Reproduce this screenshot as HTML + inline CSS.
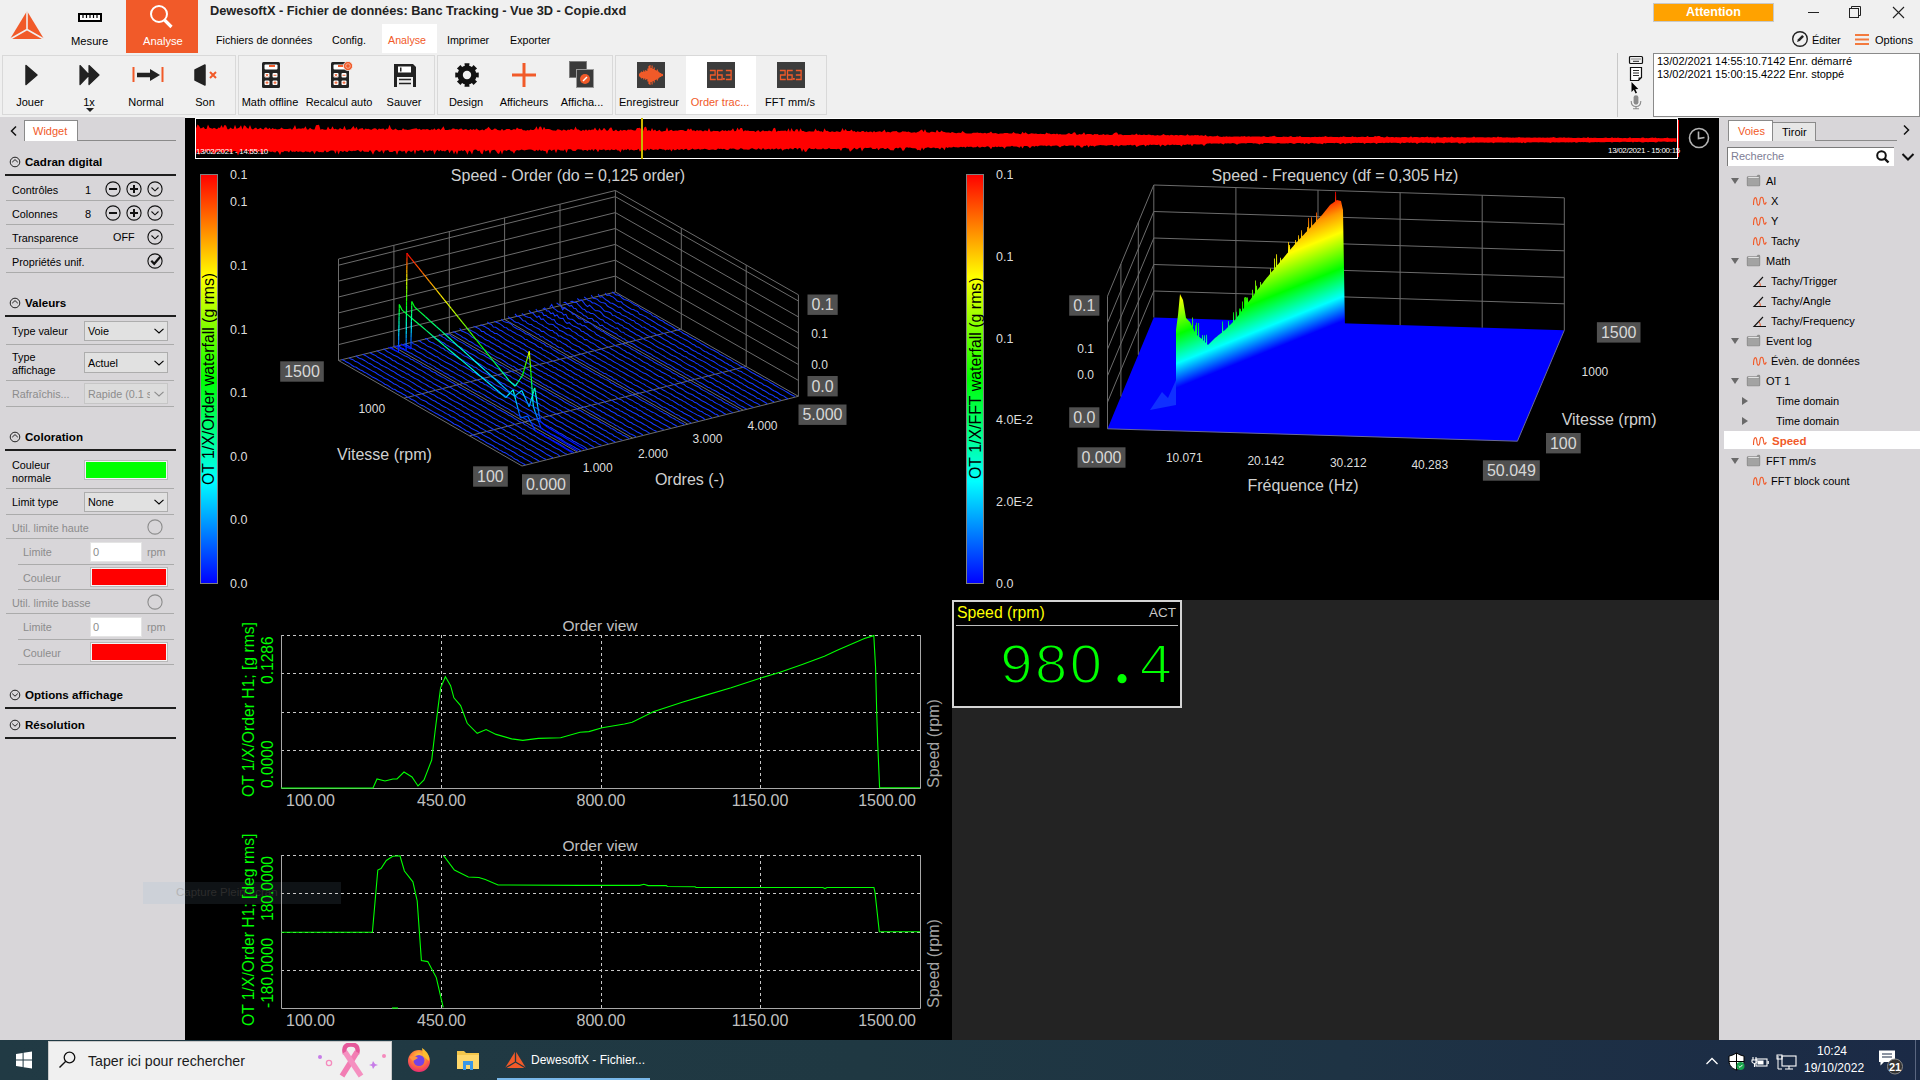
<!DOCTYPE html><html><head><meta charset='utf-8'><style>
*{margin:0;padding:0;box-sizing:border-box}
html,body{width:1920px;height:1080px;overflow:hidden;background:#f0f0f0;font-family:"Liberation Sans",sans-serif;color:#000}
.a{position:absolute}
.t{position:absolute;white-space:pre;line-height:1}
</style></head><body><div class="a" style="left:0px;top:117px;width:185px;height:923px;background:#d8d6d9"></div>
<div class="a" style="left:185px;top:118px;width:1534px;height:922px;background:#000"></div>
<div class="a" style="left:952px;top:600px;width:767px;height:440px;background:#232323"></div>
<div class="a" style="left:1719px;top:117px;width:201px;height:923px;background:#d8d6d9"></div>
<div class="a" style="left:0px;top:1040px;width:1920px;height:40px;background:linear-gradient(90deg,#1f3a42,#1c2b45)"></div>
<svg class="a" style="left:8px;top:9px" width="40" height="34" viewBox="0 0 40 34"><polygon points="19,2 36,30 2,30" fill="#f15a29"/><path d="M19,1 L19,20.5 M19,20.5 L1.5,30.5 M19,20.5 L36.5,30.5" stroke="#f0f0f0" stroke-width="1.6" fill="none"/></svg>
<svg class="a" style="left:78px;top:13px" width="24" height="9" viewBox="0 0 24 9"><rect x="1" y="1" width="22" height="7" fill="#fff" stroke="#000" stroke-width="2"/><path d="M5,2 V5 M8.5,2 V5 M12,2 V5 M15.5,2 V5 M19,2 V5" stroke="#000" stroke-width="1.2"/></svg>
<div class="t" style="left:71px;top:36px;font-size:11.2px;color:#000;">Mesure</div>
<div class="a" style="left:126px;top:0px;width:72px;height:53px;background:#f15a29"></div>
<svg class="a" style="left:146px;top:3px" width="30" height="28" viewBox="0 0 30 28"><circle cx="13" cy="11" r="8" fill="none" stroke="#fff" stroke-width="2"/><path d="M18.5,17 L25.5,24" stroke="#fff" stroke-width="3.2"/></svg>
<div class="t" style="left:143px;top:36px;font-size:11.2px;color:#fff;">Analyse</div>
<div class="t" style="left:210px;top:5px;font-size:12.8px;color:#222;font-weight:bold">DewesoftX - Fichier de données: Banc Tracking - Vue 3D - Copie.dxd</div>
<div class="a" style="left:382px;top:24px;width:55px;height:29px;background:#fff"></div>
<div class="t" style="left:216px;top:35px;font-size:10.7px;color:#000;">Fichiers de données</div>
<div class="t" style="left:332px;top:35px;font-size:10.7px;color:#000;">Config.</div>
<div class="t" style="left:388px;top:35px;font-size:10.7px;color:#f15a29;">Analyse</div>
<div class="t" style="left:447px;top:35px;font-size:10.7px;color:#000;">Imprimer</div>
<div class="t" style="left:510px;top:35px;font-size:10.7px;color:#000;">Exporter</div>
<div class="a" style="left:1653px;top:3px;width:121px;height:19px;background:#ffa200;border:1px solid #c8c8c8"></div>
<div class="t" style="left:1686px;top:6px;font-size:12.5px;color:#fff;font-weight:bold">Attention</div>
<svg class="a" style="left:1800px;top:0px" width="120" height="26" viewBox="0 0 120 26"><path d="M8,12.5 H19" stroke="#222" stroke-width="1"/><rect x="49.5" y="8.5" width="9" height="9" fill="none" stroke="#222" stroke-width="1"/><path d="M51.5,8.5 V6.5 H60.5 V15.5 H58.5" fill="none" stroke="#222" stroke-width="1"/><path d="M93,7 L104,18 M104,7 L93,18" stroke="#222" stroke-width="1.1"/></svg>
<svg class="a" style="left:1791px;top:30px" width="18" height="18" viewBox="0 0 18 18"><circle cx="9" cy="9" r="7.3" fill="none" stroke="#222" stroke-width="1.4"/><path d="M6,12 L7,9.2 L11.2,5 L13,6.8 L8.8,11 Z" fill="#222"/></svg>
<div class="t" style="left:1812px;top:35px;font-size:11px;color:#000;">Éditer</div>
<svg class="a" style="left:1854px;top:33px" width="16" height="14" viewBox="0 0 16 14"><path d="M1,2 H15 M1,6.5 H15 M1,11 H15" stroke="#f37a3e" stroke-width="2"/></svg>
<div class="t" style="left:1875px;top:35px;font-size:11px;color:#000;">Options</div>
<div class="a" style="left:2px;top:55px;width:234px;height:60px;border:1px solid #d9d9d9"></div>
<div class="a" style="left:238px;top:55px;width:197px;height:60px;border:1px solid #d9d9d9"></div>
<div class="a" style="left:437px;top:55px;width:176px;height:60px;border:1px solid #d9d9d9"></div>
<div class="a" style="left:615px;top:55px;width:212px;height:60px;border:1px solid #d9d9d9"></div>
<div class="a" style="left:686px;top:56px;width:70px;height:58px;background:#fff"></div>
<svg class="a" style="left:22px;top:62px" width="20" height="26" viewBox="0 0 20 26"><path d="M4,3.5 L15,13 L4,22.5 Z" fill="#222" stroke="#222" stroke-width="1.5" stroke-linejoin="round"/></svg>
<svg class="a" style="left:77px;top:62px" width="26" height="26" viewBox="0 0 26 26"><path d="M3,3.5 L12,13 L3,22.5 Z M12,3.5 L22,13 L12,22.5 Z" fill="#222" stroke="#222" stroke-width="1.2" stroke-linejoin="round"/></svg>
<svg class="a" style="left:130px;top:62px" width="36" height="26" viewBox="0 0 36 26"><path d="M3.5,5 V20 M32.5,5 V20" stroke="#f15a29" stroke-width="2"/><path d="M7,13 H22" stroke="#222" stroke-width="4.5"/><path d="M20,7 L30,13 L20,19 Z" fill="#222"/></svg>
<svg class="a" style="left:192px;top:62px" width="30" height="26" viewBox="0 0 30 26"><path d="M3,8 L13,3 L13,23 L3,18 Z" fill="#222" stroke="#222" stroke-width="1.5" stroke-linejoin="round"/><path d="M18,10 L24,16 M24,10 L18,16" stroke="#f15a29" stroke-width="2"/></svg>
<svg class="a" style="left:86px;top:108px" width="8" height="5" viewBox="0 0 8 5"><path d="M0,0 H8 L4,4 Z" fill="#222"/></svg>
<svg class="a" style="left:260px;top:61px" width="24" height="30" viewBox="0 0 24 30"><rect x="2" y="1" width="18" height="26" rx="1.5" fill="#222"/><rect x="4.5" y="3.5" width="13" height="5" rx="1" fill="#fff"/><path d="M9,5 H15" stroke="#f15a29" stroke-width="2"/><rect x="4.5" y="12" width="5" height="4.5" rx="1" fill="#fff"/><rect x="12.5" y="12" width="5" height="4.5" rx="1" fill="#fff"/><rect x="4.5" y="19.5" width="5" height="4.5" rx="1" fill="#fff"/><rect x="12.5" y="19.5" width="5" height="4.5" rx="1" fill="#fff"/><path d="M5.8,13 L8.2,15.5 M8.2,13 L5.8,15.5 M13.5,14.25 H16.5 M5.5,21.75 H8.5 M7,20.3 V23.2 M13.5,21.75 H16.5 M15,20.3 V23.2" stroke="#f15a29" stroke-width="1"/></svg>
<svg class="a" style="left:329px;top:61px" width="24" height="30" viewBox="0 0 24 30"><rect x="2" y="1" width="18" height="26" rx="1.5" fill="#222"/><rect x="4.5" y="3.5" width="13" height="5" rx="1" fill="#fff"/><path d="M9,5 H15" stroke="#f15a29" stroke-width="2"/><rect x="4.5" y="12" width="5" height="4.5" rx="1" fill="#fff"/><rect x="12.5" y="12" width="5" height="4.5" rx="1" fill="#fff"/><rect x="4.5" y="19.5" width="5" height="4.5" rx="1" fill="#fff"/><rect x="12.5" y="19.5" width="5" height="4.5" rx="1" fill="#fff"/><path d="M5.8,13 L8.2,15.5 M8.2,13 L5.8,15.5 M13.5,14.25 H16.5 M5.5,21.75 H8.5 M7,20.3 V23.2 M13.5,21.75 H16.5 M15,20.3 V23.2" stroke="#f15a29" stroke-width="1"/><circle cx="19" cy="5" r="4.6" fill="#f15a29" stroke="#f0f0f0" stroke-width="0.8"/><circle cx="19" cy="5" r="2.3" fill="#f15a29" stroke="#fbd0c0" stroke-width="0.7"/></svg>
<svg class="a" style="left:392px;top:62px" width="26" height="28" viewBox="0 0 26 28"><path d="M2,2 H21 L24,5 V25 H2 Z" fill="#222"/><rect x="6" y="4.5" width="13" height="6" fill="#fff"/><rect x="8" y="5.5" width="1.5" height="4" fill="#222"/><rect x="5" y="15" width="16" height="10" fill="#f0f0f0"/><path d="M7,17.5 H19 M7,21.5 H19" stroke="#222" stroke-width="1.6"/></svg>
<svg class="a" style="left:453px;top:61px" width="28" height="28" viewBox="0 0 28 28"><polygon points="25.74,11.51 25.74,16.49 22.52,16.20 21.58,18.47 24.06,20.54 20.54,24.06 18.47,21.58 16.20,22.52 16.49,25.74 11.51,25.74 11.80,22.52 9.53,21.58 7.46,24.06 3.94,20.54 6.42,18.47 5.48,16.20 2.26,16.49 2.26,11.51 5.48,11.80 6.42,9.53 3.94,7.46 7.46,3.94 9.53,6.42 11.80,5.48 11.51,2.26 16.49,2.26 16.20,5.48 18.47,6.42 20.54,3.94 24.06,7.46 21.58,9.53 22.52,11.80" fill="#111"/><circle cx="14" cy="14" r="9.5" fill="#111"/><circle cx="14" cy="14" r="4.2" fill="#f0f0f0"/></svg>
<svg class="a" style="left:510px;top:61px" width="28" height="28" viewBox="0 0 28 28"><path d="M14,2 V26 M2,14 H26" stroke="#f15a29" stroke-width="3"/></svg>
<svg class="a" style="left:567px;top:60px" width="30" height="30" viewBox="0 0 30 30"><rect x="2.5" y="1.5" width="17" height="16" fill="#3a3a3a" stroke="#777" stroke-width="0.8"/><rect x="9.5" y="9.5" width="17" height="18" fill="#3a3a3a" stroke="#999" stroke-width="1"/><circle cx="18" cy="19" r="5" fill="#f15a29"/><path d="M16,21 L20,17" stroke="#fff" stroke-width="1.5"/></svg>
<svg class="a" style="left:637px;top:62px" width="28" height="26" viewBox="0 0 28 26"><rect x="0" y="0" width="28" height="26" fill="#3c3c3c"/><path d="M2.50,11.5 V14.5 M3.55,10.5 V15.5 M4.60,9.5 V16.5 M5.65,10.0 V16.0 M6.70,8.5 V17.5 M7.75,9.5 V16.5 M8.80,8.0 V18.0 M9.85,9.0 V17.0 M10.90,6.5 V19.5 M11.95,4.0 V22.0 M13.00,3.0 V23.0 M14.05,6.0 V20.0 M15.10,3.5 V22.5 M16.15,7.0 V19.0 M17.20,5.5 V20.5 M18.25,8.0 V18.0 M19.30,8.5 V17.5 M20.35,7.5 V18.5 M21.40,9.5 V16.5 M22.45,10.5 V15.5 M23.50,11.0 V15.0 M24.55,11.8 V14.2" stroke="#f15a29" stroke-width="1.1"/><path d="M2,13 H26" stroke="#f15a29" stroke-width="2.2"/></svg>
<svg class="a" style="left:707px;top:62px" width="28" height="26" viewBox="0 0 28 26"><rect width="28" height="26" fill="#3c3c3c"/><path d="M3.5,8.5 L8.1,8.5 M8.1,8.5 L8.1,13.0 M3.5,13.0 L8.1,13.0 M3.5,13.0 L3.5,17.5 M3.5,17.5 L8.1,17.5 M10.5,8.5 L15.1,8.5 M10.5,8.5 L10.5,13.0 M10.5,13.0 L15.1,13.0 M10.5,13.0 L10.5,17.5 M10.5,17.5 L15.1,17.5 M15.1,13.0 L15.1,17.5 M19.5,8.5 L24.1,8.5 M24.1,8.5 L24.1,13.0 M19.5,13.0 L24.1,13.0 M24.1,13.0 L24.1,17.5 M19.5,17.5 L24.1,17.5 " fill="none" stroke="#f15a29" stroke-width="1.3" stroke-linecap="square"/><rect x="16" y="16" width="1.8" height="1.8" fill="#f15a29"/></svg>
<svg class="a" style="left:777px;top:62px" width="28" height="26" viewBox="0 0 28 26"><rect width="28" height="26" fill="#3c3c3c"/><path d="M3.5,8.5 L8.1,8.5 M8.1,8.5 L8.1,13.0 M3.5,13.0 L8.1,13.0 M3.5,13.0 L3.5,17.5 M3.5,17.5 L8.1,17.5 M10.5,8.5 L15.1,8.5 M10.5,8.5 L10.5,13.0 M10.5,13.0 L15.1,13.0 M10.5,13.0 L10.5,17.5 M10.5,17.5 L15.1,17.5 M15.1,13.0 L15.1,17.5 M19.5,8.5 L24.1,8.5 M24.1,8.5 L24.1,13.0 M19.5,13.0 L24.1,13.0 M24.1,13.0 L24.1,17.5 M19.5,17.5 L24.1,17.5 " fill="none" stroke="#f15a29" stroke-width="1.3" stroke-linecap="square"/><rect x="16" y="16" width="1.8" height="1.8" fill="#f15a29"/></svg>
<div class="t" style="left:-30px;top:97px;width:120px;text-align:center;font-size:11px;color:#000">Jouer</div>
<div class="t" style="left:29px;top:97px;width:120px;text-align:center;font-size:11px;color:#000">1x</div>
<div class="t" style="left:86px;top:97px;width:120px;text-align:center;font-size:11px;color:#000">Normal</div>
<div class="t" style="left:145px;top:97px;width:120px;text-align:center;font-size:11px;color:#000">Son</div>
<div class="t" style="left:210px;top:97px;width:120px;text-align:center;font-size:11px;color:#000">Math offline</div>
<div class="t" style="left:279px;top:97px;width:120px;text-align:center;font-size:11px;color:#000">Recalcul auto</div>
<div class="t" style="left:344px;top:97px;width:120px;text-align:center;font-size:11px;color:#000">Sauver</div>
<div class="t" style="left:406px;top:97px;width:120px;text-align:center;font-size:11px;color:#000">Design</div>
<div class="t" style="left:464px;top:97px;width:120px;text-align:center;font-size:11px;color:#000">Afficheurs</div>
<div class="t" style="left:522px;top:97px;width:120px;text-align:center;font-size:11px;color:#000">Afficha...</div>
<div class="t" style="left:589px;top:97px;width:120px;text-align:center;font-size:11px;color:#000">Enregistreur</div>
<div class="t" style="left:660px;top:97px;width:120px;text-align:center;font-size:11px;color:#f15a29">Order trac...</div>
<div class="t" style="left:730px;top:97px;width:120px;text-align:center;font-size:11px;color:#000">FFT mm/s</div>
<div class="a" style="left:1617px;top:53px;width:1px;height:64px;background:#c8c8c8"></div>
<svg class="a" style="left:1626px;top:54px" width="20" height="58" viewBox="0 0 20 58"><rect x="3.5" y="2.5" width="13" height="7" rx="1" fill="none" stroke="#111" stroke-width="1.2"/><path d="M5.5,5 H14.5" stroke="#111" stroke-width="0.9" stroke-dasharray="1,1"/><path d="M7,7.3 H13" stroke="#111" stroke-width="0.9"/><path d="M4.5,13.5 H15.5 V23.5 L12.5,26.5 H4.5 Z" fill="#fff" stroke="#111" stroke-width="1.2"/><path d="M15.5,23.5 L12.5,26.5 V23.5 Z" fill="#111"/><path d="M7,16.5 H13 M7,19 H13 M7,21.5 H13" stroke="#111" stroke-width="0.9"/><path d="M5.5,28 V38 L7.8,35.8 L9.6,39.5 L11,38.8 L9.3,35.2 L12.3,35 Z" fill="#000"/><rect x="7.6" y="41.2" width="4.8" height="9.5" rx="2.4" fill="#8a8a8a"/><path d="M5.2,47 Q5.2,52.5 10,52.5 Q14.8,52.5 14.8,47 M10,52.5 V54.5 M7,54.8 H13" fill="none" stroke="#8a8a8a" stroke-width="1.1"/></svg>
<div class="a" style="left:1653px;top:53px;width:267px;height:64px;background:#fff;border:1px solid #8a8a8a"></div>
<div class="t" style="left:1657px;top:56px;font-size:11px;color:#000;">13/02/2021 14:55:10.7142 Enr. démarré</div>
<div class="t" style="left:1657px;top:69px;font-size:11px;color:#000;">13/02/2021 15:00:15.4222 Enr. stoppé</div>
<div class="a" style="left:0px;top:115px;width:185px;height:2px;background:#f0f0f0"></div>
<svg class="a" style="left:9px;top:125px" width="10" height="12" viewBox="0 0 10 12"><path d="M7,1.5 L2.5,6 L7,10.5" fill="none" stroke="#111" stroke-width="1.5"/></svg>
<div class="a" style="left:24px;top:120px;width:54px;height:21px;background:#fff;border:1px solid #8a8a8a;border-bottom:none"></div>
<div class="t" style="left:33px;top:126px;font-size:11px;color:#f15a29;">Widget</div>
<div class="a" style="left:77px;top:140px;width:99px;height:1px;background:#8a8a8a"></div>
<svg class="a" style="left:9px;top:156px" width="12" height="12" viewBox="0 0 12 12"><circle cx="6" cy="6" r="4.8" fill="none" stroke="#222" stroke-width="1"/><path d="M3.2,6.2 L6,3.6 L8.8,6.2" fill="none" stroke="#222" stroke-width="1"/></svg>
<div class="t" style="left:25px;top:156px;font-size:11.6px;color:#000;font-weight:bold">Cadran digital</div>
<div class="a" style="left:5px;top:174px;width:171px;height:2.4px;background:#1e1e1e"></div>
<div class="t" style="left:12px;top:185px;font-size:10.8px;color:#000;">Contrôles</div>
<div class="t" style="left:85px;top:185px;font-size:11px;color:#000;">1</div>
<svg class="a" style="left:105px;top:181px" width="16" height="16" viewBox="0 0 16 16"><circle cx="8" cy="8" r="7.1" fill="none" stroke="#111" stroke-width="1.1"/><path d="M4,8 H12" stroke="#111" stroke-width="2"/></svg>
<svg class="a" style="left:126px;top:181px" width="16" height="16" viewBox="0 0 16 16"><circle cx="8" cy="8" r="7.1" fill="none" stroke="#111" stroke-width="1.1"/><path d="M4,8 H12 M8,4 V12" stroke="#111" stroke-width="2"/></svg>
<svg class="a" style="left:147px;top:181px" width="16" height="16" viewBox="0 0 16 16"><circle cx="8" cy="8" r="7.1" fill="none" stroke="#111" stroke-width="1.1"/><path d="M4.5,6.5 L8,9.8 L11.5,6.5" fill="none" stroke="#111" stroke-width="1.1"/></svg>
<div class="a" style="left:6px;top:200px;width:168px;height:1px;background:#ababab"></div>
<div class="t" style="left:12px;top:209px;font-size:10.8px;color:#000;">Colonnes</div>
<div class="t" style="left:85px;top:209px;font-size:11px;color:#000;">8</div>
<svg class="a" style="left:105px;top:205px" width="16" height="16" viewBox="0 0 16 16"><circle cx="8" cy="8" r="7.1" fill="none" stroke="#111" stroke-width="1.1"/><path d="M4,8 H12" stroke="#111" stroke-width="2"/></svg>
<svg class="a" style="left:126px;top:205px" width="16" height="16" viewBox="0 0 16 16"><circle cx="8" cy="8" r="7.1" fill="none" stroke="#111" stroke-width="1.1"/><path d="M4,8 H12 M8,4 V12" stroke="#111" stroke-width="2"/></svg>
<svg class="a" style="left:147px;top:205px" width="16" height="16" viewBox="0 0 16 16"><circle cx="8" cy="8" r="7.1" fill="none" stroke="#111" stroke-width="1.1"/><path d="M4.5,6.5 L8,9.8 L11.5,6.5" fill="none" stroke="#111" stroke-width="1.1"/></svg>
<div class="a" style="left:6px;top:224px;width:168px;height:1px;background:#ababab"></div>
<div class="t" style="left:12px;top:233px;font-size:10.8px;color:#000;">Transparence</div>
<div class="t" style="left:113px;top:232px;font-size:10.8px;color:#000;">OFF</div>
<svg class="a" style="left:147px;top:229px" width="16" height="16" viewBox="0 0 16 16"><circle cx="8" cy="8" r="7.1" fill="none" stroke="#111" stroke-width="1.1"/><path d="M4.5,6.5 L8,9.8 L11.5,6.5" fill="none" stroke="#111" stroke-width="1.1"/></svg>
<div class="a" style="left:6px;top:248px;width:168px;height:1px;background:#ababab"></div>
<div class="t" style="left:12px;top:257px;font-size:10.8px;color:#000;">Propriétés unif.</div>
<svg class="a" style="left:147px;top:253px" width="16" height="16" viewBox="0 0 16 16"><circle cx="8" cy="8" r="7.1" fill="none" stroke="#111" stroke-width="1.1"/><path d="M4.3,7.8 L7.2,10.8 L13.5,3.5" fill="none" stroke="#111" stroke-width="2.2"/></svg>
<div class="a" style="left:6px;top:272px;width:168px;height:1px;background:#ababab"></div>
<svg class="a" style="left:9px;top:297px" width="12" height="12" viewBox="0 0 12 12"><circle cx="6" cy="6" r="4.8" fill="none" stroke="#222" stroke-width="1"/><path d="M3.2,6.2 L6,3.6 L8.8,6.2" fill="none" stroke="#222" stroke-width="1"/></svg>
<div class="t" style="left:25px;top:297px;font-size:11.6px;color:#000;font-weight:bold">Valeurs</div>
<div class="a" style="left:5px;top:315px;width:171px;height:2.4px;background:#1e1e1e"></div>
<div class="t" style="left:12px;top:326px;font-size:10.8px;color:#000;">Type valeur</div>
<div class="a" style="left:84px;top:321px;width:84px;height:20px;background:#e1e1e1;border:1px solid #adadad"></div>
<div class="t" style="left:88px;top:326.0px;font-size:10.8px;color:#000;">Voie</div>
<svg class="a" style="left:153px;top:327.0px" width="12" height="8" viewBox="0 0 12 8"><path d="M1.5,1.8 L6,6 L10.5,1.8" fill="none" stroke="#000" stroke-width="1.1"/></svg>
<div class="a" style="left:6px;top:344px;width:168px;height:1px;background:#ababab"></div>
<div class="t" style="left:12px;top:352px;font-size:10.8px;color:#000;">Type</div>
<div class="t" style="left:12px;top:365px;font-size:10.8px;color:#000;">affichage</div>
<div class="a" style="left:84px;top:352px;width:84px;height:21px;background:#e1e1e1;border:1px solid #adadad"></div>
<div class="t" style="left:88px;top:357.5px;font-size:10.8px;color:#000;">Actuel</div>
<svg class="a" style="left:153px;top:358.5px" width="12" height="8" viewBox="0 0 12 8"><path d="M1.5,1.8 L6,6 L10.5,1.8" fill="none" stroke="#000" stroke-width="1.1"/></svg>
<div class="a" style="left:6px;top:380px;width:168px;height:1px;background:#ababab"></div>
<div class="t" style="left:12px;top:389px;font-size:10.8px;color:#8c8c8c;">Rafraîchis...</div>
<div class="a" style="left:84px;top:383px;width:84px;height:21px;background:#dcdcdc;border:1px solid #c6c6c6"></div>
<div class="t" style="left:88px;top:388.5px;font-size:10.8px;color:#8c8c8c;">Rapide (0.1 s</div>
<div class="a" style="left:150px;top:384px;width:17px;height:19px;background:#dcdcdc"></div>
<svg class="a" style="left:153px;top:389.5px" width="12" height="8" viewBox="0 0 12 8"><path d="M1.5,1.8 L6,6 L10.5,1.8" fill="none" stroke="#8c8c8c" stroke-width="1.1"/></svg>
<div class="a" style="left:6px;top:406px;width:168px;height:1px;background:#ababab"></div>
<svg class="a" style="left:9px;top:431px" width="12" height="12" viewBox="0 0 12 12"><circle cx="6" cy="6" r="4.8" fill="none" stroke="#222" stroke-width="1"/><path d="M3.2,6.2 L6,3.6 L8.8,6.2" fill="none" stroke="#222" stroke-width="1"/></svg>
<div class="t" style="left:25px;top:431px;font-size:11.6px;color:#000;font-weight:bold">Coloration</div>
<div class="a" style="left:5px;top:449px;width:171px;height:2.4px;background:#1e1e1e"></div>
<div class="t" style="left:12px;top:460px;font-size:10.8px;color:#000;">Couleur</div>
<div class="t" style="left:12px;top:473px;font-size:10.8px;color:#000;">normale</div>
<div class="a" style="left:85px;top:461px;width:82px;height:18px;background:#00ff00;border:1px solid #f4f4f4;outline:1px solid #b9b9b9"></div>
<div class="a" style="left:6px;top:488px;width:168px;height:1px;background:#ababab"></div>
<div class="t" style="left:12px;top:497px;font-size:10.8px;color:#000;">Limit type</div>
<div class="a" style="left:84px;top:492px;width:84px;height:20px;background:#e1e1e1;border:1px solid #adadad"></div>
<div class="t" style="left:88px;top:497.0px;font-size:10.8px;color:#000;">None</div>
<svg class="a" style="left:153px;top:498.0px" width="12" height="8" viewBox="0 0 12 8"><path d="M1.5,1.8 L6,6 L10.5,1.8" fill="none" stroke="#000" stroke-width="1.1"/></svg>
<div class="a" style="left:6px;top:514px;width:168px;height:1px;background:#ababab"></div>
<div class="t" style="left:12px;top:523px;font-size:10.8px;color:#8c8c8c;">Util. limite haute</div>
<svg class="a" style="left:147px;top:519px" width="16" height="16" viewBox="0 0 16 16"><circle cx="8" cy="8" r="7.1" fill="none" stroke="#8c8c8c" stroke-width="1.1"/></svg>
<div class="a" style="left:6px;top:538px;width:168px;height:1px;background:#ababab"></div>
<div class="t" style="left:23px;top:547px;font-size:10.8px;color:#8c8c8c;">Limite</div>
<div class="a" style="left:90px;top:542px;width:52px;height:20px;background:#fff;border:1px solid #e4e4e4"></div>
<div class="t" style="left:93px;top:547px;font-size:11px;color:#8c8c8c;">0</div>
<div class="t" style="left:147px;top:547px;font-size:10.8px;color:#8c8c8c;">rpm</div>
<div class="a" style="left:18px;top:564px;width:156px;height:1px;background:#ababab"></div>
<div class="t" style="left:23px;top:573px;font-size:10.8px;color:#8c8c8c;">Couleur</div>
<div class="a" style="left:91px;top:568px;width:76px;height:18px;background:#ff0000;border:1px solid #f4f4f4;outline:1px solid #b9b9b9"></div>
<div class="a" style="left:18px;top:589px;width:156px;height:1px;background:#ababab"></div>
<div class="t" style="left:12px;top:598px;font-size:10.8px;color:#8c8c8c;">Util. limite basse</div>
<svg class="a" style="left:147px;top:594px" width="16" height="16" viewBox="0 0 16 16"><circle cx="8" cy="8" r="7.1" fill="none" stroke="#8c8c8c" stroke-width="1.1"/></svg>
<div class="a" style="left:6px;top:613px;width:168px;height:1px;background:#ababab"></div>
<div class="t" style="left:23px;top:622px;font-size:10.8px;color:#8c8c8c;">Limite</div>
<div class="a" style="left:90px;top:617px;width:52px;height:20px;background:#fff;border:1px solid #e4e4e4"></div>
<div class="t" style="left:93px;top:622px;font-size:11px;color:#8c8c8c;">0</div>
<div class="t" style="left:147px;top:622px;font-size:10.8px;color:#8c8c8c;">rpm</div>
<div class="a" style="left:18px;top:639px;width:156px;height:1px;background:#ababab"></div>
<div class="t" style="left:23px;top:648px;font-size:10.8px;color:#8c8c8c;">Couleur</div>
<div class="a" style="left:91px;top:643px;width:76px;height:18px;background:#ff0000;border:1px solid #f4f4f4;outline:1px solid #b9b9b9"></div>
<div class="a" style="left:18px;top:664px;width:156px;height:1px;background:#ababab"></div>
<svg class="a" style="left:9px;top:689px" width="12" height="12" viewBox="0 0 12 12"><circle cx="6" cy="6" r="4.8" fill="none" stroke="#222" stroke-width="1"/><path d="M3.2,4.6 L6,7.2 L8.8,4.6" fill="none" stroke="#222" stroke-width="1"/></svg>
<div class="t" style="left:25px;top:689px;font-size:11.6px;color:#000;font-weight:bold">Options affichage</div>
<div class="a" style="left:5px;top:707px;width:171px;height:2.4px;background:#1e1e1e"></div>
<svg class="a" style="left:9px;top:719px" width="12" height="12" viewBox="0 0 12 12"><circle cx="6" cy="6" r="4.8" fill="none" stroke="#222" stroke-width="1"/><path d="M3.2,4.6 L6,7.2 L8.8,4.6" fill="none" stroke="#222" stroke-width="1"/></svg>
<div class="t" style="left:25px;top:719px;font-size:11.6px;color:#000;font-weight:bold">Résolution</div>
<div class="a" style="left:5px;top:737px;width:171px;height:2.4px;background:#1e1e1e"></div>
<div class="a" style="left:1728px;top:120px;width:45px;height:21px;background:#fff;border:1px solid #8a8a8a;border-bottom:none"></div>
<div class="t" style="left:1738px;top:126px;font-size:11px;color:#f15a29;">Voies</div>
<div class="a" style="left:1772px;top:122px;width:44px;height:19px;background:#e6e6e6;border:1px solid #8a8a8a;border-bottom:none"></div>
<div class="t" style="left:1782px;top:127px;font-size:11px;color:#000;">Tiroir</div>
<div class="a" style="left:1815px;top:140px;width:82px;height:1px;background:#8a8a8a"></div>
<svg class="a" style="left:1901px;top:124px" width="10" height="12" viewBox="0 0 10 12"><path d="M3,1.5 L7.5,6 L3,10.5" fill="none" stroke="#111" stroke-width="1.5"/></svg>
<div class="a" style="left:1727px;top:147px;width:167px;height:19px;background:#fff;border-top:1px solid #7a7a7a;border-left:1px solid #7a7a7a"></div>
<div class="t" style="left:1731px;top:151px;font-size:11px;color:#7d7d94;">Recherche</div>
<svg class="a" style="left:1875px;top:149px" width="16" height="16" viewBox="0 0 16 16"><circle cx="6.5" cy="6.5" r="4.3" fill="none" stroke="#111" stroke-width="2"/><path d="M9.6,9.6 L13.5,13.5" stroke="#111" stroke-width="2.4"/></svg>
<svg class="a" style="left:1901px;top:152px" width="14" height="10" viewBox="0 0 14 10"><path d="M1.5,2 L7,7.5 L12.5,2" fill="none" stroke="#111" stroke-width="2"/></svg>
<div class="a" style="left:1724px;top:431px;width:196px;height:18px;background:#fff"></div>
<svg class="a" style="left:1730px;top:177px" width="10" height="8" viewBox="0 0 10 8"><path d="M1,1 H9 L5,7 Z" fill="#6a6a6a"/></svg>
<svg class="a" style="left:1746px;top:174px" width="15" height="13" viewBox="0 0 15 13"><path d="M0.8,3.5 Q0.8,2.2 2.2,2.2 H10.5 L11.8,0.8 H13 Q14.2,0.8 14.2,2.2 V11 Q14.2,12.3 13,12.3 H2 Q0.8,12.3 0.8,11 Z" fill="#8f8f8f"/><path d="M2.2,3.6 H12.8" stroke="#e2e2e2" stroke-width="1.2"/><rect x="1.8" y="5" width="11.4" height="6.5" fill="#a3a3a3"/></svg>
<div class="t" style="left:1766px;top:176px;font-size:11px;color:#000;">AI</div>
<svg class="a" style="left:1752px;top:194px" width="16" height="14" viewBox="0 0 16 14"><path d="M1.5,11 C1.5,2 4.5,2 4.8,7 C5.1,12.5 7.6,12.5 7.9,7 C8.2,2 11.2,2 11.5,7 C11.8,11 13.5,11 14.2,8" fill="none" stroke="#f15a29" stroke-width="1.15"/></svg>
<div class="t" style="left:1771px;top:196px;font-size:11px;color:#000;">X</div>
<svg class="a" style="left:1752px;top:214px" width="16" height="14" viewBox="0 0 16 14"><path d="M1.5,11 C1.5,2 4.5,2 4.8,7 C5.1,12.5 7.6,12.5 7.9,7 C8.2,2 11.2,2 11.5,7 C11.8,11 13.5,11 14.2,8" fill="none" stroke="#f15a29" stroke-width="1.15"/></svg>
<div class="t" style="left:1771px;top:216px;font-size:11px;color:#000;">Y</div>
<svg class="a" style="left:1752px;top:234px" width="16" height="14" viewBox="0 0 16 14"><path d="M1.5,11 C1.5,2 4.5,2 4.8,7 C5.1,12.5 7.6,12.5 7.9,7 C8.2,2 11.2,2 11.5,7 C11.8,11 13.5,11 14.2,8" fill="none" stroke="#f15a29" stroke-width="1.15"/></svg>
<div class="t" style="left:1771px;top:236px;font-size:11px;color:#000;">Tachy</div>
<svg class="a" style="left:1730px;top:257px" width="10" height="8" viewBox="0 0 10 8"><path d="M1,1 H9 L5,7 Z" fill="#6a6a6a"/></svg>
<svg class="a" style="left:1746px;top:254px" width="15" height="13" viewBox="0 0 15 13"><path d="M0.8,3.5 Q0.8,2.2 2.2,2.2 H10.5 L11.8,0.8 H13 Q14.2,0.8 14.2,2.2 V11 Q14.2,12.3 13,12.3 H2 Q0.8,12.3 0.8,11 Z" fill="#8f8f8f"/><path d="M2.2,3.6 H12.8" stroke="#e2e2e2" stroke-width="1.2"/><rect x="1.8" y="5" width="11.4" height="6.5" fill="#a3a3a3"/></svg>
<div class="t" style="left:1766px;top:256px;font-size:11px;color:#000;">Math</div>
<svg class="a" style="left:1752px;top:274px" width="15" height="14" viewBox="0 0 15 14"><path d="M11,3 L2,12.5 H14" fill="none" stroke="#111" stroke-width="1.1"/><path d="M7,7.8 Q8.6,9.6 8.3,12" fill="none" stroke="#f15a29" stroke-width="1"/></svg>
<div class="t" style="left:1771px;top:276px;font-size:11px;color:#000;">Tachy/Trigger</div>
<svg class="a" style="left:1752px;top:294px" width="15" height="14" viewBox="0 0 15 14"><path d="M11,3 L2,12.5 H14" fill="none" stroke="#111" stroke-width="1.1"/><path d="M7,7.8 Q8.6,9.6 8.3,12" fill="none" stroke="#f15a29" stroke-width="1"/></svg>
<div class="t" style="left:1771px;top:296px;font-size:11px;color:#000;">Tachy/Angle</div>
<svg class="a" style="left:1752px;top:314px" width="15" height="14" viewBox="0 0 15 14"><path d="M11,3 L2,12.5 H14" fill="none" stroke="#111" stroke-width="1.1"/><path d="M7,7.8 Q8.6,9.6 8.3,12" fill="none" stroke="#f15a29" stroke-width="1"/></svg>
<div class="t" style="left:1771px;top:316px;font-size:11px;color:#000;">Tachy/Frequency</div>
<svg class="a" style="left:1730px;top:337px" width="10" height="8" viewBox="0 0 10 8"><path d="M1,1 H9 L5,7 Z" fill="#6a6a6a"/></svg>
<svg class="a" style="left:1746px;top:334px" width="15" height="13" viewBox="0 0 15 13"><path d="M0.8,3.5 Q0.8,2.2 2.2,2.2 H10.5 L11.8,0.8 H13 Q14.2,0.8 14.2,2.2 V11 Q14.2,12.3 13,12.3 H2 Q0.8,12.3 0.8,11 Z" fill="#8f8f8f"/><path d="M2.2,3.6 H12.8" stroke="#e2e2e2" stroke-width="1.2"/><rect x="1.8" y="5" width="11.4" height="6.5" fill="#a3a3a3"/></svg>
<div class="t" style="left:1766px;top:336px;font-size:11px;color:#000;">Event log</div>
<svg class="a" style="left:1752px;top:354px" width="16" height="14" viewBox="0 0 16 14"><path d="M1.5,11 C1.5,2 4.5,2 4.8,7 C5.1,12.5 7.6,12.5 7.9,7 C8.2,2 11.2,2 11.5,7 C11.8,11 13.5,11 14.2,8" fill="none" stroke="#f15a29" stroke-width="1.15"/></svg>
<div class="t" style="left:1771px;top:356px;font-size:11px;color:#000;">Évèn. de données</div>
<svg class="a" style="left:1730px;top:377px" width="10" height="8" viewBox="0 0 10 8"><path d="M1,1 H9 L5,7 Z" fill="#6a6a6a"/></svg>
<svg class="a" style="left:1746px;top:374px" width="15" height="13" viewBox="0 0 15 13"><path d="M0.8,3.5 Q0.8,2.2 2.2,2.2 H10.5 L11.8,0.8 H13 Q14.2,0.8 14.2,2.2 V11 Q14.2,12.3 13,12.3 H2 Q0.8,12.3 0.8,11 Z" fill="#8f8f8f"/><path d="M2.2,3.6 H12.8" stroke="#e2e2e2" stroke-width="1.2"/><rect x="1.8" y="5" width="11.4" height="6.5" fill="#a3a3a3"/></svg>
<div class="t" style="left:1766px;top:376px;font-size:11px;color:#000;">OT 1</div>
<svg class="a" style="left:1741px;top:396px" width="8" height="10" viewBox="0 0 8 10"><path d="M1,1 V9 L7,5 Z" fill="#6a6a6a"/></svg>
<div class="t" style="left:1776px;top:396px;font-size:11px;color:#000;">Time domain</div>
<svg class="a" style="left:1741px;top:416px" width="8" height="10" viewBox="0 0 8 10"><path d="M1,1 V9 L7,5 Z" fill="#6a6a6a"/></svg>
<div class="t" style="left:1776px;top:416px;font-size:11px;color:#000;">Time domain</div>
<svg class="a" style="left:1752px;top:434px" width="16" height="14" viewBox="0 0 16 14"><path d="M1.5,11 C1.5,2 4.5,2 4.8,7 C5.1,12.5 7.6,12.5 7.9,7 C8.2,2 11.2,2 11.5,7 C11.8,11 13.5,11 14.2,8" fill="none" stroke="#f15a29" stroke-width="1.15"/></svg>
<div class="t" style="left:1772px;top:436px;font-size:11.5px;color:#f15a29;font-weight:bold">Speed</div>
<svg class="a" style="left:1730px;top:457px" width="10" height="8" viewBox="0 0 10 8"><path d="M1,1 H9 L5,7 Z" fill="#6a6a6a"/></svg>
<svg class="a" style="left:1746px;top:454px" width="15" height="13" viewBox="0 0 15 13"><path d="M0.8,3.5 Q0.8,2.2 2.2,2.2 H10.5 L11.8,0.8 H13 Q14.2,0.8 14.2,2.2 V11 Q14.2,12.3 13,12.3 H2 Q0.8,12.3 0.8,11 Z" fill="#8f8f8f"/><path d="M2.2,3.6 H12.8" stroke="#e2e2e2" stroke-width="1.2"/><rect x="1.8" y="5" width="11.4" height="6.5" fill="#a3a3a3"/></svg>
<div class="t" style="left:1766px;top:456px;font-size:11px;color:#000;">FFT mm/s</div>
<svg class="a" style="left:1752px;top:474px" width="16" height="14" viewBox="0 0 16 14"><path d="M1.5,11 C1.5,2 4.5,2 4.8,7 C5.1,12.5 7.6,12.5 7.9,7 C8.2,2 11.2,2 11.5,7 C11.8,11 13.5,11 14.2,8" fill="none" stroke="#f15a29" stroke-width="1.15"/></svg>
<div class="t" style="left:1771px;top:476px;font-size:11px;color:#000;">FFT block count</div>
<svg class="a" style="left:0;top:0" width="1920" height="1080" viewBox="0 0 1920 1080"><polygon points="196.0,128.6 197.5,124.6 199.0,125.8 200.5,128.4 202.0,127.9 203.5,127.1 205.0,129.0 206.5,129.0 208.0,124.6 209.5,127.8 211.0,128.3 212.5,128.8 214.0,127.7 215.5,128.4 217.0,129.3 218.5,127.4 220.0,128.1 221.5,124.9 223.0,128.0 224.5,125.1 226.0,125.6 227.5,129.2 229.0,129.3 230.5,127.6 232.0,128.7 233.5,129.1 235.0,124.7 236.5,128.7 238.0,128.3 239.5,127.4 241.0,125.2 242.5,129.4 244.0,125.3 245.5,125.9 247.0,128.1 248.5,128.7 250.0,125.1 251.5,128.8 253.0,129.5 254.5,128.3 256.0,127.6 257.5,129.2 259.0,128.8 260.5,127.7 262.0,129.1 263.5,129.5 265.0,127.4 266.5,127.5 268.0,129.2 269.5,127.7 271.0,129.5 272.5,127.9 274.0,128.9 275.5,128.8 277.0,129.4 278.5,129.3 280.0,128.9 281.5,127.5 283.0,128.7 284.5,129.1 286.0,129.1 287.5,128.9 289.0,128.8 290.5,128.5 292.0,129.7 293.5,128.1 295.0,125.1 296.5,129.2 298.0,128.5 299.5,128.4 301.0,128.7 302.5,128.2 304.0,128.5 305.5,126.2 307.0,129.6 308.5,129.4 310.0,127.8 311.5,128.9 313.0,129.5 314.5,129.4 316.0,125.2 317.5,125.1 319.0,124.7 320.5,129.8 322.0,128.9 323.5,129.5 325.0,129.7 326.5,129.7 328.0,126.4 329.5,128.9 331.0,129.3 332.5,126.3 334.0,129.2 335.5,128.8 337.0,129.4 338.5,129.5 340.0,128.1 341.5,129.1 343.0,129.2 344.5,125.7 346.0,129.8 347.5,129.8 349.0,129.3 350.5,129.6 352.0,127.8 353.5,126.0 355.0,128.9 356.5,126.7 358.0,129.9 359.5,128.7 361.0,128.4 362.5,127.9 364.0,129.9 365.5,128.4 367.0,128.9 368.5,128.8 370.0,129.5 371.5,129.8 373.0,128.7 374.5,128.3 376.0,128.6 377.5,129.9 379.0,128.5 380.5,129.0 382.0,128.7 383.5,128.5 385.0,130.0 386.5,128.6 388.0,129.1 389.5,124.8 391.0,128.4 392.5,129.7 394.0,129.8 395.5,128.4 397.0,129.7 398.5,130.2 400.0,129.9 401.5,130.2 403.0,128.2 404.5,129.4 406.0,129.4 407.5,130.0 409.0,129.7 410.5,129.4 412.0,128.9 413.5,128.7 415.0,128.6 416.5,128.2 418.0,129.6 419.5,128.8 421.0,129.9 422.5,129.2 424.0,129.3 425.5,129.5 427.0,129.1 428.5,129.4 430.0,130.2 431.5,129.2 433.0,129.7 434.5,128.3 436.0,130.2 437.5,129.1 439.0,128.6 440.5,130.1 442.0,128.3 443.5,126.2 445.0,129.9 446.5,130.1 448.0,130.1 449.5,129.5 451.0,129.7 452.5,128.5 454.0,128.4 455.5,129.3 457.0,129.0 458.5,129.7 460.0,128.7 461.5,128.4 463.0,130.0 464.5,129.4 466.0,129.0 467.5,130.0 469.0,130.3 470.5,128.9 472.0,130.1 473.5,129.1 475.0,130.1 476.5,128.5 478.0,129.7 479.5,130.4 481.0,130.1 482.5,129.6 484.0,130.4 485.5,129.0 487.0,128.5 488.5,126.8 490.0,128.6 491.5,130.0 493.0,129.7 494.5,128.6 496.0,128.8 497.5,129.9 499.0,130.2 500.5,130.5 502.0,128.8 503.5,130.4 505.0,130.1 506.5,129.1 508.0,128.9 509.5,129.1 511.0,130.3 512.5,129.8 514.0,129.0 515.5,129.7 517.0,127.5 518.5,128.7 520.0,128.9 521.5,128.7 523.0,130.2 524.5,130.2 526.0,130.7 527.5,130.1 529.0,130.6 530.5,129.4 532.0,129.9 533.5,130.1 535.0,129.0 536.5,126.2 538.0,129.9 539.5,126.8 541.0,126.5 542.5,130.0 544.0,126.7 545.5,129.2 547.0,128.9 548.5,129.0 550.0,129.2 551.5,130.0 553.0,130.4 554.5,130.6 556.0,130.8 557.5,129.2 559.0,129.6 560.5,130.0 562.0,130.8 563.5,129.4 565.0,130.0 566.5,130.7 568.0,129.6 569.5,129.9 571.0,129.0 572.5,129.5 574.0,130.0 575.5,126.4 577.0,129.5 578.5,129.4 580.0,130.6 581.5,130.9 583.0,129.7 584.5,130.8 586.0,129.3 587.5,130.8 589.0,129.5 590.5,130.3 592.0,129.6 593.5,129.8 595.0,127.5 596.5,129.9 598.0,130.8 599.5,128.1 601.0,130.6 602.5,129.9 604.0,127.7 605.5,129.4 607.0,131.1 608.5,129.9 610.0,127.7 611.5,127.4 613.0,131.1 614.5,130.8 616.0,129.6 617.5,131.1 619.0,131.2 620.5,129.8 622.0,130.7 623.5,129.9 625.0,130.1 626.5,130.7 628.0,129.5 629.5,129.8 631.0,129.5 632.5,130.0 634.0,130.4 635.5,130.4 637.0,128.0 638.5,128.1 640.0,127.8 641.5,130.0 643.0,131.2 644.5,126.9 646.0,126.7 647.5,131.1 649.0,130.1 650.5,131.2 652.0,127.9 653.5,130.8 655.0,129.5 656.5,131.3 658.0,130.7 659.5,129.8 661.0,131.4 662.5,131.4 664.0,131.1 665.5,130.9 667.0,127.3 668.5,131.3 670.0,130.3 671.5,129.8 673.0,131.1 674.5,130.8 676.0,130.5 677.5,130.8 679.0,130.3 680.5,130.1 682.0,129.9 683.5,130.2 685.0,131.1 686.5,130.9 688.0,128.6 689.5,129.7 691.0,128.4 692.5,130.8 694.0,130.3 695.5,131.3 697.0,129.9 698.5,130.8 700.0,130.2 701.5,130.4 703.0,131.4 704.5,130.5 706.0,130.5 707.5,131.3 709.0,128.0 710.5,131.4 712.0,131.5 713.5,130.7 715.0,130.9 716.5,131.0 718.0,131.0 719.5,131.7 721.0,131.1 722.5,130.0 724.0,131.0 725.5,130.3 727.0,131.3 728.5,130.3 730.0,130.8 731.5,130.2 733.0,128.3 734.5,131.3 736.0,131.0 737.5,127.4 739.0,130.2 740.5,128.0 742.0,127.9 743.5,131.4 745.0,130.2 746.5,130.7 748.0,130.4 749.5,130.9 751.0,130.9 752.5,131.0 754.0,131.0 755.5,131.9 757.0,130.7 758.5,130.2 760.0,131.9 761.5,131.3 763.0,130.3 764.5,131.3 766.0,131.0 767.5,131.2 769.0,130.5 770.5,131.1 772.0,131.4 773.5,128.2 775.0,127.8 776.5,132.0 778.0,130.8 779.5,130.9 781.0,130.8 782.5,130.7 784.0,130.7 785.5,130.6 787.0,131.5 788.5,128.3 790.0,132.0 791.5,127.9 793.0,131.0 794.5,131.4 796.0,129.2 797.5,129.3 799.0,131.9 800.5,128.2 802.0,130.9 803.5,131.0 805.0,131.7 806.5,132.1 808.0,131.6 809.5,131.3 811.0,131.4 812.5,131.5 814.0,131.5 815.5,128.6 817.0,131.0 818.5,130.5 820.0,131.5 821.5,131.2 823.0,132.2 824.5,128.3 826.0,130.9 827.5,130.8 829.0,131.7 830.5,131.9 832.0,131.2 833.5,131.8 835.0,132.1 836.5,131.3 838.0,131.5 839.5,132.0 841.0,131.6 842.5,128.1 844.0,131.0 845.5,129.0 847.0,130.9 848.5,131.0 850.0,131.0 851.5,129.5 853.0,131.4 854.5,130.9 856.0,132.2 857.5,131.3 859.0,131.7 860.5,132.0 862.0,130.9 863.5,131.1 865.0,132.3 866.5,131.3 868.0,132.3 869.5,131.7 871.0,131.4 872.5,132.4 874.0,131.1 875.5,132.3 877.0,131.8 878.5,131.5 880.0,131.3 881.5,132.1 883.0,131.2 884.5,129.6 886.0,132.5 887.5,131.8 889.0,132.0 890.5,132.4 892.0,131.4 893.5,131.3 895.0,131.2 896.5,131.1 898.0,132.3 899.5,132.5 901.0,132.2 902.5,131.3 904.0,131.5 905.5,131.4 907.0,131.9 908.5,131.4 910.0,132.2 911.5,132.8 913.0,132.6 914.5,132.3 916.0,132.8 917.5,132.1 919.0,131.4 920.5,130.2 922.0,129.5 923.5,132.1 925.0,129.3 926.5,132.3 928.0,132.4 929.5,132.8 931.0,131.8 932.5,131.8 934.0,131.9 935.5,132.5 937.0,129.7 938.5,131.8 940.0,132.3 941.5,130.4 943.0,131.8 944.5,132.1 946.0,132.4 947.5,132.5 949.0,132.6 950.5,132.9 952.0,132.0 953.5,132.6 955.0,133.0 956.5,133.3 958.0,132.7 959.5,132.8 961.0,133.1 962.5,130.9 964.0,132.3 965.5,133.2 967.0,133.4 968.5,133.5 970.0,133.5 971.5,133.5 973.0,132.8 974.5,132.7 976.0,132.7 977.5,132.6 979.0,133.1 980.5,132.7 982.0,133.2 983.5,133.3 985.0,132.8 986.5,133.6 988.0,133.1 989.5,132.8 991.0,131.4 992.5,133.2 994.0,133.3 995.5,133.1 997.0,133.6 998.5,133.9 1000.0,133.4 1001.5,133.5 1003.0,133.4 1004.5,132.9 1006.0,133.0 1007.5,133.0 1009.0,133.5 1010.5,133.4 1012.0,133.4 1013.5,131.9 1015.0,133.2 1016.5,133.6 1018.0,133.6 1019.5,134.1 1021.0,134.2 1022.5,131.7 1024.0,133.4 1025.5,132.3 1027.0,133.6 1028.5,134.3 1030.0,133.8 1031.5,133.3 1033.0,133.4 1034.5,133.8 1036.0,133.6 1037.5,133.9 1039.0,134.0 1040.5,133.8 1042.0,134.0 1043.5,134.1 1045.0,134.3 1046.5,132.6 1048.0,133.6 1049.5,133.6 1051.0,134.2 1052.5,134.0 1054.0,133.8 1055.5,134.2 1057.0,133.6 1058.5,134.4 1060.0,134.0 1061.5,134.5 1063.0,134.6 1064.5,134.4 1066.0,134.6 1067.5,133.7 1069.0,132.9 1070.5,134.0 1072.0,134.0 1073.5,132.4 1075.0,132.3 1076.5,134.7 1078.0,134.8 1079.5,133.9 1081.0,134.4 1082.5,134.0 1084.0,132.3 1085.5,134.8 1087.0,134.1 1088.5,134.1 1090.0,133.9 1091.5,134.2 1093.0,135.0 1094.5,134.0 1096.0,134.3 1097.5,134.0 1099.0,135.0 1100.5,134.7 1102.0,134.8 1103.5,134.1 1105.0,135.0 1106.5,134.5 1108.0,134.5 1109.5,135.0 1111.0,135.1 1112.5,134.7 1114.0,133.2 1115.5,132.6 1117.0,132.6 1118.5,134.8 1120.0,134.3 1121.5,134.6 1123.0,135.2 1124.5,135.1 1126.0,135.1 1127.5,135.0 1129.0,134.9 1130.5,135.1 1132.0,134.5 1133.5,134.8 1135.0,134.8 1136.5,133.4 1138.0,134.9 1139.5,134.5 1141.0,135.1 1142.5,135.1 1144.0,134.5 1145.5,134.9 1147.0,135.1 1148.5,134.6 1150.0,134.7 1151.5,135.2 1153.0,134.9 1154.5,135.5 1156.0,135.4 1157.5,135.1 1159.0,135.4 1160.5,135.4 1162.0,135.0 1163.5,133.9 1165.0,135.0 1166.5,135.2 1168.0,134.9 1169.5,135.5 1171.0,134.7 1172.5,134.9 1174.0,135.6 1175.5,135.0 1177.0,134.9 1178.5,135.5 1180.0,135.1 1181.5,135.0 1183.0,135.2 1184.5,135.6 1186.0,135.6 1187.5,134.3 1189.0,135.6 1190.5,135.4 1192.0,135.2 1193.5,135.5 1195.0,135.1 1196.5,135.2 1198.0,135.1 1199.5,135.8 1201.0,135.3 1202.5,135.5 1204.0,135.9 1205.5,134.8 1207.0,136.3 1208.5,136.6 1210.0,136.1 1211.5,136.2 1213.0,136.6 1214.5,136.2 1216.0,136.3 1217.5,135.4 1219.0,136.6 1220.5,136.7 1222.0,136.9 1223.5,136.5 1225.0,136.7 1226.5,136.2 1228.0,136.8 1229.5,136.6 1231.0,136.8 1232.5,136.7 1234.0,136.4 1235.5,136.5 1237.0,136.4 1238.5,136.4 1240.0,136.8 1241.5,136.3 1243.0,136.5 1244.5,135.9 1246.0,136.7 1247.5,136.6 1249.0,136.3 1250.5,136.7 1252.0,136.5 1253.5,136.6 1255.0,136.6 1256.5,136.5 1258.0,136.5 1259.5,136.6 1261.0,136.7 1262.5,136.4 1264.0,136.0 1265.5,136.7 1267.0,136.9 1268.5,136.9 1270.0,136.4 1271.5,136.5 1273.0,136.0 1274.5,135.8 1276.0,136.8 1277.5,136.9 1279.0,136.9 1280.5,136.9 1282.0,137.0 1283.5,136.6 1285.0,136.8 1286.5,136.7 1288.0,137.0 1289.5,136.6 1291.0,136.0 1292.5,137.1 1294.0,137.1 1295.5,136.9 1297.0,136.5 1298.5,136.7 1300.0,135.9 1301.5,136.9 1303.0,137.1 1304.5,137.1 1306.0,136.9 1307.5,137.0 1309.0,137.0 1310.5,137.2 1312.0,137.0 1313.5,136.9 1315.0,136.7 1316.5,136.9 1318.0,137.0 1319.5,136.8 1321.0,137.0 1322.5,136.7 1324.0,136.8 1325.5,136.1 1327.0,136.7 1328.5,137.1 1330.0,136.8 1331.5,136.8 1333.0,137.1 1334.5,137.0 1336.0,137.1 1337.5,136.9 1339.0,137.2 1340.5,136.8 1342.0,137.0 1343.5,136.3 1345.0,136.8 1346.5,137.0 1348.0,137.0 1349.5,136.9 1351.0,137.1 1352.5,136.3 1354.0,136.9 1355.5,136.8 1357.0,137.2 1358.5,137.1 1360.0,136.9 1361.5,136.8 1363.0,136.8 1364.5,137.1 1366.0,136.9 1367.5,135.9 1369.0,137.1 1370.5,137.1 1372.0,137.1 1373.5,137.1 1375.0,136.1 1376.5,136.5 1378.0,136.1 1379.5,136.1 1381.0,137.1 1382.5,136.9 1384.0,137.4 1385.5,137.2 1387.0,136.2 1388.5,136.9 1390.0,137.3 1391.5,137.1 1393.0,137.0 1394.5,137.4 1396.0,137.1 1397.5,137.3 1399.0,137.2 1400.5,137.4 1402.0,137.0 1403.5,136.9 1405.0,137.1 1406.5,137.0 1408.0,137.4 1409.5,137.2 1411.0,136.2 1412.5,137.4 1414.0,137.1 1415.5,137.0 1417.0,137.0 1418.5,137.3 1420.0,137.4 1421.5,137.1 1423.0,137.0 1424.5,137.3 1426.0,137.0 1427.5,136.4 1429.0,137.4 1430.5,137.0 1432.0,137.3 1433.5,137.3 1435.0,137.4 1436.5,137.2 1438.0,136.4 1439.5,137.5 1441.0,137.4 1442.5,137.5 1444.0,137.1 1445.5,137.1 1447.0,137.5 1448.5,137.3 1450.0,137.5 1451.5,136.5 1453.0,137.3 1454.5,137.5 1456.0,137.6 1457.5,137.1 1459.0,137.3 1460.5,137.5 1462.0,137.3 1463.5,137.2 1465.0,137.1 1466.5,137.5 1468.0,137.4 1469.5,137.4 1471.0,137.4 1472.5,137.2 1474.0,136.4 1475.5,137.5 1477.0,137.3 1478.5,137.2 1480.0,137.3 1481.5,137.2 1483.0,137.2 1484.5,137.5 1486.0,137.4 1487.5,137.3 1489.0,137.3 1490.5,137.5 1492.0,137.5 1493.5,136.9 1495.0,137.3 1496.5,137.5 1498.0,136.6 1499.5,137.3 1501.0,136.9 1502.5,137.6 1504.0,137.6 1505.5,137.5 1507.0,137.2 1508.5,137.5 1510.0,137.5 1511.5,137.7 1513.0,137.6 1514.5,137.7 1516.0,137.6 1517.5,137.5 1519.0,136.9 1520.5,137.5 1522.0,137.4 1523.5,137.6 1525.0,137.7 1526.5,137.6 1528.0,137.5 1529.5,137.4 1531.0,137.7 1532.5,137.7 1534.0,137.5 1535.5,137.4 1537.0,137.7 1538.5,137.4 1540.0,137.4 1541.5,137.8 1543.0,137.4 1544.5,137.7 1546.0,137.8 1547.5,137.6 1549.0,137.7 1550.5,137.6 1552.0,137.5 1553.5,137.1 1555.0,137.6 1556.5,137.9 1558.0,137.7 1559.5,137.5 1561.0,137.6 1562.5,137.7 1564.0,137.2 1565.5,137.8 1567.0,137.8 1568.5,137.6 1570.0,137.7 1571.5,137.7 1573.0,138.0 1574.5,137.9 1576.0,137.9 1577.5,137.7 1579.0,137.7 1580.5,138.0 1582.0,138.0 1583.5,137.4 1585.0,137.8 1586.5,138.0 1588.0,137.1 1589.5,138.1 1591.0,137.8 1592.5,137.9 1594.0,137.7 1595.5,137.7 1597.0,137.9 1598.5,138.0 1600.0,138.0 1601.5,138.0 1603.0,137.9 1604.5,137.8 1606.0,137.5 1607.5,137.9 1609.0,138.1 1610.5,138.1 1612.0,137.2 1613.5,138.1 1615.0,137.8 1616.5,138.1 1618.0,137.5 1619.5,137.9 1621.0,137.9 1622.5,138.2 1624.0,138.1 1625.5,138.0 1627.0,138.2 1628.5,138.1 1630.0,137.3 1631.5,138.2 1633.0,138.0 1634.5,138.0 1636.0,138.0 1637.5,138.0 1639.0,138.1 1640.5,138.2 1642.0,137.5 1643.5,137.4 1645.0,138.2 1646.5,138.0 1648.0,138.3 1649.5,138.0 1651.0,137.7 1652.5,137.5 1654.0,138.1 1655.5,137.6 1657.0,138.2 1658.5,138.1 1660.0,138.2 1661.5,138.2 1663.0,138.3 1664.5,138.1 1666.0,138.1 1667.5,137.6 1669.0,138.2 1670.5,138.3 1672.0,138.2 1673.5,138.2 1675.0,138.3 1676.5,138.3 1676.5,141.8 1675.0,141.9 1673.5,141.6 1672.0,141.9 1670.5,141.8 1669.0,141.8 1667.5,142.1 1666.0,141.7 1664.5,141.6 1663.0,141.6 1661.5,141.7 1660.0,141.7 1658.5,141.6 1657.0,142.3 1655.5,142.5 1654.0,142.0 1652.5,142.0 1651.0,141.9 1649.5,141.9 1648.0,142.2 1646.5,141.9 1645.0,142.0 1643.5,142.6 1642.0,142.5 1640.5,141.9 1639.0,141.7 1637.5,141.9 1636.0,142.0 1634.5,141.8 1633.0,142.6 1631.5,141.8 1630.0,141.9 1628.5,142.0 1627.0,141.9 1625.5,141.8 1624.0,141.8 1622.5,141.8 1621.0,141.9 1619.5,142.2 1618.0,141.9 1616.5,141.9 1615.0,142.1 1613.5,142.1 1612.0,142.6 1610.5,141.9 1609.0,142.1 1607.5,142.1 1606.0,141.9 1604.5,142.2 1603.0,142.2 1601.5,142.2 1600.0,142.2 1598.5,142.0 1597.0,142.2 1595.5,141.9 1594.0,142.2 1592.5,142.2 1591.0,142.2 1589.5,142.8 1588.0,142.2 1586.5,142.3 1585.0,142.1 1583.5,142.3 1582.0,142.1 1580.5,142.2 1579.0,142.0 1577.5,142.4 1576.0,142.7 1574.5,142.0 1573.0,142.3 1571.5,142.4 1570.0,142.2 1568.5,142.4 1567.0,142.3 1565.5,142.4 1564.0,142.2 1562.5,142.3 1561.0,142.2 1559.5,142.4 1558.0,142.4 1556.5,142.2 1555.0,142.4 1553.5,142.2 1552.0,142.3 1550.5,142.9 1549.0,142.5 1547.5,142.4 1546.0,142.2 1544.5,142.5 1543.0,142.2 1541.5,142.2 1540.0,142.2 1538.5,142.6 1537.0,142.2 1535.5,142.2 1534.0,142.3 1532.5,142.2 1531.0,142.6 1529.5,142.5 1528.0,142.3 1526.5,142.5 1525.0,143.2 1523.5,142.3 1522.0,143.3 1520.5,142.5 1519.0,142.7 1517.5,142.6 1516.0,142.6 1514.5,142.5 1513.0,142.7 1511.5,142.5 1510.0,142.7 1508.5,142.3 1507.0,142.4 1505.5,142.5 1504.0,142.7 1502.5,142.4 1501.0,142.6 1499.5,142.5 1498.0,142.4 1496.5,142.4 1495.0,142.5 1493.5,143.3 1492.0,142.6 1490.5,142.4 1489.0,142.7 1487.5,142.7 1486.0,142.5 1484.5,142.8 1483.0,142.4 1481.5,142.5 1480.0,142.6 1478.5,142.7 1477.0,142.4 1475.5,142.4 1474.0,142.8 1472.5,142.7 1471.0,142.6 1469.5,142.9 1468.0,142.5 1466.5,142.8 1465.0,143.4 1463.5,143.4 1462.0,142.8 1460.5,143.5 1459.0,143.6 1457.5,142.5 1456.0,142.6 1454.5,142.8 1453.0,142.8 1451.5,142.9 1450.0,142.5 1448.5,142.6 1447.0,142.7 1445.5,142.5 1444.0,143.5 1442.5,143.0 1441.0,142.7 1439.5,142.8 1438.0,142.7 1436.5,142.5 1435.0,143.7 1433.5,142.7 1432.0,143.8 1430.5,142.5 1429.0,143.0 1427.5,142.8 1426.0,142.5 1424.5,142.7 1423.0,143.1 1421.5,142.6 1420.0,142.8 1418.5,142.9 1417.0,143.9 1415.5,142.7 1414.0,142.7 1412.5,143.0 1411.0,142.6 1409.5,142.9 1408.0,142.6 1406.5,142.6 1405.0,142.9 1403.5,142.9 1402.0,142.6 1400.5,143.7 1399.0,143.1 1397.5,143.0 1396.0,142.8 1394.5,142.8 1393.0,142.7 1391.5,142.9 1390.0,142.6 1388.5,143.1 1387.0,142.8 1385.5,142.8 1384.0,143.2 1382.5,142.7 1381.0,143.0 1379.5,142.9 1378.0,143.0 1376.5,144.0 1375.0,143.1 1373.5,142.7 1372.0,143.1 1370.5,143.2 1369.0,142.9 1367.5,143.1 1366.0,142.9 1364.5,143.9 1363.0,142.8 1361.5,142.9 1360.0,142.9 1358.5,142.7 1357.0,142.9 1355.5,142.7 1354.0,142.9 1352.5,143.0 1351.0,143.8 1349.5,142.9 1348.0,143.2 1346.5,143.3 1345.0,143.9 1343.5,142.9 1342.0,143.2 1340.5,144.2 1339.0,143.2 1337.5,143.1 1336.0,142.8 1334.5,143.2 1333.0,143.1 1331.5,143.0 1330.0,143.0 1328.5,143.1 1327.0,143.1 1325.5,143.4 1324.0,143.0 1322.5,144.2 1321.0,143.8 1319.5,143.4 1318.0,143.8 1316.5,143.4 1315.0,143.2 1313.5,143.2 1312.0,142.8 1310.5,143.1 1309.0,143.9 1307.5,143.4 1306.0,143.1 1304.5,144.2 1303.0,143.1 1301.5,143.4 1300.0,142.9 1298.5,142.9 1297.0,142.9 1295.5,143.5 1294.0,143.9 1292.5,143.5 1291.0,142.9 1289.5,143.0 1288.0,143.5 1286.5,143.2 1285.0,143.5 1283.5,143.4 1282.0,143.5 1280.5,143.6 1279.0,143.1 1277.5,143.1 1276.0,143.5 1274.5,143.5 1273.0,143.4 1271.5,143.3 1270.0,143.3 1268.5,143.0 1267.0,143.1 1265.5,143.1 1264.0,143.1 1262.5,144.1 1261.0,143.4 1259.5,144.6 1258.0,143.7 1256.5,143.5 1255.0,143.2 1253.5,143.4 1252.0,143.1 1250.5,143.1 1249.0,143.1 1247.5,143.1 1246.0,143.4 1244.5,143.3 1243.0,143.3 1241.5,143.2 1240.0,143.4 1238.5,143.7 1237.0,144.8 1235.5,143.7 1234.0,143.2 1232.5,143.1 1231.0,143.4 1229.5,143.6 1228.0,143.2 1226.5,143.4 1225.0,143.3 1223.5,144.4 1222.0,143.7 1220.5,143.3 1219.0,143.8 1217.5,143.4 1216.0,143.5 1214.5,143.6 1213.0,143.4 1211.5,143.7 1210.0,143.2 1208.5,143.6 1207.0,143.4 1205.5,144.4 1204.0,146.0 1202.5,144.6 1201.0,144.2 1199.5,144.4 1198.0,144.5 1196.5,144.5 1195.0,144.2 1193.5,144.3 1192.0,146.3 1190.5,144.3 1189.0,144.7 1187.5,144.3 1186.0,144.7 1184.5,145.1 1183.0,144.4 1181.5,146.6 1180.0,145.1 1178.5,145.0 1177.0,144.9 1175.5,144.7 1174.0,144.9 1172.5,144.4 1171.0,144.9 1169.5,145.2 1168.0,144.5 1166.5,145.2 1165.0,145.9 1163.5,145.0 1162.0,144.7 1160.5,146.7 1159.0,144.6 1157.5,145.0 1156.0,145.1 1154.5,144.7 1153.0,144.8 1151.5,145.1 1150.0,144.6 1148.5,145.5 1147.0,145.0 1145.5,146.4 1144.0,144.7 1142.5,145.0 1141.0,145.3 1139.5,145.5 1138.0,146.3 1136.5,147.1 1135.0,144.7 1133.5,145.2 1132.0,145.4 1130.5,144.7 1129.0,145.3 1127.5,144.9 1126.0,145.5 1124.5,145.4 1123.0,145.5 1121.5,145.0 1120.0,145.4 1118.5,146.5 1117.0,145.4 1115.5,145.6 1114.0,146.6 1112.5,144.9 1111.0,145.1 1109.5,145.2 1108.0,145.3 1106.5,145.7 1105.0,145.5 1103.5,145.3 1102.0,145.2 1100.5,145.1 1099.0,145.3 1097.5,145.6 1096.0,145.8 1094.5,146.7 1093.0,145.8 1091.5,145.9 1090.0,145.5 1088.5,147.6 1087.0,145.1 1085.5,145.9 1084.0,145.8 1082.5,147.6 1081.0,147.6 1079.5,145.8 1078.0,145.5 1076.5,145.4 1075.0,147.7 1073.5,145.4 1072.0,145.5 1070.5,145.6 1069.0,145.5 1067.5,146.1 1066.0,146.1 1064.5,145.3 1063.0,145.9 1061.5,146.3 1060.0,147.4 1058.5,146.2 1057.0,145.5 1055.5,145.6 1054.0,145.7 1052.5,145.7 1051.0,146.5 1049.5,145.6 1048.0,145.6 1046.5,146.3 1045.0,145.5 1043.5,145.8 1042.0,145.6 1040.5,145.6 1039.0,145.7 1037.5,146.5 1036.0,145.8 1034.5,146.7 1033.0,146.0 1031.5,146.6 1030.0,148.2 1028.5,146.7 1027.0,146.1 1025.5,146.0 1024.0,146.1 1022.5,148.6 1021.0,145.9 1019.5,147.8 1018.0,147.0 1016.5,146.4 1015.0,146.5 1013.5,146.6 1012.0,145.8 1010.5,146.6 1009.0,146.5 1007.5,146.4 1006.0,146.7 1004.5,148.8 1003.0,146.9 1001.5,146.7 1000.0,147.0 998.5,146.4 997.0,147.2 995.5,146.5 994.0,147.3 992.5,146.7 991.0,149.2 989.5,147.2 988.0,146.2 986.5,146.5 985.0,147.3 983.5,146.9 982.0,146.8 980.5,147.4 979.0,147.5 977.5,146.2 976.0,147.2 974.5,147.3 973.0,147.5 971.5,146.8 970.0,146.7 968.5,146.9 967.0,146.5 965.5,147.8 964.0,146.8 962.5,147.3 961.0,146.8 959.5,147.3 958.0,147.5 956.5,147.3 955.0,147.2 953.5,146.8 952.0,147.4 950.5,147.6 949.0,147.3 947.5,148.0 946.0,147.1 944.5,150.2 943.0,147.9 941.5,147.5 940.0,149.6 938.5,148.2 937.0,148.1 935.5,148.3 934.0,147.4 932.5,147.7 931.0,148.3 929.5,147.8 928.0,147.2 926.5,147.8 925.0,148.1 923.5,150.1 922.0,147.4 920.5,150.7 919.0,149.8 917.5,150.3 916.0,148.5 914.5,148.3 913.0,148.3 911.5,148.0 910.0,147.5 908.5,147.7 907.0,147.3 905.5,147.8 904.0,150.4 902.5,150.7 901.0,147.7 899.5,147.5 898.0,148.6 896.5,147.8 895.0,148.3 893.5,150.4 892.0,150.3 890.5,150.3 889.0,149.1 887.5,147.9 886.0,148.9 884.5,148.9 883.0,148.0 881.5,148.2 880.0,148.4 878.5,150.2 877.0,148.1 875.5,149.0 874.0,149.0 872.5,149.1 871.0,147.5 869.5,147.8 868.0,148.1 866.5,148.0 865.0,147.8 863.5,148.7 862.0,151.6 860.5,147.6 859.0,147.9 857.5,149.2 856.0,149.2 854.5,147.7 853.0,149.1 851.5,150.4 850.0,151.8 848.5,148.4 847.0,148.5 845.5,147.7 844.0,147.9 842.5,148.3 841.0,151.1 839.5,148.9 838.0,148.7 836.5,149.2 835.0,149.1 833.5,149.0 832.0,148.9 830.5,149.0 829.0,147.9 827.5,149.1 826.0,149.2 824.5,149.3 823.0,148.2 821.5,149.3 820.0,149.3 818.5,149.2 817.0,149.2 815.5,148.3 814.0,149.2 812.5,148.9 811.0,149.0 809.5,147.9 808.0,149.1 806.5,151.6 805.0,152.1 803.5,149.1 802.0,152.0 800.5,148.2 799.0,147.9 797.5,149.6 796.0,147.9 794.5,148.1 793.0,149.6 791.5,148.7 790.0,148.2 788.5,149.6 787.0,148.7 785.5,149.3 784.0,149.6 782.5,150.8 781.0,148.4 779.5,149.1 778.0,149.4 776.5,148.3 775.0,149.0 773.5,149.4 772.0,148.6 770.5,149.8 769.0,148.8 767.5,149.0 766.0,149.4 764.5,149.6 763.0,148.1 761.5,149.8 760.0,149.2 758.5,148.2 757.0,149.6 755.5,149.6 754.0,149.0 752.5,148.2 751.0,148.6 749.5,149.5 748.0,149.7 746.5,149.6 745.0,149.6 743.5,149.6 742.0,148.6 740.5,148.2 739.0,149.6 737.5,149.8 736.0,149.4 734.5,148.7 733.0,148.6 731.5,148.7 730.0,148.5 728.5,149.7 727.0,150.0 725.5,149.4 724.0,148.7 722.5,149.2 721.0,148.8 719.5,149.1 718.0,148.4 716.5,149.7 715.0,150.1 713.5,149.5 712.0,149.4 710.5,149.8 709.0,150.1 707.5,149.6 706.0,149.1 704.5,148.8 703.0,149.2 701.5,149.2 700.0,149.7 698.5,148.8 697.0,149.2 695.5,149.5 694.0,149.4 692.5,148.5 691.0,149.6 689.5,149.9 688.0,150.3 686.5,148.8 685.0,149.1 683.5,150.1 682.0,148.9 680.5,149.6 679.0,149.9 677.5,149.1 676.0,149.9 674.5,150.2 673.0,149.0 671.5,151.5 670.0,149.2 668.5,150.0 667.0,149.5 665.5,150.4 664.0,149.5 662.5,149.5 661.0,149.0 659.5,148.8 658.0,150.0 656.5,149.4 655.0,149.6 653.5,150.0 652.0,149.5 650.5,148.8 649.0,150.2 647.5,148.7 646.0,150.5 644.5,150.4 643.0,149.8 641.5,149.9 640.0,151.8 638.5,148.8 637.0,149.9 635.5,150.1 634.0,150.4 632.5,150.1 631.0,149.4 629.5,150.6 628.0,148.8 626.5,150.0 625.0,149.6 623.5,150.4 622.0,148.9 620.5,152.6 619.0,150.5 617.5,150.6 616.0,149.2 614.5,150.0 613.0,149.9 611.5,149.3 610.0,150.6 608.5,149.7 607.0,150.1 605.5,150.4 604.0,149.2 602.5,149.8 601.0,150.1 599.5,149.6 598.0,152.3 596.5,149.8 595.0,148.9 593.5,150.9 592.0,149.1 590.5,150.5 589.0,149.5 587.5,150.9 586.0,150.1 584.5,150.0 583.0,150.8 581.5,149.4 580.0,149.5 578.5,149.3 577.0,149.4 575.5,150.9 574.0,151.0 572.5,150.7 571.0,149.3 569.5,149.2 568.0,149.2 566.5,153.0 565.0,149.3 563.5,150.7 562.0,150.4 560.5,150.4 559.0,149.7 557.5,149.4 556.0,153.3 554.5,149.6 553.0,150.0 551.5,150.9 550.0,149.5 548.5,150.0 547.0,154.2 545.5,151.1 544.0,151.1 542.5,150.2 541.0,151.1 539.5,149.6 538.0,150.9 536.5,149.7 535.0,151.3 533.5,150.4 532.0,149.8 530.5,149.5 529.0,149.5 527.5,149.7 526.0,150.0 524.5,150.5 523.0,150.1 521.5,149.5 520.0,150.2 518.5,150.5 517.0,149.9 515.5,151.0 514.0,153.8 512.5,151.4 511.0,151.2 509.5,149.8 508.0,150.0 506.5,151.1 505.0,150.3 503.5,150.4 502.0,154.6 500.5,150.6 499.0,154.1 497.5,153.3 496.0,151.0 494.5,149.8 493.0,150.0 491.5,150.5 490.0,153.9 488.5,150.0 487.0,150.8 485.5,151.4 484.0,149.6 482.5,154.3 481.0,153.4 479.5,150.5 478.0,151.2 476.5,149.8 475.0,149.5 473.5,150.3 472.0,154.6 470.5,151.6 469.0,150.4 467.5,154.7 466.0,151.6 464.5,150.0 463.0,151.2 461.5,150.2 460.0,151.1 458.5,150.5 457.0,154.7 455.5,151.0 454.0,154.3 452.5,150.6 451.0,150.6 449.5,153.3 448.0,149.8 446.5,150.2 445.0,151.6 443.5,150.8 442.0,151.2 440.5,150.0 439.0,151.5 437.5,149.7 436.0,151.2 434.5,154.7 433.0,150.2 431.5,151.0 430.0,150.3 428.5,150.8 427.0,151.6 425.5,149.9 424.0,153.2 422.5,150.2 421.0,150.1 419.5,150.4 418.0,151.3 416.5,150.0 415.0,154.4 413.5,149.9 412.0,151.7 410.5,151.8 409.0,150.4 407.5,151.6 406.0,154.0 404.5,150.7 403.0,151.4 401.5,151.4 400.0,150.6 398.5,150.9 397.0,155.0 395.5,151.0 394.0,151.0 392.5,151.9 391.0,152.0 389.5,151.9 388.0,150.1 386.5,150.5 385.0,150.5 383.5,153.8 382.0,150.1 380.5,151.4 379.0,152.0 377.5,150.5 376.0,150.1 374.5,151.6 373.0,154.7 371.5,151.8 370.0,150.0 368.5,151.9 367.0,151.8 365.5,151.8 364.0,151.8 362.5,150.3 361.0,151.9 359.5,151.2 358.0,150.1 356.5,150.6 355.0,151.1 353.5,150.8 352.0,151.2 350.5,151.0 349.0,150.6 347.5,151.9 346.0,151.7 344.5,150.8 343.0,151.9 341.5,151.2 340.0,151.0 338.5,154.4 337.0,150.1 335.5,153.8 334.0,150.8 332.5,150.5 331.0,150.4 329.5,150.9 328.0,152.0 326.5,152.2 325.0,150.3 323.5,152.2 322.0,152.2 320.5,151.9 319.0,152.3 317.5,151.3 316.0,151.2 314.5,154.2 313.0,151.2 311.5,151.3 310.0,152.4 308.5,151.8 307.0,151.7 305.5,151.2 304.0,152.3 302.5,152.2 301.0,151.4 299.5,151.4 298.0,152.0 296.5,150.9 295.0,152.0 293.5,151.5 292.0,152.1 290.5,150.3 289.0,152.4 287.5,151.3 286.0,151.2 284.5,151.0 283.0,152.3 281.5,151.8 280.0,155.0 278.5,152.2 277.0,150.7 275.5,152.5 274.0,152.2 272.5,151.4 271.0,151.9 269.5,151.5 268.0,150.8 266.5,151.2 265.0,151.4 263.5,151.0 262.0,155.0 260.5,152.2 259.0,150.9 257.5,152.2 256.0,152.0 254.5,150.5 253.0,152.6 251.5,151.0 250.0,155.0 248.5,150.7 247.0,150.8 245.5,151.3 244.0,150.6 242.5,150.6 241.0,151.4 239.5,152.3 238.0,155.4 236.5,151.8 235.0,151.1 233.5,151.0 232.0,152.6 230.5,152.5 229.0,151.6 227.5,151.1 226.0,150.8 224.5,152.1 223.0,152.9 221.5,152.1 220.0,151.6 218.5,151.3 217.0,152.1 215.5,152.3 214.0,154.7 212.5,151.9 211.0,151.3 209.5,151.6 208.0,150.8 206.5,152.0 205.0,150.9 203.5,150.7 202.0,152.8 200.5,152.6 199.0,155.2 197.5,151.5 196.0,154.5" fill="#ff0000"/><rect x="195.5" y="118.5" width="1482" height="40" fill="none" stroke="#fff" stroke-width="1"/><path d="M1678.5,120 V157" stroke="#ff0000" stroke-width="1"/><rect x="641" y="118" width="2" height="41" fill="#c8b800"/><circle cx="1699" cy="138" r="9.5" fill="none" stroke="#b4b4b4" stroke-width="1.6"/><path d="M1698.5,131.5 V138.5 L1704.5,137.5" fill="none" stroke="#b4b4b4" stroke-width="1.6"/></svg>
<div class="t" style="left:196px;top:148px;font-size:8px;color:#fff;letter-spacing:-0.3px">13/02/2021 - 14:55:10</div>
<div class="t" style="left:1608px;top:147px;font-size:8px;color:#fff;letter-spacing:-0.3px">13/02/2021 - 15:00:15</div>
<svg class="a" style="left:0;top:0" width="1920" height="1080" viewBox="0 0 1920 1080" font-family="Liberation Sans, sans-serif"><defs><linearGradient id="cb" x1="0" y1="1" x2="0" y2="0"><stop offset="0" stop-color="#0000ff"/><stop offset="0.25" stop-color="#00ffff"/><stop offset="0.5" stop-color="#00ff00"/><stop offset="0.75" stop-color="#ffff00"/><stop offset="1" stop-color="#ff0000"/></linearGradient></defs><rect x="200.5" y="174.5" width="17" height="409" fill="url(#cb)" stroke="#808080" stroke-width="1"/><rect x="966.5" y="174.5" width="17" height="409" fill="url(#cb)" stroke="#808080" stroke-width="1"/><text transform="translate(214,485) rotate(-90)" font-size="15.8" fill="#000">OT 1/X/Order waterfall (g rms)</text><text transform="translate(981,479) rotate(-90)" font-size="15.9" fill="#000">OT 1/X/FFT waterfall (g rms)</text><text x="230" y="178.5" font-size="12.5" fill="#ddd">0.1</text><text x="230" y="205.5" font-size="12.5" fill="#ddd">0.1</text><text x="230" y="269.5" font-size="12.5" fill="#ddd">0.1</text><text x="230" y="333.5" font-size="12.5" fill="#ddd">0.1</text><text x="230" y="396.5" font-size="12.5" fill="#ddd">0.1</text><text x="230" y="460.5" font-size="12.5" fill="#ddd">0.0</text><text x="230" y="523.5" font-size="12.5" fill="#ddd">0.0</text><text x="230" y="587.5" font-size="12.5" fill="#ddd">0.0</text><text x="996" y="178.5" font-size="12.5" fill="#ddd">0.1</text><text x="996" y="260.5" font-size="12.5" fill="#ddd">0.1</text><text x="996" y="342.5" font-size="12.5" fill="#ddd">0.1</text><text x="996" y="423.5" font-size="12.5" fill="#ddd">4.0E-2</text><text x="996" y="505.5" font-size="12.5" fill="#ddd">2.0E-2</text><text x="996" y="587.5" font-size="12.5" fill="#ddd">0.0</text><text x="568.0" y="180.8" font-size="16" fill="#d0d0d0" text-anchor="middle">Speed - Order (do = 0,125 order)</text><text x="1335.0" y="180.8" font-size="16" fill="#d0d0d0" text-anchor="middle">Speed - Frequency (df = 0,305 Hz)</text><line x1="338.5" y1="360.5" x2="338.5" y2="259.0" stroke="#6c6c6c" stroke-width="1"/><line x1="338.5" y1="259.0" x2="615.4" y2="190.5" stroke="#6c6c6c" stroke-width="1"/><line x1="615.4" y1="292.0" x2="615.4" y2="190.5" stroke="#6c6c6c" stroke-width="1"/><line x1="393.9" y1="346.8" x2="393.9" y2="245.3" stroke="#6c6c6c" stroke-width="1"/><line x1="449.3" y1="333.1" x2="449.3" y2="231.6" stroke="#6c6c6c" stroke-width="1"/><line x1="504.6" y1="319.4" x2="504.6" y2="217.9" stroke="#6c6c6c" stroke-width="1"/><line x1="560.0" y1="305.7" x2="560.0" y2="204.2" stroke="#6c6c6c" stroke-width="1"/><line x1="338.5" y1="344.6" x2="615.4" y2="276.1" stroke="#6c6c6c" stroke-width="1"/><line x1="338.5" y1="328.7" x2="615.4" y2="260.2" stroke="#6c6c6c" stroke-width="1"/><line x1="338.5" y1="312.9" x2="615.4" y2="244.4" stroke="#6c6c6c" stroke-width="1"/><line x1="338.5" y1="297.0" x2="615.4" y2="228.5" stroke="#6c6c6c" stroke-width="1"/><line x1="338.5" y1="281.1" x2="615.4" y2="212.6" stroke="#6c6c6c" stroke-width="1"/><line x1="338.5" y1="265.2" x2="615.4" y2="196.7" stroke="#6c6c6c" stroke-width="1"/><line x1="798.4" y1="396.3" x2="798.4" y2="294.8" stroke="#6c6c6c" stroke-width="1"/><line x1="615.4" y1="190.5" x2="798.4" y2="294.8" stroke="#6c6c6c" stroke-width="1"/><line x1="681.3" y1="329.5" x2="681.3" y2="228.0" stroke="#6c6c6c" stroke-width="1"/><line x1="746.2" y1="366.6" x2="746.2" y2="265.1" stroke="#6c6c6c" stroke-width="1"/><line x1="615.4" y1="276.1" x2="798.4" y2="380.4" stroke="#6c6c6c" stroke-width="1"/><line x1="615.4" y1="260.2" x2="798.4" y2="364.5" stroke="#6c6c6c" stroke-width="1"/><line x1="615.4" y1="244.4" x2="798.4" y2="348.7" stroke="#6c6c6c" stroke-width="1"/><line x1="615.4" y1="228.5" x2="798.4" y2="332.8" stroke="#6c6c6c" stroke-width="1"/><line x1="615.4" y1="212.6" x2="798.4" y2="316.9" stroke="#6c6c6c" stroke-width="1"/><line x1="615.4" y1="196.7" x2="798.4" y2="301.0" stroke="#6c6c6c" stroke-width="1"/><line x1="338.5" y1="360.5" x2="615.4" y2="292.0" stroke="#6c6c6c" stroke-width="1"/><line x1="615.4" y1="292.0" x2="798.4" y2="396.3" stroke="#6c6c6c" stroke-width="1"/><line x1="798.4" y1="396.3" x2="522.0" y2="466.0" stroke="#6c6c6c" stroke-width="1"/><line x1="522.0" y1="466.0" x2="338.5" y2="360.5" stroke="#6c6c6c" stroke-width="1"/><line x1="577.3" y1="452.1" x2="393.9" y2="346.8" stroke="#6c6c6c" stroke-width="1"/><line x1="632.6" y1="438.1" x2="449.3" y2="333.1" stroke="#6c6c6c" stroke-width="1"/><line x1="687.8" y1="424.2" x2="504.6" y2="319.4" stroke="#6c6c6c" stroke-width="1"/><line x1="743.1" y1="410.2" x2="560.0" y2="305.7" stroke="#6c6c6c" stroke-width="1"/><line x1="404.0" y1="398.2" x2="680.7" y2="329.2" stroke="#6c6c6c" stroke-width="1"/><line x1="469.5" y1="435.8" x2="746.1" y2="366.5" stroke="#6c6c6c" stroke-width="1"/><polyline points="342.0,359.5 344.0,360.4 346.0,361.7 348.1,362.7 350.1,363.9 352.2,365.5 354.2,366.7 356.2,367.3 358.3,368.8 360.3,370.0 362.3,370.7 364.4,372.2 366.4,373.1 368.5,374.5 370.5,375.6 372.5,377.1 374.6,378.0 376.6,379.0 378.7,380.4 380.7,381.4 382.7,382.6 384.8,384.2 386.8,384.9 388.9,386.2 390.9,387.6 392.9,388.9 395.0,389.5 397.0,391.0 399.0,392.0 401.1,393.0 403.1,394.3 405.2,395.3 407.2,396.9 409.2,397.8 411.3,399.2 413.3,400.0 415.4,401.2 417.4,402.9 419.4,404.1 421.5,405.2 423.5,405.9 425.6,407.4 427.6,408.4 429.6,409.8 431.7,410.9 433.7,412.1 435.7,413.3 437.8,414.3 439.8,415.5 441.9,416.4 443.9,417.8 445.9,418.8 448.0,420.0 450.0,421.1 452.1,422.5 454.1,424.0 456.1,424.7 458.2,425.8 460.2,427.0 462.3,428.4 464.3,429.5 466.3,431.0 468.4,431.7 470.4,433.1 472.4,434.5 474.5,435.8 476.5,436.4 478.6,437.5 480.6,439.3 482.6,440.0 484.7,441.4 486.7,442.8 488.8,443.8 490.8,444.7 492.8,445.8 494.9,447.5 496.9,448.3 499.0,449.9 501.0,450.6 503.0,452.0 505.1,452.8 507.1,453.9 509.1,455.4 511.2,456.2 513.2,457.9 515.3,459.2 517.3,460.0 519.3,461.6 521.4,462.6 523.4,463.7 525.5,464.7" fill="none" stroke="#1438ff" stroke-width="1.05"/><polyline points="348.9,357.8 350.9,359.1 353.0,359.7 355.0,361.2 357.0,361.9 359.1,363.2 361.1,364.7 363.2,365.8 365.2,366.9 367.2,368.0 369.3,369.2 371.3,370.4 373.3,371.6 375.4,372.5 377.4,374.0 379.5,375.2 381.5,376.2 383.5,377.7 385.6,378.8 387.6,379.5 389.7,381.0 391.7,382.2 393.7,383.7 395.8,384.6 397.8,385.6 399.9,387.2 401.9,388.0 403.9,389.1 406.0,390.7 408.0,391.5 410.0,392.8 412.1,393.8 414.1,395.2 416.2,396.1 418.2,397.3 420.2,398.9 422.3,400.1 424.3,400.8 426.4,401.8 428.4,403.5 430.4,404.5 432.5,405.6 434.5,406.9 436.5,408.1 438.6,409.3 440.6,410.4 442.7,411.4 444.7,412.8 446.7,413.9 448.8,414.8 450.8,416.5 452.9,417.3 454.9,418.3 456.9,419.8 459.0,421.0 461.0,421.8 463.0,423.4 465.1,424.6 467.1,425.6 469.2,426.6 471.2,428.2 473.2,429.2 475.3,430.3 477.3,431.2 479.4,432.6 481.4,433.5 483.4,435.1 485.5,436.2 487.5,437.2 489.6,438.2 491.6,439.6 493.6,441.0 495.7,442.2 497.7,443.1 499.7,444.5 501.8,445.2 503.8,446.4 505.9,448.0 507.9,449.1 509.9,449.9 512.0,451.2 514.0,452.3 516.1,453.8 518.1,455.1 520.1,456.2 522.2,457.0 524.2,458.5 526.2,459.6 528.3,460.8 530.3,461.9 532.4,463.1" fill="none" stroke="#1438ff" stroke-width="1.05"/><polyline points="355.8,355.6 357.8,357.3 359.9,358.6 361.9,359.1 364.0,360.3 366.0,361.4 368.0,362.9 370.1,363.8 372.1,364.9 374.2,366.6 376.2,367.4 378.2,368.5 380.3,369.8 382.3,371.1 384.3,372.4 386.4,373.6 388.4,374.8 390.5,376.1 392.5,376.9 394.5,378.3 396.6,379.1 398.6,380.8 400.7,381.4 402.7,382.7 404.7,383.7 406.8,384.9 408.8,386.0 410.8,387.4 412.9,389.0 414.9,389.7 417.0,391.2 419.0,392.3 421.0,393.2 423.1,394.5 425.1,395.8 427.2,396.6 429.2,398.0 431.2,399.3 433.3,400.6 435.3,401.3 437.3,402.7 439.4,403.7 441.4,405.2 443.5,406.5 445.5,407.4 447.5,408.4 449.6,410.0 451.6,410.7 453.7,411.8 455.7,413.1 457.7,414.2 459.8,416.0 461.8,416.7 463.8,417.7 465.9,419.4 467.9,420.5 470.0,421.6 472.0,422.6 474.0,423.9 476.1,425.0 478.1,426.0 480.2,427.7 482.2,428.8 484.2,429.9 486.3,431.1 488.3,432.3 490.3,432.8 492.4,434.1 494.4,435.8 496.5,436.7 498.5,438.0 500.5,439.2 502.6,440.3 504.6,441.3 506.7,442.5 508.7,443.8 510.7,445.1 512.8,446.2 514.8,447.5 516.9,448.4 518.9,449.4 520.9,450.8 523.0,452.2 525.0,453.3 527.0,454.4 529.1,455.4 531.1,456.4 533.2,457.9 535.2,458.7 537.2,460.0 539.3,461.3" fill="none" stroke="#1438ff" stroke-width="1.05"/><polyline points="362.7,354.2 364.8,355.3 366.8,356.4 368.8,357.7 370.9,358.7 372.9,360.0 375.0,361.4 377.0,362.3 379.0,363.4 381.1,365.0 383.1,365.9 385.2,367.1 387.2,367.9 389.2,369.1 391.3,370.6 393.3,371.4 395.3,372.7 397.4,374.2 399.4,375.3 401.5,376.7 403.5,377.4 405.5,378.6 407.6,379.6 409.6,380.9 411.7,382.1 413.7,383.3 415.7,384.6 417.8,386.1 419.8,386.9 421.8,388.5 423.9,389.5 425.9,390.3 428.0,391.9 430.0,393.1 432.0,394.3 434.1,394.9 436.1,396.5 438.1,397.8 440.2,398.4 442.2,400.1 444.3,400.8 446.3,402.0 448.3,403.1 450.4,404.2 452.4,405.6 454.5,406.6 456.5,408.3 458.5,409.0 460.6,410.4 462.6,411.4 464.6,413.0 466.7,413.7 468.7,414.7 470.8,416.5 472.8,417.5 474.8,418.5 476.9,419.5 478.9,421.1 481.0,422.3 483.0,423.4 485.0,424.3 487.1,425.4 489.1,426.8 491.1,428.0 493.2,429.2 495.2,430.4 497.3,431.5 499.3,432.9 501.3,433.8 503.4,434.6 505.4,436.2 507.5,437.1 509.5,438.7 511.5,439.5 513.6,440.6 515.6,441.9 517.6,443.1 519.7,444.3 521.7,445.4 523.8,446.4 525.8,448.1 527.8,449.3 529.9,450.0 531.9,451.1 534.0,452.5 536.0,453.7 538.0,454.7 540.1,456.3 542.1,457.4 544.1,458.6 546.2,459.5" fill="none" stroke="#1438ff" stroke-width="1.05"/><polyline points="369.7,352.6 371.7,353.8 373.7,354.7 375.8,355.6 377.8,357.3 379.8,358.2 381.9,359.5 383.9,360.4 386.0,361.8 388.0,363.1 390.0,364.3 392.1,365.7 394.1,366.5 396.1,367.7 398.2,369.1 400.2,370.1 402.3,371.3 404.3,372.2 406.3,373.8 408.4,374.3 410.4,375.9 412.5,377.0 414.5,378.2 416.5,379.1 418.6,380.3 420.6,381.7 422.6,382.9 424.7,383.9 426.7,385.0 428.8,386.5 430.8,387.4 432.8,388.4 434.9,389.9 436.9,391.3 439.0,392.4 441.0,393.3 443.0,394.5 445.1,395.4 447.1,396.7 449.1,398.3 451.2,399.5 453.2,400.6 455.3,401.8 457.3,402.6 459.3,403.7 461.4,404.8 463.4,406.5 465.4,407.2 467.5,408.8 469.5,409.9 471.6,410.8 473.6,412.4 475.6,413.6 477.7,414.3 479.7,415.8 481.8,416.9 483.8,417.9 485.8,419.1 487.9,420.7 489.9,421.6 491.9,422.7 494.0,423.9 496.0,425.2 498.1,426.1 500.1,427.1 502.1,428.6 504.2,429.7 506.2,431.1 508.3,432.2 510.3,433.1 512.3,434.7 514.4,435.3 516.4,436.4 518.4,438.2 520.5,438.8 522.5,440.3 524.6,441.2 526.6,442.4 528.6,443.9 530.7,444.8 532.7,446.0 534.8,447.1 536.8,448.6 538.8,449.4 540.9,450.5 542.9,451.8 544.9,453.1 547.0,454.6 549.0,455.5 551.1,456.7 553.1,457.7" fill="none" stroke="#1438ff" stroke-width="1.05"/><polyline points="376.6,350.6 378.6,351.9 380.7,353.3 382.7,354.1 384.7,355.3 386.8,356.8 388.8,357.5 390.8,358.8 392.9,360.4 394.9,361.0 397.0,362.7 399.0,363.7 401.0,364.6 403.1,365.9 405.1,367.1 407.1,368.2 409.2,369.5 411.2,370.8 413.3,372.0 415.3,373.3 417.3,374.0 419.4,375.1 421.4,376.4 423.5,377.5 425.5,378.9 427.5,380.2 429.6,381.2 431.6,382.1 433.6,383.8 435.7,384.7 437.7,386.0 439.8,386.8 441.8,388.3 443.8,389.5 445.9,390.6 447.9,391.7 449.9,392.7 452.0,394.1 454.0,395.0 456.1,396.6 458.1,397.7 460.1,399.0 462.2,400.2 464.2,400.9 466.3,402.1 468.3,403.6 470.3,404.8 472.4,405.8 474.4,406.7 476.4,407.9 478.5,409.1 480.5,410.4 482.6,411.8 484.6,412.8 486.6,414.1 488.7,415.1 490.7,416.2 492.7,417.7 494.8,418.8 496.8,419.6 498.9,421.3 500.9,421.9 502.9,423.0 505.0,424.2 507.0,425.7 509.1,426.8 511.1,427.9 513.1,429.1 515.2,430.0 517.2,431.4 519.2,432.8 521.3,433.6 523.3,435.0 525.4,436.1 527.4,437.2 529.4,438.9 531.5,439.5 533.5,440.7 535.5,442.0 537.6,443.2 539.6,444.4 541.7,445.7 543.7,446.7 545.7,448.2 547.8,449.0 549.8,450.1 551.9,451.4 553.9,452.5 555.9,453.4 558.0,454.6 560.0,456.3" fill="none" stroke="#1438ff" stroke-width="1.05"/><polyline points="383.5,348.8 385.5,350.1 387.6,351.7 389.6,352.6 391.6,353.9 393.7,355.2 395.7,356.0 397.8,356.9 399.8,358.5 401.8,359.3 403.9,360.6 405.9,362.1 408.0,362.8 410.0,364.2 412.0,365.1 414.1,366.4 416.1,367.6 418.1,369.0 420.2,369.9 422.2,370.9 424.3,372.2 426.3,373.6 428.3,374.6 430.4,375.9 432.4,377.4 434.4,378.6 436.5,379.7 438.5,380.8 440.6,382.0 442.6,383.0 444.6,384.0 446.7,385.3 448.7,386.5 450.7,387.5 452.8,388.9 454.8,390.0 456.9,391.0 458.9,392.4 460.9,393.7 463.0,394.4 465.0,395.7 467.1,397.1 469.1,398.3 471.1,399.3 473.2,400.4 475.2,401.9 477.2,403.2 479.3,404.2 481.3,405.0 483.4,406.6 485.4,407.5 487.4,408.9 489.5,410.1 491.5,411.3 493.5,412.3 495.6,413.6 497.6,414.9 499.7,416.0 501.7,417.1 503.7,418.1 505.8,419.5 507.8,420.7 509.9,421.6 511.9,422.8 513.9,423.8 516.0,425.4 518.0,426.3 520.0,427.5 522.1,428.9 524.1,429.4 526.2,431.1 528.2,432.4 530.2,433.3 532.3,434.7 534.3,435.5 536.3,436.9 538.4,438.2 540.4,439.4 542.5,440.1 544.5,441.6 546.5,442.4 548.6,443.8 550.6,444.7 552.6,446.3 554.7,447.5 556.7,448.6 558.8,449.4 560.8,450.7 562.8,452.1 564.9,453.4 566.9,454.2" fill="none" stroke="#1438ff" stroke-width="1.05"/><polyline points="390.4,347.0 392.5,348.4 394.5,350.0 396.5,351.1 398.6,352.3 400.6,353.4 402.6,354.6 404.7,355.8 406.7,356.6 408.8,357.6 410.8,359.2 412.8,359.8 414.9,361.4 416.9,362.3 418.9,363.4 421.0,364.5 423.0,366.3 425.1,367.3 427.1,368.3 429.1,369.2 431.2,371.0 433.2,372.0 435.3,372.8 437.3,374.5 439.3,375.5 441.4,376.7 443.4,377.6 445.4,378.6 447.5,380.3 449.5,381.1 451.6,382.2 453.6,383.3 455.6,384.7 457.7,385.6 459.7,387.2 461.7,388.3 463.8,389.6 465.8,390.4 467.9,391.8 469.9,393.1 471.9,394.3 474.0,395.1 476.0,396.4 478.0,397.5 480.1,398.9 482.1,400.0 484.2,401.4 486.2,402.1 488.2,403.8 490.3,404.6 492.3,405.6 494.3,406.8 496.4,408.4 498.4,409.5 500.5,410.2 502.5,411.5 504.5,412.5 506.6,413.7 508.6,415.2 510.7,416.0 512.7,417.3 514.7,418.8 516.8,419.9 518.8,421.3 520.8,422.2 522.9,423.0 524.9,424.8 527.0,425.6 529.0,427.1 531.0,428.3 533.1,429.1 535.1,430.5 537.1,431.8 539.2,432.9 541.2,433.8 543.3,435.0 545.3,436.5 547.3,437.6 549.4,438.2 551.4,439.9 553.4,440.8 555.5,442.1 557.5,443.0 559.6,444.3 561.6,445.4 563.6,446.7 565.7,448.1 567.7,449.3 569.7,450.5 571.8,451.2 573.8,452.9" fill="none" stroke="#1438ff" stroke-width="1.05"/><polyline points="397.3,345.9 399.4,346.4 401.4,348.1 403.5,348.8 405.5,350.6 407.5,351.5 409.6,352.8 411.6,353.5 413.6,354.9 415.7,356.0 417.7,357.1 419.8,358.2 421.8,359.7 423.8,360.7 425.9,362.0 427.9,363.4 429.9,364.1 432.0,365.4 434.0,366.4 436.1,368.0 438.1,369.0 440.1,370.2 442.2,371.2 444.2,372.8 446.2,373.8 448.3,374.8 450.3,376.3 452.4,377.1 454.4,378.2 456.4,379.6 458.5,380.6 460.5,381.8 462.5,383.2 464.6,384.3 466.6,385.0 468.7,386.6 470.7,387.7 472.7,389.2 474.8,390.2 476.8,391.4 478.8,392.1 480.9,393.4 482.9,394.4 485.0,395.5 487.0,397.0 489.0,397.9 491.1,399.4 493.1,400.6 495.2,401.4 497.2,402.6 499.2,403.7 501.3,405.2 503.3,406.2 505.3,407.6 507.4,408.4 509.4,409.6 511.5,411.2 513.5,411.9 515.5,413.6 517.6,414.9 519.6,415.6 521.6,417.1 523.7,418.1 525.7,419.2 527.8,420.8 529.8,421.4 531.8,422.9 533.9,424.0 535.9,425.2 537.9,426.1 540.0,427.3 542.0,428.8 544.1,430.1 546.1,431.1 548.1,432.2 550.2,433.6 552.2,434.7 554.2,435.5 556.3,436.7 558.3,437.6 560.4,438.8 562.4,440.1 564.4,441.6 566.5,442.9 568.5,444.0 570.5,445.0 572.6,446.1 574.6,447.3 576.7,448.6 578.7,449.4 580.7,451.0" fill="none" stroke="#1438ff" stroke-width="1.05"/><polyline points="404.3,343.9 406.3,344.8 408.3,346.0 410.4,347.5 412.4,348.7 414.5,349.5 416.5,351.2 418.5,352.3 420.6,353.2 422.6,354.4 424.6,355.8 426.7,357.1 428.7,358.1 430.8,358.9 432.8,360.3 434.8,361.1 436.9,362.4 438.9,363.4 440.9,365.2 443.0,366.3 445.0,367.6 447.1,368.5 449.1,369.7 451.1,371.1 453.2,371.9 455.2,373.4 457.2,374.4 459.3,375.6 461.3,376.4 463.4,377.8 465.4,379.1 467.4,380.4 469.5,381.3 471.5,382.4 473.5,383.5 475.6,384.5 477.6,385.8 479.7,387.3 481.7,388.6 483.7,389.3 485.8,390.4 487.8,391.8 489.8,392.7 491.9,394.1 493.9,395.5 496.0,396.7 498.0,398.0 500.0,398.7 502.1,399.7 504.1,400.9 506.1,402.4 508.2,403.4 510.2,404.4 512.3,405.6 514.3,406.9 516.3,408.2 518.4,409.3 520.4,410.7 522.4,411.9 524.5,412.7 526.5,413.7 528.6,415.2 530.6,416.4 532.6,417.6 534.7,418.7 536.7,419.7 538.7,421.1 540.8,421.9 542.8,423.6 544.9,424.7 546.9,425.7 548.9,426.9 551.0,427.8 553.0,429.0 555.0,430.1 557.1,431.5 559.1,433.1 561.2,433.8 563.2,435.0 565.2,436.2 567.3,437.6 569.3,438.4 571.3,439.5 573.4,441.2 575.4,442.0 577.5,443.3 579.5,444.4 581.5,445.3 583.6,446.4 585.6,447.8 587.6,449.3" fill="none" stroke="#1438ff" stroke-width="1.05"/><polyline points="411.2,341.9 413.2,343.6 415.3,344.6 417.3,345.4 419.3,347.0 421.4,348.2 423.4,348.9 425.4,350.0 427.5,351.6 429.5,352.8 431.6,354.0 433.6,355.3 435.6,356.4 437.7,357.0 439.7,358.8 441.7,359.9 443.8,361.1 445.8,362.3 447.9,363.2 449.9,364.2 451.9,365.3 454.0,366.6 456.0,367.7 458.0,369.4 460.1,370.4 462.1,371.1 464.2,372.9 466.2,373.9 468.2,374.9 470.3,376.2 472.3,377.2 474.3,378.7 476.4,379.8 478.4,380.4 480.5,382.2 482.5,382.8 484.5,384.5 486.6,385.1 488.6,386.5 490.6,387.6 492.7,389.2 494.7,390.4 496.8,391.1 498.8,392.7 500.8,393.8 502.9,394.5 504.9,395.7 506.9,397.4 509.0,397.9 511.0,399.4 513.1,400.7 515.1,402.0 517.1,403.0 519.2,403.8 521.2,405.4 523.2,406.7 525.3,407.9 527.3,409.0 529.4,410.1 531.4,410.8 533.4,412.6 535.5,413.7 537.5,414.3 539.5,415.5 541.6,416.6 543.6,418.3 545.7,419.4 547.7,420.2 549.7,421.7 551.8,422.7 553.8,424.1 555.8,425.5 557.9,426.4 559.9,427.3 562.0,428.5 564.0,429.8 566.0,431.0 568.1,432.1 570.1,433.4 572.1,434.5 574.2,435.4 576.2,437.0 578.3,437.9 580.3,438.9 582.3,440.1 584.4,441.7 586.4,442.4 588.4,443.6 590.5,445.2 592.5,446.3 594.6,447.6" fill="none" stroke="#1438ff" stroke-width="1.05"/><polyline points="418.1,340.8 420.1,341.3 422.2,342.9 424.2,343.7 426.3,345.4 428.3,346.6 430.3,347.2 432.4,348.4 434.4,349.5 436.4,350.8 438.5,352.1 440.5,353.1 442.6,354.8 444.6,355.6 446.6,356.9 448.7,358.2 450.7,359.1 452.7,360.4 454.8,361.5 456.8,362.7 458.9,364.0 460.9,365.1 462.9,366.1 465.0,367.0 467.0,368.2 469.0,369.4 471.1,370.6 473.1,372.2 475.2,372.8 477.2,374.5 479.2,375.8 481.3,376.7 483.3,377.7 485.3,379.1 487.4,380.1 489.4,381.5 491.5,382.2 493.5,383.7 495.5,384.9 497.6,386.0 499.6,386.9 501.6,388.0 503.7,389.5 505.7,390.7 507.7,391.8 509.8,393.3 511.8,394.3 513.9,395.1 515.9,396.3 517.9,398.0 520.0,398.6 522.0,400.1 524.0,400.9 526.1,402.5 528.1,403.7 530.2,404.7 532.2,405.6 534.2,407.1 536.3,408.0 538.3,409.2 540.3,410.7 542.4,411.9 544.4,412.9 546.5,414.1 548.5,415.3 550.5,416.3 552.6,417.3 554.6,418.7 556.6,420.2 558.7,421.3 560.7,422.3 562.8,423.3 564.8,424.8 566.8,426.0 568.9,427.0 570.9,428.2 572.9,429.6 575.0,430.4 577.0,431.3 579.1,432.7 581.1,433.8 583.1,434.9 585.2,436.0 587.2,437.1 589.2,438.6 591.3,439.6 593.3,441.2 595.4,441.8 597.4,443.4 599.4,444.5 601.5,445.3" fill="none" stroke="#1438ff" stroke-width="1.05"/><polyline points="425.0,338.6 427.1,338.9 429.1,341.3 431.1,342.3 433.2,343.0 435.2,344.4 437.3,345.4 439.3,346.4 441.3,348.1 443.4,348.6 445.4,350.5 447.4,351.1 449.5,353.1 451.5,353.9 453.6,354.8 455.6,356.0 457.6,357.6 459.7,358.7 461.7,359.7 463.7,360.7 465.8,362.3 467.8,363.3 469.8,364.7 471.9,365.5 473.9,367.1 476.0,367.6 478.0,369.1 480.0,370.2 482.1,371.7 484.1,372.8 486.1,373.8 488.2,374.7 490.2,376.1 492.3,377.4 494.3,378.1 496.3,379.5 498.4,380.8 500.4,382.2 502.4,383.3 504.5,384.0 506.5,385.7 508.6,386.6 510.6,387.7 512.6,389.1 514.7,390.0 516.7,391.0 518.7,392.2 520.8,393.5 522.8,395.0 524.9,396.3 526.9,397.2 528.9,398.4 531.0,399.7 533.0,400.4 535.0,402.0 537.1,402.8 539.1,403.8 541.1,405.6 543.2,406.2 545.2,407.7 547.3,409.0 549.3,410.2 551.3,411.5 553.4,412.3 555.4,413.6 557.4,414.4 559.5,415.6 561.5,417.3 563.6,418.2 565.6,419.4 567.6,420.7 569.7,421.9 571.7,423.0 573.7,423.9 575.8,425.3 577.8,426.6 579.9,427.7 581.9,428.7 583.9,429.8 586.0,431.2 588.0,432.0 590.0,433.6 592.1,434.4 594.1,435.6 596.2,437.1 598.2,437.9 600.2,439.3 602.3,440.3 604.3,441.5 606.3,442.6 608.4,443.9" fill="none" stroke="#1438ff" stroke-width="1.05"/><polyline points="432.0,336.2 434.0,337.3 436.0,339.0 438.1,339.5 440.1,341.0 442.1,342.2 444.2,343.3 446.2,344.9 448.2,346.0 450.3,347.4 452.3,348.4 454.4,349.7 456.4,350.7 458.4,352.2 460.5,353.2 462.5,354.8 464.5,356.0 466.6,356.7 468.6,358.0 470.7,359.4 472.7,360.1 474.7,361.3 476.8,362.7 478.8,363.5 480.8,364.8 482.9,366.1 484.9,367.5 487.0,368.9 489.0,369.6 491.0,370.7 493.1,372.2 495.1,373.2 497.1,374.4 499.2,375.7 501.2,376.6 503.2,377.9 505.3,379.1 507.3,380.5 509.4,381.4 511.4,382.7 513.4,383.6 515.5,385.1 517.5,386.1 519.5,387.5 521.6,388.5 523.6,389.5 525.7,391.0 527.7,392.2 529.7,393.1 531.8,394.5 533.8,395.4 535.8,396.8 537.9,398.0 539.9,398.9 542.0,399.8 544.0,401.0 546.0,402.4 548.1,403.7 550.1,405.1 552.1,406.1 554.2,407.2 556.2,408.0 558.2,409.7 560.3,410.3 562.3,411.8 564.4,413.0 566.4,414.3 568.4,414.9 570.5,416.7 572.5,417.6 574.5,418.8 576.6,420.1 578.6,421.3 580.7,421.9 582.7,423.2 584.7,424.4 586.8,425.5 588.8,427.2 590.8,428.0 592.9,429.1 594.9,430.6 597.0,431.6 599.0,432.5 601.0,434.1 603.1,434.9 605.1,436.5 607.1,437.3 609.2,438.8 611.2,439.8 613.2,441.0 615.3,441.9" fill="none" stroke="#1438ff" stroke-width="1.05"/><polyline points="438.9,334.4 440.9,335.8 442.9,337.1 445.0,338.1 447.0,340.0 449.1,340.8 451.1,341.9 453.1,342.8 455.2,344.0 457.2,345.9 459.2,346.7 461.3,347.8 463.3,349.4 465.4,350.3 467.4,351.5 469.4,353.1 471.5,354.0 473.5,355.0 475.5,356.3 477.6,357.7 479.6,358.9 481.7,359.7 483.7,360.7 485.7,362.4 487.8,363.7 489.8,364.8 491.8,365.5 493.9,366.9 495.9,368.0 497.9,368.8 500.0,370.3 502.0,371.7 504.1,372.5 506.1,374.2 508.1,375.2 510.2,376.0 512.2,377.6 514.2,378.8 516.3,379.7 518.3,381.0 520.4,381.7 522.4,383.5 524.4,384.1 526.5,385.6 528.5,386.5 530.5,387.9 532.6,388.9 534.6,390.3 536.6,391.5 538.7,392.6 540.7,393.5 542.8,395.0 544.8,396.2 546.8,397.2 548.9,398.6 550.9,399.7 552.9,400.6 555.0,401.8 557.0,403.0 559.1,404.3 561.1,405.7 563.1,406.9 565.2,407.8 567.2,409.1 569.2,410.0 571.3,411.4 573.3,412.2 575.3,413.5 577.4,414.6 579.4,415.7 581.5,417.0 583.5,418.3 585.5,419.5 587.6,420.8 589.6,421.5 591.6,422.9 593.7,424.3 595.7,424.9 597.8,426.3 599.8,427.5 601.8,428.8 603.9,430.1 605.9,430.7 607.9,432.4 610.0,433.5 612.0,434.2 614.0,436.0 616.1,436.9 618.1,438.1 620.2,439.4 622.2,440.1" fill="none" stroke="#1438ff" stroke-width="1.05"/><polyline points="445.8,333.6 447.8,334.8 449.9,334.7 451.9,336.8 453.9,337.8 456.0,339.2 458.0,340.6 460.1,341.6 462.1,342.6 464.1,343.7 466.2,345.3 468.2,346.2 470.2,347.5 472.3,349.0 474.3,349.9 476.3,350.8 478.4,352.6 480.4,353.7 482.5,354.5 484.5,355.5 486.5,357.0 488.6,358.0 490.6,359.2 492.6,360.5 494.7,361.6 496.7,362.7 498.8,364.3 500.8,365.3 502.8,366.1 504.9,367.6 506.9,368.6 508.9,370.0 511.0,371.1 513.0,372.0 515.0,373.1 517.1,374.1 519.1,375.6 521.2,377.0 523.2,378.1 525.2,379.4 527.3,380.5 529.3,381.4 531.3,382.5 533.4,384.0 535.4,385.2 537.5,386.4 539.5,387.5 541.5,388.5 543.6,389.8 545.6,390.5 547.6,391.9 549.7,393.2 551.7,394.3 553.7,395.8 555.8,396.5 557.8,397.6 559.9,399.1 561.9,400.0 563.9,401.5 566.0,402.7 568.0,403.8 570.0,405.0 572.1,405.9 574.1,407.0 576.1,408.1 578.2,409.7 580.2,410.4 582.3,411.8 584.3,413.1 586.3,414.1 588.4,415.3 590.4,416.7 592.4,417.7 594.5,418.7 596.5,419.8 598.6,420.8 600.6,422.5 602.6,423.2 604.7,424.4 606.7,425.7 608.7,426.6 610.8,428.4 612.8,429.1 614.8,430.2 616.9,431.9 618.9,432.7 621.0,433.7 623.0,435.3 625.0,436.1 627.1,437.2 629.1,438.7" fill="none" stroke="#1438ff" stroke-width="1.05"/><polyline points="452.7,331.8 454.8,332.2 456.8,333.8 458.8,334.8 460.9,335.9 462.9,337.5 464.9,338.3 467.0,339.7 469.0,341.3 471.1,342.0 473.1,343.2 475.1,344.8 477.2,345.8 479.2,347.1 481.2,348.4 483.3,349.2 485.3,350.3 487.3,351.6 489.4,352.7 491.4,354.4 493.5,355.4 495.5,356.6 497.5,357.8 499.6,358.4 501.6,359.6 503.6,360.8 505.7,362.2 507.7,363.7 509.7,364.6 511.8,366.0 513.8,366.6 515.9,368.2 517.9,369.4 519.9,370.1 522.0,371.8 524.0,372.4 526.0,374.0 528.1,374.9 530.1,376.5 532.1,377.1 534.2,378.6 536.2,379.8 538.3,380.8 540.3,382.0 542.3,383.4 544.4,384.7 546.4,385.5 548.4,387.1 550.5,387.6 552.5,389.2 554.6,390.5 556.6,391.5 558.6,392.8 560.7,393.9 562.7,394.9 564.7,396.1 566.8,397.3 568.8,398.5 570.8,399.6 572.9,400.5 574.9,401.9 577.0,402.9 579.0,404.2 581.0,405.7 583.1,406.8 585.1,407.5 587.1,408.9 589.2,410.1 591.2,411.2 593.2,412.2 595.3,413.7 597.3,414.8 599.4,416.0 601.4,417.4 603.4,418.2 605.5,419.4 607.5,420.6 609.5,421.8 611.6,422.9 613.6,423.9 615.6,425.5 617.7,426.1 619.7,427.8 621.8,428.5 623.8,430.1 625.8,430.9 627.9,432.4 629.9,433.7 631.9,434.5 634.0,435.5 636.0,436.7" fill="none" stroke="#1438ff" stroke-width="1.05"/><polyline points="459.6,328.4 461.7,331.1 463.7,331.8 465.8,332.8 467.8,333.6 469.8,335.1 471.9,337.1 473.9,338.0 475.9,339.3 478.0,340.5 480.0,342.1 482.0,342.9 484.1,344.0 486.1,345.5 488.2,346.3 490.2,347.6 492.2,348.7 494.3,349.9 496.3,351.5 498.3,352.6 500.4,353.5 502.4,354.3 504.4,356.0 506.5,356.9 508.5,358.4 510.6,359.1 512.6,360.5 514.6,361.7 516.7,362.7 518.7,364.3 520.7,365.0 522.8,366.1 524.8,367.3 526.8,368.8 528.9,370.0 530.9,371.2 533.0,371.9 535.0,373.4 537.0,374.6 539.1,375.7 541.1,376.7 543.1,378.1 545.2,379.3 547.2,380.1 549.2,381.3 551.3,382.8 553.3,384.1 555.4,384.7 557.4,386.0 559.4,387.3 561.5,388.6 563.5,389.3 565.5,390.9 567.6,392.2 569.6,393.4 571.6,394.4 573.7,395.4 575.7,396.8 577.8,397.5 579.8,398.9 581.8,400.2 583.9,401.2 585.9,402.4 587.9,403.6 590.0,404.8 592.0,406.0 594.0,407.2 596.1,408.1 598.1,409.7 600.2,410.5 602.2,412.0 604.2,412.8 606.3,414.5 608.3,415.3 610.3,416.5 612.4,417.5 614.4,419.0 616.5,420.2 618.5,421.4 620.5,422.3 622.6,423.4 624.6,425.0 626.6,426.1 628.7,427.2 630.7,427.8 632.7,429.4 634.8,430.4 636.8,431.8 638.9,432.7 640.9,433.8 642.9,435.0" fill="none" stroke="#1438ff" stroke-width="1.05"/><polyline points="466.6,328.2 468.6,329.6 470.6,330.2 472.7,331.4 474.7,332.5 476.7,333.6 478.8,335.5 480.8,336.3 482.9,337.6 484.9,339.3 486.9,340.3 489.0,340.9 491.0,342.5 493.0,343.5 495.1,344.6 497.1,346.1 499.1,346.8 501.2,348.5 503.2,349.6 505.3,350.8 507.3,351.5 509.3,352.7 511.4,354.1 513.4,355.5 515.4,356.5 517.5,357.5 519.5,359.1 521.5,359.7 523.6,360.9 525.6,362.0 527.7,363.3 529.7,364.5 531.7,365.4 533.8,367.1 535.8,368.3 537.8,369.5 539.9,370.7 541.9,371.4 543.9,373.1 546.0,373.8 548.0,375.2 550.1,376.0 552.1,377.3 554.1,378.5 556.2,379.5 558.2,381.3 560.2,382.3 562.3,383.4 564.3,384.5 566.3,385.5 568.4,386.5 570.4,387.8 572.5,388.8 574.5,390.1 576.5,391.5 578.6,392.6 580.6,393.6 582.6,394.7 584.7,396.2 586.7,397.4 588.7,398.4 590.8,399.8 592.8,400.5 594.9,402.3 596.9,403.0 598.9,404.3 601.0,405.6 603.0,406.5 605.0,407.8 607.1,408.6 609.1,409.8 611.1,411.2 613.2,412.2 615.2,413.3 617.3,415.0 619.3,415.7 621.3,416.9 623.4,417.9 625.4,419.2 627.4,420.7 629.5,422.0 631.5,422.8 633.5,424.3 635.6,425.1 637.6,426.4 639.7,427.4 641.7,428.8 643.7,430.1 645.8,430.8 647.8,432.1 649.8,433.5" fill="none" stroke="#1438ff" stroke-width="1.05"/><polyline points="473.5,326.1 475.5,327.1 477.6,328.0 479.6,329.1 481.6,331.4 483.7,331.6 485.7,333.5 487.7,334.4 489.8,335.8 491.8,337.0 493.9,337.9 495.9,339.7 497.9,340.3 500.0,341.8 502.0,343.4 504.0,344.0 506.1,345.3 508.1,346.5 510.1,347.9 512.2,348.8 514.2,350.3 516.2,351.2 518.3,352.6 520.3,353.3 522.4,354.5 524.4,355.9 526.4,356.9 528.5,358.3 530.5,359.4 532.5,360.8 534.6,361.5 536.6,362.7 538.6,363.9 540.7,365.5 542.7,366.2 544.8,367.9 546.8,368.7 548.8,369.9 550.9,371.4 552.9,372.3 554.9,373.1 557.0,374.5 559.0,375.8 561.0,376.7 563.1,378.1 565.1,378.9 567.2,380.4 569.2,381.8 571.2,382.4 573.3,384.2 575.3,385.2 577.3,386.0 579.4,387.6 581.4,388.5 583.4,389.5 585.5,390.8 587.5,392.1 589.6,393.0 591.6,394.1 593.6,395.5 595.7,396.6 597.7,398.0 599.7,399.1 601.8,399.9 603.8,401.0 605.8,402.9 607.9,403.9 609.9,405.1 611.9,405.8 614.0,407.4 616.0,408.6 618.1,409.3 620.1,410.9 622.1,411.5 624.2,413.1 626.2,413.9 628.2,415.1 630.3,416.7 632.3,417.5 634.3,418.9 636.4,420.2 638.4,421.5 640.5,422.2 642.5,423.5 644.5,424.8 646.6,425.6 648.6,427.2 650.6,428.2 652.7,429.6 654.7,430.6 656.7,431.4" fill="none" stroke="#1438ff" stroke-width="1.05"/><polyline points="480.4,324.8 482.4,325.5 484.5,326.4 486.5,327.8 488.6,328.8 490.6,330.9 492.6,331.7 494.7,333.5 496.7,333.6 498.7,334.9 500.8,336.3 502.8,337.6 504.8,339.1 506.9,340.5 508.9,341.4 511.0,342.8 513.0,343.4 515.0,344.8 517.1,345.9 519.1,346.9 521.1,348.5 523.2,349.2 525.2,350.4 527.2,352.0 529.3,353.3 531.3,354.0 533.3,355.1 535.4,356.3 537.4,357.7 539.5,358.8 541.5,360.3 543.5,361.4 545.6,362.4 547.6,363.3 549.6,365.0 551.7,365.5 553.7,367.3 555.7,367.8 557.8,369.5 559.8,370.3 561.9,371.4 563.9,372.5 565.9,374.0 568.0,375.0 570.0,376.5 572.0,377.3 574.1,378.9 576.1,379.5 578.1,380.9 580.2,382.5 582.2,383.0 584.2,384.6 586.3,385.9 588.3,387.0 590.4,388.3 592.4,389.3 594.4,390.2 596.5,391.1 598.5,392.5 600.5,393.6 602.6,394.7 604.6,396.0 606.6,397.4 608.7,398.6 610.7,399.9 612.8,400.8 614.8,402.2 616.8,403.0 618.9,404.4 620.9,405.4 622.9,406.6 625.0,407.7 627.0,409.2 629.0,410.3 631.1,411.2 633.1,412.6 635.2,413.5 637.2,414.5 639.2,416.0 641.3,416.8 643.3,418.2 645.3,419.1 647.4,420.6 649.4,421.6 651.4,422.8 653.5,424.3 655.5,425.3 657.5,426.4 659.6,427.6 661.6,428.7 663.7,429.6" fill="none" stroke="#1438ff" stroke-width="1.05"/><polyline points="487.3,321.9 489.4,323.8 491.4,324.4 493.4,327.0 495.5,327.3 497.5,328.5 499.5,330.0 501.6,330.7 503.6,332.1 505.7,333.6 507.7,334.6 509.7,335.9 511.8,336.9 513.8,338.6 515.8,339.9 517.9,341.0 519.9,341.7 521.9,343.0 524.0,344.0 526.0,345.7 528.1,346.9 530.1,347.9 532.1,349.0 534.2,350.0 536.2,351.4 538.2,352.3 540.3,353.6 542.3,354.9 544.3,355.8 546.4,357.4 548.4,358.2 550.4,359.7 552.5,360.9 554.5,361.8 556.6,362.9 558.6,364.0 560.6,365.4 562.7,366.1 564.7,367.4 566.7,369.0 568.8,370.3 570.8,370.8 572.8,372.3 574.9,373.7 576.9,374.8 578.9,375.6 581.0,377.2 583.0,378.2 585.1,379.1 587.1,380.5 589.1,381.5 591.2,382.4 593.2,383.7 595.2,385.0 597.3,386.2 599.3,387.5 601.3,388.5 603.4,389.6 605.4,390.8 607.5,392.1 609.5,393.1 611.5,394.6 613.6,395.4 615.6,396.4 617.6,398.2 619.7,399.2 621.7,399.9 623.7,401.7 625.8,402.3 627.8,403.7 629.8,405.2 631.9,406.0 633.9,407.6 636.0,408.1 638.0,409.7 640.0,410.4 642.1,411.6 644.1,413.3 646.1,414.3 648.2,415.6 650.2,416.4 652.2,418.0 654.3,419.2 656.3,420.3 658.3,420.9 660.4,422.5 662.4,423.6 664.5,424.7 666.5,425.8 668.5,427.1 670.6,427.9" fill="none" stroke="#1438ff" stroke-width="1.05"/><polyline points="494.3,321.1 496.3,322.2 498.3,323.1 500.4,324.1 502.4,325.6 504.4,327.4 506.5,327.8 508.5,329.7 510.5,330.2 512.6,331.8 514.6,332.7 516.6,334.1 518.7,335.1 520.7,336.0 522.8,337.4 524.8,339.2 526.8,339.6 528.9,341.3 530.9,342.2 532.9,343.3 535.0,344.3 537.0,346.0 539.0,347.3 541.1,347.8 543.1,349.7 545.2,350.4 547.2,351.8 549.2,352.9 551.3,353.8 553.3,355.2 555.3,356.4 557.4,357.7 559.4,359.0 561.4,359.8 563.5,361.3 565.5,362.7 567.5,363.2 569.6,364.7 571.6,365.8 573.7,367.2 575.7,368.5 577.7,369.5 579.8,370.3 581.8,371.9 583.8,372.6 585.9,374.2 587.9,374.9 589.9,376.6 592.0,377.6 594.0,378.9 596.0,380.1 598.1,381.0 600.1,382.3 602.2,383.3 604.2,384.7 606.2,385.8 608.3,387.0 610.3,387.7 612.3,389.5 614.4,390.4 616.4,391.3 618.4,392.6 620.5,394.0 622.5,394.6 624.5,396.4 626.6,397.6 628.6,398.8 630.7,399.7 632.7,400.6 634.7,402.1 636.8,403.3 638.8,404.1 640.8,405.8 642.9,407.0 644.9,407.7 646.9,409.3 649.0,410.1 651.0,411.6 653.0,412.4 655.1,413.4 657.1,414.8 659.2,416.1 661.2,417.0 663.2,418.2 665.3,419.8 667.3,420.8 669.3,421.9 671.4,422.9 673.4,424.3 675.4,425.2 677.5,426.6" fill="none" stroke="#1438ff" stroke-width="1.05"/><polyline points="501.2,319.0 503.2,321.1 505.2,322.1 507.3,322.5 509.3,323.1 511.4,324.2 513.4,326.6 515.4,327.7 517.5,329.0 519.5,329.6 521.5,330.9 523.6,332.0 525.6,333.7 527.6,334.3 529.7,335.3 531.7,336.9 533.7,338.5 535.8,339.4 537.8,340.7 539.9,341.6 541.9,343.0 543.9,343.8 546.0,345.7 548.0,346.8 550.0,347.1 552.1,348.8 554.1,350.3 556.1,351.2 558.2,352.7 560.2,353.6 562.2,354.6 564.3,355.9 566.3,357.2 568.4,358.6 570.4,359.5 572.4,360.7 574.5,362.0 576.5,363.2 578.5,363.9 580.6,365.4 582.6,366.7 584.6,367.8 586.7,368.8 588.7,370.0 590.7,371.2 592.8,372.4 594.8,373.7 596.9,374.6 598.9,375.7 600.9,377.2 603.0,378.1 605.0,379.4 607.0,380.1 609.1,381.3 611.1,383.0 613.1,383.8 615.2,385.2 617.2,386.5 619.2,387.2 621.3,388.3 623.3,389.6 625.4,390.8 627.4,391.8 629.4,393.2 631.5,394.3 633.5,395.5 635.5,396.5 637.6,397.7 639.6,399.2 641.6,400.5 643.7,401.4 645.7,402.5 647.7,403.8 649.8,404.7 651.8,405.8 653.9,407.1 655.9,408.4 657.9,409.4 660.0,410.9 662.0,411.7 664.0,413.3 666.1,413.9 668.1,415.3 670.1,416.7 672.2,417.9 674.2,418.8 676.2,420.1 678.3,421.1 680.3,422.7 682.3,423.3 684.4,424.8" fill="none" stroke="#1438ff" stroke-width="1.05"/><polyline points="508.1,316.6 510.1,318.3 512.2,319.7 514.2,321.5 516.2,322.4 518.3,322.7 520.3,324.3 522.3,325.0 524.4,326.4 526.4,327.7 528.5,329.0 530.5,330.0 532.5,331.4 534.6,332.4 536.6,334.0 538.6,334.4 540.7,336.8 542.7,336.7 544.7,338.6 546.8,339.8 548.8,341.0 550.8,342.0 552.9,343.7 554.9,344.4 557.0,346.3 559.0,347.5 561.0,347.8 563.1,349.1 565.1,350.9 567.1,351.4 569.2,352.6 571.2,354.1 573.2,355.1 575.3,356.9 577.3,357.9 579.3,359.3 581.4,360.3 583.4,361.2 585.4,362.6 587.5,363.8 589.5,365.0 591.6,366.0 593.6,367.1 595.6,368.2 597.7,369.1 599.7,370.9 601.7,371.9 603.8,373.2 605.8,373.8 607.8,375.1 609.9,376.3 611.9,377.3 613.9,379.1 616.0,379.6 618.0,381.2 620.1,382.1 622.1,383.4 624.1,384.4 626.2,385.8 628.2,387.0 630.2,388.2 632.3,389.0 634.3,390.4 636.3,391.8 638.4,392.8 640.4,393.8 642.4,395.1 644.5,396.1 646.5,397.1 648.5,398.4 650.6,399.5 652.6,401.0 654.7,401.7 656.7,402.9 658.7,404.3 660.8,405.8 662.8,407.0 664.8,407.6 666.9,408.7 668.9,410.0 670.9,411.3 673.0,412.5 675.0,413.9 677.0,414.7 679.1,415.6 681.1,417.3 683.2,418.2 685.2,419.2 687.2,420.5 689.3,421.9 691.3,423.1" fill="none" stroke="#1438ff" stroke-width="1.05"/><polyline points="515.0,313.9 517.1,316.4 519.1,316.6 521.1,318.3 523.2,320.8 525.2,321.0 527.2,323.2 529.3,324.3 531.3,324.5 533.3,326.1 535.4,327.4 537.4,328.3 539.4,329.3 541.5,331.4 543.5,331.3 545.6,333.2 547.6,334.6 549.6,335.9 551.7,337.0 553.7,337.8 555.7,338.6 557.8,340.9 559.8,341.0 561.8,342.6 563.9,343.8 565.9,344.8 567.9,346.5 570.0,347.3 572.0,349.3 574.0,350.0 576.1,351.0 578.1,352.4 580.2,353.7 582.2,354.6 584.2,355.8 586.3,357.4 588.3,358.4 590.3,359.2 592.4,361.0 594.4,362.2 596.4,363.3 598.5,364.0 600.5,365.5 602.5,366.4 604.6,367.5 606.6,368.6 608.6,370.3 610.7,371.0 612.7,372.1 614.8,373.4 616.8,374.4 618.8,375.6 620.9,376.9 622.9,377.9 624.9,379.3 627.0,380.8 629.0,381.8 631.0,382.5 633.1,384.1 635.1,385.2 637.1,386.0 639.2,387.3 641.2,388.4 643.3,389.8 645.3,391.0 647.3,392.4 649.4,393.5 651.4,394.7 653.4,395.6 655.5,396.8 657.5,398.2 659.5,399.0 661.6,400.5 663.6,401.5 665.6,402.9 667.7,403.8 669.7,405.2 671.7,405.8 673.8,407.3 675.8,408.2 677.9,409.6 679.9,410.9 681.9,411.7 684.0,413.2 686.0,414.2 688.0,415.3 690.1,416.2 692.1,417.6 694.1,419.2 696.2,420.1 698.2,420.9" fill="none" stroke="#1438ff" stroke-width="1.05"/><polyline points="521.9,313.4 524.0,315.4 526.0,316.4 528.1,317.3 530.1,317.4 532.1,319.4 534.2,321.0 536.2,321.4 538.2,323.1 540.3,324.4 542.3,325.3 544.3,326.9 546.4,327.8 548.4,329.3 550.4,330.4 552.5,330.4 554.5,332.7 556.5,333.3 558.6,335.9 560.6,336.0 562.7,337.5 564.7,338.5 566.7,339.3 568.8,340.7 570.8,342.7 572.8,343.9 574.9,345.1 576.9,346.0 578.9,346.8 581.0,348.5 583.0,349.5 585.0,350.9 587.1,351.9 589.1,353.3 591.1,354.7 593.2,355.6 595.2,356.4 597.2,358.0 599.3,358.9 601.3,360.4 603.4,361.5 605.4,362.4 607.4,363.9 609.5,364.8 611.5,365.9 613.5,367.2 615.6,368.1 617.6,369.2 619.6,370.8 621.7,371.6 623.7,372.8 625.7,374.0 627.8,375.2 629.8,376.4 631.8,377.4 633.9,378.6 635.9,380.1 638.0,381.0 640.0,382.1 642.0,383.4 644.1,384.3 646.1,385.9 648.1,386.9 650.2,388.0 652.2,389.2 654.2,390.6 656.3,391.4 658.3,393.0 660.3,393.9 662.4,395.1 664.4,396.1 666.4,397.1 668.5,398.2 670.5,399.9 672.6,400.6 674.6,402.0 676.6,403.2 678.7,404.7 680.7,405.3 682.7,406.9 684.8,408.0 686.8,409.1 688.8,410.4 690.9,411.5 692.9,412.6 694.9,413.6 697.0,414.9 699.0,415.8 701.0,416.8 703.1,418.0 705.1,419.6" fill="none" stroke="#1438ff" stroke-width="1.05"/><polyline points="528.9,310.4 530.9,312.7 532.9,313.1 535.0,315.3 537.0,317.4 539.0,316.0 541.1,319.4 543.1,318.9 545.1,321.0 547.2,323.2 549.2,324.3 551.3,324.3 553.3,324.7 555.3,326.7 557.4,327.8 559.4,330.3 561.4,331.1 563.5,331.9 565.5,333.5 567.5,334.7 569.6,335.3 571.6,336.3 573.6,338.0 575.7,339.0 577.7,340.9 579.7,341.7 581.8,342.9 583.8,344.4 585.9,345.3 587.9,346.3 589.9,348.0 592.0,349.2 594.0,349.9 596.0,351.6 598.1,352.8 600.1,353.5 602.1,354.7 604.2,355.8 606.2,357.0 608.2,358.5 610.3,359.4 612.3,360.8 614.3,362.0 616.4,363.1 618.4,364.1 620.4,365.5 622.5,366.5 624.5,367.7 626.6,368.7 628.6,370.1 630.6,371.3 632.7,372.3 634.7,373.6 636.7,374.5 638.8,376.1 640.8,377.2 642.8,378.5 644.9,379.4 646.9,380.3 648.9,381.6 651.0,382.7 653.0,383.7 655.0,384.9 657.1,386.5 659.1,387.7 661.1,388.6 663.2,390.0 665.2,390.9 667.3,392.4 669.3,393.4 671.3,394.3 673.4,395.8 675.4,397.0 677.4,397.8 679.5,399.3 681.5,400.0 683.5,401.4 685.6,402.3 687.6,403.8 689.6,404.9 691.7,406.3 693.7,407.6 695.7,408.1 697.8,409.8 699.8,411.0 701.8,411.6 703.9,413.1 705.9,414.2 708.0,415.1 710.0,416.4 712.0,417.9" fill="none" stroke="#1438ff" stroke-width="1.05"/><polyline points="535.8,309.0 537.8,311.5 539.9,312.0 541.9,312.3 543.9,315.4 546.0,315.2 548.0,317.3 550.0,317.9 552.1,319.8 554.1,319.6 556.1,322.9 558.2,324.2 560.2,324.9 562.2,325.9 564.3,327.2 566.3,328.5 568.4,328.0 570.4,329.2 572.4,331.4 574.5,332.1 576.5,333.5 578.5,335.4 580.6,336.2 582.6,337.4 584.6,339.6 586.7,339.6 588.7,341.1 590.7,342.5 592.8,343.2 594.8,344.4 596.8,346.1 598.9,347.5 600.9,348.4 602.9,350.0 605.0,351.1 607.0,352.1 609.0,352.9 611.1,354.4 613.1,355.3 615.2,356.9 617.2,358.0 619.2,359.2 621.3,360.3 623.3,361.1 625.3,362.6 627.4,363.8 629.4,364.7 631.4,366.0 633.5,366.9 635.5,368.2 637.5,369.2 639.6,370.7 641.6,371.9 643.6,373.0 645.7,373.8 647.7,375.0 649.7,376.4 651.8,377.6 653.8,379.1 655.9,379.7 657.9,381.0 659.9,382.3 662.0,383.7 664.0,384.6 666.0,385.6 668.1,387.1 670.1,388.2 672.1,389.2 674.2,390.4 676.2,391.9 678.2,393.0 680.3,394.0 682.3,394.9 684.3,396.3 686.4,397.7 688.4,398.7 690.4,399.9 692.5,400.7 694.5,402.2 696.6,402.9 698.6,404.5 700.6,405.7 702.7,407.0 704.7,407.9 706.7,409.0 708.8,410.0 710.8,411.2 712.8,412.5 714.9,414.0 716.9,414.5 718.9,416.2" fill="none" stroke="#1438ff" stroke-width="1.05"/><polyline points="542.7,309.1 544.7,308.0 546.8,311.0 548.8,311.1 550.9,313.7 552.9,312.9 554.9,316.0 557.0,315.0 559.0,317.7 561.0,318.4 563.1,318.2 565.1,321.7 567.1,323.3 569.2,322.7 571.2,324.7 573.2,326.0 575.3,326.7 577.3,327.7 579.3,328.7 581.4,331.2 583.4,331.6 585.4,333.3 587.5,334.3 589.5,336.0 591.5,337.2 593.6,338.6 595.6,339.8 597.7,340.5 599.7,341.4 601.7,343.1 603.8,344.5 605.8,345.9 607.8,346.9 609.9,347.9 611.9,349.3 613.9,350.4 616.0,351.5 618.0,352.9 620.0,354.1 622.1,355.0 624.1,356.3 626.1,357.5 628.2,358.3 630.2,359.4 632.2,360.8 634.3,362.3 636.3,362.9 638.3,364.4 640.4,365.7 642.4,366.4 644.5,367.5 646.5,369.1 648.5,370.0 650.6,371.0 652.6,372.4 654.6,373.7 656.7,375.0 658.7,376.2 660.7,376.8 662.8,378.0 664.8,379.6 666.8,380.4 668.9,381.9 670.9,382.7 672.9,384.1 675.0,385.0 677.0,386.3 679.0,387.8 681.1,388.6 683.1,389.7 685.1,391.3 687.2,392.5 689.2,393.5 691.3,394.3 693.3,395.3 695.3,396.8 697.4,397.7 699.4,399.0 701.4,400.5 703.5,401.5 705.5,402.4 707.5,403.8 709.6,404.9 711.6,406.0 713.6,407.5 715.7,408.5 717.7,409.6 719.7,410.7 721.8,411.8 723.8,413.2 725.8,414.3" fill="none" stroke="#1438ff" stroke-width="1.05"/><polyline points="549.6,307.5 551.7,304.5 553.7,308.4 555.7,309.6 557.8,311.5 559.8,312.0 561.8,312.6 563.9,315.1 565.9,314.3 567.9,318.3 570.0,319.2 572.0,319.2 574.1,320.5 576.1,322.4 578.1,323.9 580.2,323.8 582.2,325.7 584.2,325.5 586.3,327.0 588.3,328.8 590.3,330.0 592.4,331.4 594.4,332.1 596.4,334.5 598.5,335.4 600.5,337.0 602.5,337.6 604.6,338.7 606.6,340.4 608.6,340.9 610.7,342.6 612.7,343.9 614.7,345.2 616.8,346.6 618.8,347.1 620.8,348.4 622.9,349.9 624.9,350.8 627.0,352.4 629.0,353.0 631.0,354.3 633.1,355.4 635.1,356.8 637.1,357.9 639.2,358.8 641.2,360.3 643.2,361.7 645.3,362.8 647.3,363.4 649.3,365.0 651.4,366.3 653.4,367.1 655.4,368.6 657.5,369.6 659.5,370.5 661.5,372.0 663.6,373.0 665.6,373.9 667.6,375.1 669.7,376.2 671.7,378.0 673.8,378.5 675.8,379.9 677.8,381.4 679.9,382.0 681.9,383.7 683.9,384.3 686.0,386.1 688.0,387.2 690.0,388.1 692.1,389.2 694.1,390.4 696.1,391.4 698.2,393.0 700.2,393.8 702.2,395.2 704.3,395.9 706.3,397.3 708.3,398.4 710.4,400.0 712.4,400.6 714.4,402.2 716.5,403.4 718.5,404.4 720.5,405.3 722.6,406.8 724.6,407.9 726.7,408.9 728.7,410.4 730.7,411.6 732.8,412.6" fill="none" stroke="#1438ff" stroke-width="1.05"/><polyline points="556.6,302.8 558.6,304.5 560.6,305.1 562.7,309.7 564.7,307.5 566.7,309.1 568.8,310.6 570.8,311.9 572.8,314.2 574.9,314.2 576.9,316.6 578.9,318.5 581.0,318.9 583.0,319.2 585.0,322.3 587.1,322.1 589.1,322.5 591.1,323.7 593.2,325.4 595.2,327.0 597.2,328.5 599.3,329.4 601.3,331.1 603.4,331.5 605.4,333.3 607.4,334.5 609.5,335.7 611.5,337.3 613.5,338.3 615.6,339.4 617.6,341.1 619.6,342.3 621.7,343.6 623.7,344.5 625.7,345.8 627.8,346.6 629.8,347.8 631.8,349.3 633.9,350.4 635.9,351.3 637.9,352.7 640.0,353.7 642.0,355.1 644.0,356.1 646.1,357.3 648.1,358.2 650.1,359.7 652.2,360.6 654.2,362.2 656.2,363.3 658.3,364.5 660.3,365.2 662.4,366.9 664.4,367.9 666.4,369.0 668.5,370.0 670.5,371.1 672.5,372.7 674.6,373.7 676.6,374.6 678.6,376.2 680.7,377.3 682.7,378.0 684.7,379.7 686.8,380.9 688.8,381.9 690.8,382.6 692.9,384.1 694.9,385.3 696.9,386.3 699.0,387.3 701.0,389.0 703.0,390.1 705.1,391.1 707.1,392.1 709.1,393.6 711.2,394.5 713.2,395.6 715.3,397.1 717.3,398.1 719.3,399.5 721.4,400.0 723.4,401.8 725.4,402.9 727.5,403.7 729.5,405.1 731.5,406.1 733.6,407.4 735.6,408.1 737.6,409.6 739.7,410.9" fill="none" stroke="#1438ff" stroke-width="1.05"/><polyline points="563.5,302.6 565.5,302.4 567.6,304.5 569.6,306.1 571.6,305.4 573.7,308.3 575.7,308.5 577.7,311.4 579.8,312.3 581.8,313.3 583.8,315.6 585.9,316.2 587.9,318.2 589.9,318.4 592.0,318.5 594.0,320.9 596.0,321.3 598.1,322.9 600.1,325.7 602.1,325.2 604.2,327.2 606.2,328.5 608.2,329.2 610.3,330.8 612.3,331.8 614.3,333.0 616.4,333.9 618.4,335.9 620.4,336.7 622.5,338.4 624.5,339.0 626.5,340.8 628.6,341.6 630.6,343.1 632.7,343.7 634.7,345.0 636.7,346.5 638.8,347.6 640.8,348.8 642.8,350.1 644.9,350.9 646.9,352.3 648.9,353.2 651.0,354.2 653.0,355.7 655.0,356.9 657.1,358.0 659.1,359.1 661.1,360.6 663.2,361.5 665.2,362.7 667.2,364.0 669.3,364.7 671.3,365.9 673.3,367.2 675.4,368.7 677.4,369.4 679.4,370.8 681.5,371.6 683.5,372.9 685.5,374.4 687.6,375.2 689.6,376.4 691.6,377.8 693.7,378.6 695.7,380.1 697.8,381.4 699.8,382.6 701.8,383.4 703.9,384.8 705.9,386.0 707.9,387.3 710.0,387.9 712.0,389.4 714.0,390.2 716.1,391.3 718.1,392.5 720.1,394.1 722.2,394.8 724.2,396.2 726.2,397.2 728.3,398.3 730.3,399.9 732.3,401.0 734.4,401.8 736.4,403.4 738.4,404.7 740.5,405.9 742.5,406.7 744.5,408.0 746.6,408.7" fill="none" stroke="#1438ff" stroke-width="1.05"/><polyline points="570.4,301.5 572.4,301.4 574.5,302.4 576.5,302.5 578.5,305.0 580.6,306.8 582.6,309.1 584.6,309.5 586.7,311.9 588.7,311.9 590.7,313.4 592.8,313.4 594.8,314.9 596.8,316.7 598.9,318.3 600.9,319.6 603.0,320.0 605.0,322.6 607.0,322.9 609.1,324.5 611.1,325.7 613.1,326.7 615.2,328.3 617.2,328.1 619.2,330.2 621.3,332.1 623.3,332.2 625.3,334.1 627.4,335.1 629.4,336.3 631.4,337.2 633.5,338.4 635.5,340.2 637.5,341.1 639.6,342.4 641.6,343.6 643.6,344.6 645.7,345.8 647.7,347.0 649.7,347.7 651.8,349.4 653.8,350.1 655.8,351.8 657.9,352.6 659.9,353.9 661.9,355.1 664.0,356.2 666.0,357.6 668.0,358.7 670.1,359.7 672.1,361.0 674.1,361.8 676.2,363.0 678.2,364.2 680.3,365.3 682.3,366.9 684.3,368.1 686.4,369.3 688.4,369.9 690.4,371.3 692.5,372.1 694.5,373.7 696.5,374.8 698.6,375.8 700.6,376.8 702.6,378.3 704.7,379.4 706.7,380.7 708.7,381.9 710.8,382.6 712.8,383.8 714.8,385.3 716.9,386.6 718.9,387.3 720.9,388.7 723.0,389.7 725.0,391.1 727.0,392.5 729.1,393.2 731.1,394.8 733.1,395.4 735.2,397.1 737.2,398.1 739.2,399.5 741.3,400.5 743.3,401.4 745.3,402.9 747.4,404.1 749.4,405.3 751.5,406.5 753.5,407.3" fill="none" stroke="#1438ff" stroke-width="1.05"/><polyline points="577.3,298.5 579.4,300.3 581.4,299.8 583.4,302.1 585.5,305.0 587.5,306.6 589.5,305.2 591.6,307.1 593.6,309.1 595.6,310.8 597.7,310.8 599.7,311.3 601.7,313.1 603.8,315.8 605.8,317.1 607.8,317.9 609.9,319.2 611.9,320.1 613.9,321.7 616.0,323.3 618.0,323.0 620.0,324.7 622.1,325.5 624.1,327.5 626.1,328.3 628.2,329.3 630.2,331.0 632.2,332.0 634.3,333.3 636.3,334.7 638.3,335.4 640.4,336.8 642.4,338.0 644.5,339.6 646.5,340.4 648.5,341.4 650.6,342.6 652.6,343.8 654.6,345.4 656.7,346.5 658.7,347.7 660.7,348.6 662.8,349.5 664.8,350.9 666.8,352.1 668.9,353.4 670.9,354.7 672.9,355.8 675.0,356.4 677.0,357.7 679.0,359.0 681.1,360.1 683.1,361.6 685.1,362.9 687.2,364.1 689.2,365.2 691.2,366.3 693.3,366.9 695.3,368.3 697.3,369.7 699.4,371.0 701.4,372.2 703.4,373.4 705.5,374.4 707.5,375.5 709.5,376.8 711.6,377.9 713.6,378.7 715.6,380.3 717.7,381.4 719.7,382.1 721.7,383.6 723.8,384.6 725.8,386.0 727.8,386.8 729.9,388.5 731.9,389.4 734.0,390.2 736.0,391.8 738.0,392.7 740.1,394.1 742.1,395.4 744.1,396.3 746.2,397.4 748.2,398.9 750.2,399.7 752.3,400.9 754.3,402.2 756.3,403.0 758.4,404.1 760.4,405.6" fill="none" stroke="#1438ff" stroke-width="1.05"/><polyline points="584.2,297.0 586.3,298.7 588.3,300.6 590.4,301.0 592.4,302.9 594.4,303.1 596.5,304.2 598.5,305.4 600.5,306.6 602.6,308.8 604.6,311.0 606.6,311.6 608.7,312.1 610.7,313.0 612.7,315.5 614.8,315.7 616.8,317.2 618.8,318.2 620.9,319.4 622.9,320.0 624.9,321.9 627.0,323.0 629.0,323.6 631.0,325.4 633.1,326.7 635.1,328.3 637.1,329.3 639.2,330.2 641.2,331.8 643.2,332.7 645.3,334.1 647.3,335.5 649.3,336.2 651.4,337.4 653.4,338.9 655.4,340.1 657.5,341.4 659.5,342.5 661.5,343.6 663.6,344.7 665.6,345.9 667.6,346.8 669.7,347.8 671.7,349.3 673.7,350.2 675.8,351.7 677.8,352.9 679.8,353.7 681.9,355.3 683.9,356.5 685.9,357.0 688.0,358.6 690.0,359.8 692.0,360.7 694.1,361.7 696.1,363.3 698.2,364.1 700.2,365.8 702.2,366.4 704.3,367.9 706.3,369.1 708.3,370.5 710.4,371.6 712.4,372.5 714.4,373.9 716.5,374.7 718.5,375.6 720.5,377.3 722.6,378.1 724.6,379.4 726.6,380.5 728.7,381.5 730.7,382.9 732.7,383.8 734.8,385.5 736.8,386.3 738.8,387.5 740.9,388.9 742.9,390.1 744.9,390.7 747.0,392.1 749.0,393.3 751.0,394.5 753.1,395.4 755.1,396.7 757.1,398.2 759.2,398.8 761.2,400.1 763.2,401.3 765.3,402.5 767.3,403.7" fill="none" stroke="#1438ff" stroke-width="1.05"/><polyline points="591.2,295.0 593.2,298.2 595.2,298.6 597.3,299.2 599.3,301.4 601.3,302.5 603.4,302.7 605.4,303.5 607.4,306.0 609.5,307.3 611.5,308.3 613.5,309.5 615.6,311.4 617.6,312.3 619.6,312.8 621.7,314.9 623.7,315.8 625.7,316.4 627.8,317.9 629.8,319.0 631.8,320.2 633.9,320.7 635.9,323.1 637.9,323.8 640.0,325.1 642.0,327.0 644.1,327.3 646.1,328.7 648.1,329.6 650.2,331.4 652.2,332.7 654.2,333.3 656.3,334.8 658.3,335.8 660.3,336.8 662.4,338.2 664.4,339.5 666.4,340.4 668.5,341.7 670.5,343.2 672.5,344.3 674.6,344.9 676.6,346.3 678.6,347.9 680.7,348.5 682.7,349.7 684.7,351.3 686.8,351.8 688.8,353.6 690.8,354.5 692.9,355.5 694.9,356.8 696.9,358.1 699.0,359.1 701.0,360.2 703.0,361.1 705.1,362.3 707.1,363.4 709.1,364.7 711.2,366.1 713.2,367.3 715.2,368.1 717.3,369.3 719.3,370.9 721.3,371.7 723.4,373.2 725.4,374.5 727.4,375.4 729.5,376.2 731.5,377.7 733.5,378.6 735.6,379.8 737.6,381.0 739.6,382.5 741.7,383.2 743.7,384.9 745.7,385.8 747.8,387.3 749.8,388.2 751.8,389.0 753.9,390.2 755.9,391.3 757.9,392.7 760.0,393.9 762.0,395.3 764.0,396.3 766.1,397.1 768.1,398.7 770.1,399.5 772.2,401.0 774.2,401.8" fill="none" stroke="#1438ff" stroke-width="1.05"/><polyline points="598.1,293.9 600.1,297.2 602.2,296.5 604.2,298.4 606.2,300.0 608.3,301.3 610.3,303.0 612.3,303.2 614.4,304.5 616.4,305.7 618.4,307.3 620.5,307.1 622.5,308.8 624.5,310.5 626.6,311.8 628.6,312.5 630.6,314.0 632.7,314.7 634.7,316.4 636.7,317.4 638.8,318.6 640.8,319.9 642.8,320.7 644.9,322.3 646.9,323.6 648.9,324.4 651.0,326.2 653.0,326.7 655.0,328.0 657.1,329.5 659.1,330.5 661.1,332.1 663.2,333.1 665.2,334.0 667.2,335.6 669.3,336.7 671.3,337.8 673.3,339.1 675.4,340.0 677.4,341.1 679.4,342.5 681.5,343.7 683.5,344.5 685.5,346.1 687.6,346.7 689.6,348.0 691.6,349.5 693.7,350.8 695.7,351.4 697.7,353.1 699.8,353.7 701.8,355.1 703.8,356.1 705.9,357.6 707.9,358.4 709.9,359.9 712.0,360.8 714.0,361.7 716.0,363.1 718.1,364.6 720.1,365.7 722.1,366.7 724.2,367.6 726.2,368.8 728.2,370.2 730.3,371.3 732.3,372.6 734.4,373.6 736.4,374.9 738.4,375.6 740.5,377.2 742.5,378.4 744.5,379.3 746.6,380.8 748.6,382.0 750.6,382.9 752.7,383.8 754.7,385.3 756.7,386.5 758.8,387.7 760.8,388.6 762.8,390.0 764.9,391.0 766.9,392.2 768.9,393.7 771.0,394.6 773.0,395.4 775.0,397.0 777.1,397.8 779.1,399.4 781.1,400.3" fill="none" stroke="#1438ff" stroke-width="1.05"/><polyline points="605.0,293.0 607.0,295.5 609.1,294.9 611.1,296.2 613.2,297.1 615.2,298.9 617.2,301.0 619.3,301.7 621.3,301.8 623.3,304.1 625.4,305.4 627.4,306.8 629.4,308.0 631.5,309.3 633.5,309.5 635.5,310.7 637.6,311.5 639.6,314.2 641.6,314.7 643.7,315.9 645.7,316.7 647.7,318.2 649.8,319.4 651.8,320.5 653.8,321.8 655.9,323.1 657.9,324.5 659.9,325.5 662.0,326.6 664.0,327.8 666.0,329.0 668.1,330.3 670.1,331.5 672.1,332.5 674.2,333.6 676.2,335.0 678.2,335.7 680.3,337.3 682.3,338.1 684.3,339.3 686.4,340.3 688.4,341.4 690.4,342.7 692.5,344.3 694.5,345.0 696.5,346.7 698.6,347.3 700.6,348.4 702.6,350.1 704.7,351.4 706.7,352.0 708.7,353.5 710.8,354.4 712.8,355.4 714.8,356.5 716.9,358.0 718.9,358.9 720.9,360.0 723.0,361.3 725.0,362.7 727.0,363.5 729.1,365.0 731.1,365.8 733.1,367.3 735.2,368.4 737.2,369.9 739.2,371.0 741.3,371.6 743.3,373.1 745.3,374.1 747.4,375.4 749.4,376.4 751.4,377.7 753.5,379.1 755.5,380.1 757.5,381.1 759.6,382.6 761.6,383.2 763.6,385.0 765.7,385.8 767.7,386.7 769.7,388.0 771.8,389.5 773.8,390.7 775.8,391.5 777.9,392.8 779.9,394.2 781.9,395.3 784.0,396.1 786.0,397.7 788.0,398.7" fill="none" stroke="#1438ff" stroke-width="1.05"/><polyline points="611.9,291.8 614.0,293.4 616.0,295.0 618.0,295.0 620.1,295.9 622.1,298.0 624.1,299.4 626.2,300.0 628.2,300.8 630.2,301.9 632.3,303.2 634.3,304.8 636.3,305.5 638.4,306.4 640.4,308.6 642.4,309.4 644.5,310.7 646.5,311.7 648.5,312.9 650.6,313.7 652.6,315.9 654.6,316.5 656.7,317.5 658.7,319.3 660.7,320.2 662.8,321.0 664.8,322.7 666.8,323.8 668.9,325.1 670.9,325.9 672.9,327.2 675.0,328.7 677.0,329.9 679.0,330.6 681.1,331.6 683.1,333.2 685.1,334.2 687.2,335.3 689.2,336.7 691.2,337.8 693.3,339.0 695.3,339.8 697.3,341.3 699.4,342.2 701.4,343.8 703.4,344.8 705.5,346.0 707.5,347.2 709.5,348.4 711.6,349.4 713.6,350.2 715.6,351.5 717.7,352.4 719.7,354.1 721.7,355.2 723.8,356.4 725.8,357.4 727.8,358.8 729.9,359.5 731.9,360.9 733.9,362.4 736.0,363.2 738.0,364.4 740.0,365.7 742.1,366.8 744.1,367.7 746.1,368.7 748.2,370.1 750.2,371.5 752.2,372.8 754.3,373.8 756.3,375.0 758.3,376.0 760.4,377.2 762.4,378.4 764.4,379.7 766.5,380.3 768.5,381.4 770.5,382.8 772.6,383.8 774.6,385.2 776.6,386.2 778.7,387.6 780.7,388.6 782.7,389.6 784.8,390.9 786.8,392.0 788.8,393.3 790.9,394.6 792.9,395.5 794.9,396.5" fill="none" stroke="#1438ff" stroke-width="1.05"/><line x1="388.3" y1="347.2" x2="398.4" y2="352.0" stroke="#000fff" stroke-width="1.2"/><line x1="398.4" y1="352.0" x2="398.5" y2="348.0" stroke="#0028ff" stroke-width="1.2"/><line x1="398.5" y1="348.0" x2="398.6" y2="344.0" stroke="#0050ff" stroke-width="1.2"/><line x1="398.6" y1="344.0" x2="398.7" y2="340.1" stroke="#0079ff" stroke-width="1.2"/><line x1="398.7" y1="340.1" x2="398.7" y2="336.1" stroke="#00a1ff" stroke-width="1.2"/><line x1="398.7" y1="336.1" x2="398.8" y2="332.2" stroke="#00c9ff" stroke-width="1.2"/><line x1="398.8" y1="332.2" x2="398.9" y2="328.2" stroke="#00f2ff" stroke-width="1.2"/><line x1="398.9" y1="328.2" x2="399.0" y2="324.3" stroke="#00ffe3" stroke-width="1.2"/><line x1="399.0" y1="324.3" x2="399.0" y2="320.3" stroke="#00ffba" stroke-width="1.2"/><line x1="399.0" y1="320.3" x2="399.1" y2="316.4" stroke="#00ff92" stroke-width="1.2"/><line x1="399.1" y1="316.4" x2="399.2" y2="312.4" stroke="#00ff6a" stroke-width="1.2"/><line x1="399.2" y1="312.4" x2="399.3" y2="308.4" stroke="#00ff41" stroke-width="1.2"/><line x1="399.3" y1="308.4" x2="399.3" y2="304.5" stroke="#00ff19" stroke-width="1.2"/><line x1="399.3" y1="304.5" x2="402.1" y2="310.1" stroke="#00ff19" stroke-width="1.2"/><line x1="402.1" y1="310.1" x2="408.1" y2="315.1" stroke="#00ff35" stroke-width="1.2"/><line x1="408.1" y1="315.1" x2="414.1" y2="320.2" stroke="#00ff46" stroke-width="1.2"/><line x1="414.1" y1="320.2" x2="420.2" y2="325.3" stroke="#00ff56" stroke-width="1.2"/><line x1="420.2" y1="325.3" x2="426.2" y2="330.4" stroke="#00ff66" stroke-width="1.2"/><line x1="426.2" y1="330.4" x2="432.2" y2="335.5" stroke="#00ff77" stroke-width="1.2"/><line x1="432.2" y1="335.5" x2="438.2" y2="340.5" stroke="#00ff87" stroke-width="1.2"/><line x1="438.2" y1="340.5" x2="444.2" y2="345.6" stroke="#00ff98" stroke-width="1.2"/><line x1="444.2" y1="345.6" x2="450.2" y2="350.7" stroke="#00ffa8" stroke-width="1.2"/><line x1="450.2" y1="350.7" x2="456.3" y2="355.8" stroke="#00ffb8" stroke-width="1.2"/><line x1="456.3" y1="355.8" x2="462.3" y2="360.9" stroke="#00ffc9" stroke-width="1.2"/><line x1="462.3" y1="360.9" x2="468.3" y2="365.9" stroke="#00ffd9" stroke-width="1.2"/><line x1="468.3" y1="365.9" x2="474.3" y2="371.0" stroke="#00ffea" stroke-width="1.2"/><line x1="474.3" y1="371.0" x2="480.3" y2="376.1" stroke="#00fffa" stroke-width="1.2"/><line x1="480.3" y1="376.1" x2="486.4" y2="381.2" stroke="#00f3ff" stroke-width="1.2"/><line x1="486.4" y1="381.2" x2="492.4" y2="386.3" stroke="#00e2ff" stroke-width="1.2"/><line x1="492.4" y1="386.3" x2="498.4" y2="391.3" stroke="#00d2ff" stroke-width="1.2"/><line x1="498.4" y1="391.3" x2="505.7" y2="397.6" stroke="#00bfff" stroke-width="1.2"/><line x1="505.7" y1="397.6" x2="508.2" y2="395.0" stroke="#00c9ff" stroke-width="1.2"/><line x1="508.2" y1="395.0" x2="510.6" y2="392.4" stroke="#00f2ff" stroke-width="1.2"/><line x1="510.6" y1="392.4" x2="513.1" y2="389.8" stroke="#00ffe3" stroke-width="1.2"/><line x1="513.1" y1="389.8" x2="514.3" y2="394.5" stroke="#00ffe3" stroke-width="1.2"/><line x1="514.3" y1="394.5" x2="515.5" y2="399.2" stroke="#00f2ff" stroke-width="1.2"/><line x1="515.5" y1="399.2" x2="516.7" y2="403.9" stroke="#00c9ff" stroke-width="1.2"/><line x1="516.7" y1="403.9" x2="518.0" y2="408.6" stroke="#00a1ff" stroke-width="1.2"/><line x1="518.0" y1="408.6" x2="519.2" y2="413.3" stroke="#0079ff" stroke-width="1.2"/><line x1="519.2" y1="413.3" x2="520.4" y2="418.0" stroke="#0050ff" stroke-width="1.2"/><line x1="520.4" y1="418.0" x2="527.7" y2="416.2" stroke="#005aff" stroke-width="1.2"/><line x1="527.7" y1="416.2" x2="531.4" y2="423.3" stroke="#005fff" stroke-width="1.2"/><line x1="531.4" y1="423.3" x2="535.1" y2="430.4" stroke="#002dff" stroke-width="1.2"/><line x1="535.1" y1="430.4" x2="547.3" y2="437.7" stroke="#0012ff" stroke-width="1.2"/><line x1="547.3" y1="437.7" x2="559.5" y2="445.1" stroke="#000fff" stroke-width="1.2"/><line x1="559.5" y1="445.1" x2="571.8" y2="452.5" stroke="#000bff" stroke-width="1.2"/><line x1="400.8" y1="344.1" x2="410.9" y2="348.9" stroke="#000fff" stroke-width="1.2"/><line x1="410.9" y1="348.9" x2="411.0" y2="344.9" stroke="#0028ff" stroke-width="1.2"/><line x1="411.0" y1="344.9" x2="411.0" y2="341.0" stroke="#0050ff" stroke-width="1.2"/><line x1="411.0" y1="341.0" x2="411.1" y2="337.0" stroke="#0079ff" stroke-width="1.2"/><line x1="411.1" y1="337.0" x2="411.2" y2="333.1" stroke="#00a1ff" stroke-width="1.2"/><line x1="411.2" y1="333.1" x2="411.3" y2="329.1" stroke="#00c9ff" stroke-width="1.2"/><line x1="411.3" y1="329.1" x2="411.3" y2="325.1" stroke="#00f2ff" stroke-width="1.2"/><line x1="411.3" y1="325.1" x2="411.4" y2="321.2" stroke="#00ffe3" stroke-width="1.2"/><line x1="411.4" y1="321.2" x2="411.5" y2="317.2" stroke="#00ffba" stroke-width="1.2"/><line x1="411.5" y1="317.2" x2="411.6" y2="313.3" stroke="#00ff92" stroke-width="1.2"/><line x1="411.6" y1="313.3" x2="411.7" y2="309.3" stroke="#00ff6a" stroke-width="1.2"/><line x1="411.7" y1="309.3" x2="411.7" y2="305.4" stroke="#00ff41" stroke-width="1.2"/><line x1="411.7" y1="305.4" x2="411.8" y2="301.4" stroke="#00ff19" stroke-width="1.2"/><line x1="411.8" y1="301.4" x2="414.6" y2="307.0" stroke="#00ff19" stroke-width="1.2"/><line x1="414.6" y1="307.0" x2="420.0" y2="311.9" stroke="#00ff36" stroke-width="1.2"/><line x1="420.0" y1="311.9" x2="425.5" y2="316.8" stroke="#00ff48" stroke-width="1.2"/><line x1="425.5" y1="316.8" x2="430.9" y2="321.7" stroke="#00ff5a" stroke-width="1.2"/><line x1="430.9" y1="321.7" x2="436.3" y2="326.5" stroke="#00ff6b" stroke-width="1.2"/><line x1="436.3" y1="326.5" x2="441.8" y2="331.4" stroke="#00ff7d" stroke-width="1.2"/><line x1="441.8" y1="331.4" x2="447.2" y2="336.3" stroke="#00ff8f" stroke-width="1.2"/><line x1="447.2" y1="336.3" x2="452.7" y2="341.2" stroke="#00ffa1" stroke-width="1.2"/><line x1="452.7" y1="341.2" x2="458.1" y2="346.1" stroke="#00ffb3" stroke-width="1.2"/><line x1="458.1" y1="346.1" x2="463.6" y2="351.0" stroke="#00ffc4" stroke-width="1.2"/><line x1="463.6" y1="351.0" x2="469.0" y2="355.9" stroke="#00ffd6" stroke-width="1.2"/><line x1="469.0" y1="355.9" x2="474.5" y2="360.8" stroke="#00ffe8" stroke-width="1.2"/><line x1="474.5" y1="360.8" x2="479.9" y2="365.7" stroke="#00fffa" stroke-width="1.2"/><line x1="479.9" y1="365.7" x2="485.4" y2="370.6" stroke="#00f1ff" stroke-width="1.2"/><line x1="485.4" y1="370.6" x2="490.8" y2="375.4" stroke="#00dfff" stroke-width="1.2"/><line x1="490.8" y1="375.4" x2="496.3" y2="380.3" stroke="#00ceff" stroke-width="1.2"/><line x1="496.3" y1="380.3" x2="501.7" y2="385.2" stroke="#00bcff" stroke-width="1.2"/><line x1="501.7" y1="385.2" x2="507.2" y2="390.1" stroke="#00aaff" stroke-width="1.2"/><line x1="507.2" y1="390.1" x2="514.5" y2="396.3" stroke="#0097ff" stroke-width="1.2"/><line x1="514.5" y1="396.3" x2="518.2" y2="393.4" stroke="#00a6ff" stroke-width="1.2"/><line x1="518.2" y1="393.4" x2="521.8" y2="390.5" stroke="#00d9ff" stroke-width="1.2"/><line x1="521.8" y1="390.5" x2="524.3" y2="395.9" stroke="#00deff" stroke-width="1.2"/><line x1="524.3" y1="395.9" x2="526.7" y2="401.3" stroke="#00b5ff" stroke-width="1.2"/><line x1="526.7" y1="401.3" x2="529.2" y2="406.7" stroke="#008dff" stroke-width="1.2"/><line x1="529.2" y1="406.7" x2="530.3" y2="403.0" stroke="#008fff" stroke-width="1.2"/><line x1="530.3" y1="403.0" x2="531.4" y2="399.2" stroke="#00bbff" stroke-width="1.2"/><line x1="531.4" y1="399.2" x2="532.5" y2="395.4" stroke="#00e8ff" stroke-width="1.2"/><line x1="532.5" y1="395.4" x2="533.6" y2="391.7" stroke="#00ffe9" stroke-width="1.2"/><line x1="533.6" y1="391.7" x2="534.7" y2="387.9" stroke="#00ffbc" stroke-width="1.2"/><line x1="534.7" y1="387.9" x2="535.5" y2="392.6" stroke="#00ffbc" stroke-width="1.2"/><line x1="535.5" y1="392.6" x2="536.2" y2="397.4" stroke="#00ffe7" stroke-width="1.2"/><line x1="536.2" y1="397.4" x2="537.0" y2="402.1" stroke="#00ebff" stroke-width="1.2"/><line x1="537.0" y1="402.1" x2="537.8" y2="406.9" stroke="#00bfff" stroke-width="1.2"/><line x1="537.8" y1="406.9" x2="538.6" y2="411.6" stroke="#0094ff" stroke-width="1.2"/><line x1="538.6" y1="411.6" x2="539.4" y2="416.3" stroke="#0069ff" stroke-width="1.2"/><line x1="539.4" y1="416.3" x2="540.2" y2="421.1" stroke="#003eff" stroke-width="1.2"/><line x1="540.2" y1="421.1" x2="547.5" y2="427.3" stroke="#001eff" stroke-width="1.2"/><line x1="547.5" y1="427.3" x2="559.7" y2="434.6" stroke="#0012ff" stroke-width="1.2"/><line x1="559.7" y1="434.6" x2="572.0" y2="442.0" stroke="#000fff" stroke-width="1.2"/><line x1="572.0" y1="442.0" x2="584.2" y2="449.3" stroke="#000bff" stroke-width="1.2"/><line x1="394.2" y1="345.7" x2="406.1" y2="350.6" stroke="#0014ff" stroke-width="1.2"/><line x1="406.1" y1="350.6" x2="406.1" y2="346.5" stroke="#0032ff" stroke-width="1.2"/><line x1="406.1" y1="346.5" x2="406.2" y2="342.5" stroke="#005cff" stroke-width="1.2"/><line x1="406.2" y1="342.5" x2="406.2" y2="338.4" stroke="#0085ff" stroke-width="1.2"/><line x1="406.2" y1="338.4" x2="406.2" y2="334.3" stroke="#00aeff" stroke-width="1.2"/><line x1="406.2" y1="334.3" x2="406.3" y2="330.3" stroke="#00d7ff" stroke-width="1.2"/><line x1="406.3" y1="330.3" x2="406.3" y2="326.2" stroke="#00fffc" stroke-width="1.2"/><line x1="406.3" y1="326.2" x2="406.3" y2="322.1" stroke="#00ffd3" stroke-width="1.2"/><line x1="406.3" y1="322.1" x2="406.4" y2="318.1" stroke="#00ffaa" stroke-width="1.2"/><line x1="406.4" y1="318.1" x2="406.4" y2="314.0" stroke="#00ff81" stroke-width="1.2"/><line x1="406.4" y1="314.0" x2="406.5" y2="310.0" stroke="#00ff57" stroke-width="1.2"/><line x1="406.5" y1="310.0" x2="406.5" y2="305.9" stroke="#00ff2e" stroke-width="1.2"/><line x1="406.5" y1="305.9" x2="406.5" y2="301.8" stroke="#00ff05" stroke-width="1.2"/><line x1="406.5" y1="301.8" x2="406.6" y2="297.8" stroke="#23ff00" stroke-width="1.2"/><line x1="406.6" y1="297.8" x2="406.6" y2="293.7" stroke="#4dff00" stroke-width="1.2"/><line x1="406.6" y1="293.7" x2="406.7" y2="289.7" stroke="#76ff00" stroke-width="1.2"/><line x1="406.7" y1="289.7" x2="406.7" y2="285.6" stroke="#9fff00" stroke-width="1.2"/><line x1="406.7" y1="285.6" x2="406.7" y2="281.5" stroke="#c8ff00" stroke-width="1.2"/><line x1="406.7" y1="281.5" x2="406.8" y2="277.5" stroke="#f1ff00" stroke-width="1.2"/><line x1="406.8" y1="277.5" x2="406.8" y2="273.4" stroke="#ffe200" stroke-width="1.2"/><line x1="406.8" y1="273.4" x2="406.8" y2="269.3" stroke="#ffb900" stroke-width="1.2"/><line x1="406.8" y1="269.3" x2="406.9" y2="265.3" stroke="#ff9000" stroke-width="1.2"/><line x1="406.9" y1="265.3" x2="406.9" y2="261.2" stroke="#ff6700" stroke-width="1.2"/><line x1="406.9" y1="261.2" x2="407.0" y2="257.2" stroke="#ff3d00" stroke-width="1.2"/><line x1="407.0" y1="257.2" x2="407.0" y2="253.1" stroke="#ff1400" stroke-width="1.2"/><line x1="407.0" y1="253.1" x2="407.9" y2="254.6" stroke="#ff0500" stroke-width="1.2"/><line x1="407.9" y1="254.6" x2="411.5" y2="259.1" stroke="#ff1600" stroke-width="1.2"/><line x1="411.5" y1="259.1" x2="415.2" y2="263.6" stroke="#ff2e00" stroke-width="1.2"/><line x1="415.2" y1="263.6" x2="418.8" y2="268.1" stroke="#ff4700" stroke-width="1.2"/><line x1="418.8" y1="268.1" x2="422.4" y2="272.7" stroke="#ff5f00" stroke-width="1.2"/><line x1="422.4" y1="272.7" x2="426.0" y2="277.2" stroke="#ff7800" stroke-width="1.2"/><line x1="426.0" y1="277.2" x2="429.6" y2="281.7" stroke="#ff9000" stroke-width="1.2"/><line x1="429.6" y1="281.7" x2="433.3" y2="286.2" stroke="#ffa900" stroke-width="1.2"/><line x1="433.3" y1="286.2" x2="436.9" y2="290.7" stroke="#ffc200" stroke-width="1.2"/><line x1="436.9" y1="290.7" x2="440.5" y2="295.2" stroke="#ffda00" stroke-width="1.2"/><line x1="440.5" y1="295.2" x2="444.1" y2="299.7" stroke="#fff300" stroke-width="1.2"/><line x1="444.1" y1="299.7" x2="447.8" y2="304.2" stroke="#f2ff00" stroke-width="1.2"/><line x1="447.8" y1="304.2" x2="451.4" y2="308.7" stroke="#d9ff00" stroke-width="1.2"/><line x1="451.4" y1="308.7" x2="455.0" y2="313.2" stroke="#c1ff00" stroke-width="1.2"/><line x1="455.0" y1="313.2" x2="458.6" y2="317.7" stroke="#a8ff00" stroke-width="1.2"/><line x1="458.6" y1="317.7" x2="462.2" y2="322.2" stroke="#90ff00" stroke-width="1.2"/><line x1="462.2" y1="322.2" x2="465.9" y2="326.7" stroke="#77ff00" stroke-width="1.2"/><line x1="465.9" y1="326.7" x2="469.5" y2="331.3" stroke="#5fff00" stroke-width="1.2"/><line x1="469.5" y1="331.3" x2="473.1" y2="335.8" stroke="#46ff00" stroke-width="1.2"/><line x1="473.1" y1="335.8" x2="476.7" y2="340.3" stroke="#2eff00" stroke-width="1.2"/><line x1="476.7" y1="340.3" x2="480.4" y2="344.8" stroke="#15ff00" stroke-width="1.2"/><line x1="480.4" y1="344.8" x2="484.0" y2="349.3" stroke="#00ff02" stroke-width="1.2"/><line x1="484.0" y1="349.3" x2="487.6" y2="353.8" stroke="#00ff1b" stroke-width="1.2"/><line x1="487.6" y1="353.8" x2="491.2" y2="358.3" stroke="#00ff33" stroke-width="1.2"/><line x1="491.2" y1="358.3" x2="494.8" y2="362.8" stroke="#00ff4c" stroke-width="1.2"/><line x1="494.8" y1="362.8" x2="498.5" y2="367.3" stroke="#00ff64" stroke-width="1.2"/><line x1="498.5" y1="367.3" x2="502.1" y2="371.8" stroke="#00ff7d" stroke-width="1.2"/><line x1="502.1" y1="371.8" x2="505.7" y2="376.3" stroke="#00ff96" stroke-width="1.2"/><line x1="505.7" y1="376.3" x2="509.3" y2="380.8" stroke="#00ffae" stroke-width="1.2"/><line x1="509.3" y1="380.8" x2="515.2" y2="386.2" stroke="#00ffc4" stroke-width="1.2"/><line x1="515.2" y1="386.2" x2="517.6" y2="382.6" stroke="#00ffb5" stroke-width="1.2"/><line x1="517.6" y1="382.6" x2="520.1" y2="379.0" stroke="#00ff83" stroke-width="1.2"/><line x1="520.1" y1="379.0" x2="522.5" y2="375.4" stroke="#00ff50" stroke-width="1.2"/><line x1="522.5" y1="375.4" x2="523.5" y2="372.0" stroke="#00ff23" stroke-width="1.2"/><line x1="523.5" y1="372.0" x2="524.5" y2="368.5" stroke="#05ff00" stroke-width="1.2"/><line x1="524.5" y1="368.5" x2="525.4" y2="365.1" stroke="#2dff00" stroke-width="1.2"/><line x1="525.4" y1="365.1" x2="526.4" y2="361.6" stroke="#55ff00" stroke-width="1.2"/><line x1="526.4" y1="361.6" x2="527.4" y2="358.2" stroke="#7eff00" stroke-width="1.2"/><line x1="527.4" y1="358.2" x2="528.4" y2="354.8" stroke="#a6ff00" stroke-width="1.2"/><line x1="528.4" y1="354.8" x2="529.3" y2="351.3" stroke="#cfff00" stroke-width="1.2"/><line x1="529.3" y1="351.3" x2="529.6" y2="355.6" stroke="#ceff00" stroke-width="1.2"/><line x1="529.6" y1="355.6" x2="529.9" y2="359.8" stroke="#a5ff00" stroke-width="1.2"/><line x1="529.9" y1="359.8" x2="530.3" y2="364.1" stroke="#7cff00" stroke-width="1.2"/><line x1="530.3" y1="364.1" x2="530.6" y2="368.3" stroke="#53ff00" stroke-width="1.2"/><line x1="530.6" y1="368.3" x2="530.9" y2="372.6" stroke="#29ff00" stroke-width="1.2"/><line x1="530.9" y1="372.6" x2="531.2" y2="376.8" stroke="#00ff00" stroke-width="1.2"/><line x1="531.2" y1="376.8" x2="531.5" y2="381.1" stroke="#00ff28" stroke-width="1.2"/><line x1="531.5" y1="381.1" x2="531.8" y2="385.3" stroke="#00ff51" stroke-width="1.2"/><line x1="531.8" y1="385.3" x2="532.1" y2="389.6" stroke="#00ff7a" stroke-width="1.2"/><line x1="532.1" y1="389.6" x2="532.4" y2="393.9" stroke="#00ffa3" stroke-width="1.2"/><line x1="532.4" y1="393.9" x2="532.7" y2="398.1" stroke="#00ffcd" stroke-width="1.2"/><line x1="532.7" y1="398.1" x2="533.0" y2="402.4" stroke="#00fff6" stroke-width="1.2"/><line x1="533.0" y1="402.4" x2="533.4" y2="406.6" stroke="#00deff" stroke-width="1.2"/><line x1="533.4" y1="406.6" x2="535.2" y2="412.0" stroke="#00b4ff" stroke-width="1.2"/><line x1="535.2" y1="412.0" x2="537.1" y2="417.3" stroke="#0089ff" stroke-width="1.2"/><line x1="537.1" y1="417.3" x2="539.0" y2="422.6" stroke="#005eff" stroke-width="1.2"/><line x1="539.0" y1="422.6" x2="540.9" y2="427.9" stroke="#0033ff" stroke-width="1.2"/><line x1="540.9" y1="427.9" x2="553.1" y2="435.6" stroke="#001aff" stroke-width="1.2"/><line x1="553.1" y1="435.6" x2="565.3" y2="443.3" stroke="#0014ff" stroke-width="1.2"/><line x1="565.3" y1="443.3" x2="577.6" y2="451.0" stroke="#000dff" stroke-width="1.2"/><rect x="280.2" y="361.3" width="43.6" height="20.4" fill="#505050"/><text x="302.0" y="377.2" font-size="16" fill="#d8d8d8" text-anchor="middle">1500</text><text x="371.8" y="412.5" font-size="12" fill="#ddd" text-anchor="middle">1000</text><rect x="473.1" y="466.3" width="34.7" height="20.4" fill="#505050"/><text x="490.4" y="482.2" font-size="16" fill="#d8d8d8" text-anchor="middle">100</text><text x="384.5" y="459.8" font-size="16" fill="#d0d0d0" text-anchor="middle">Vitesse (rpm)</text><rect x="522.0" y="474.2" width="48.0" height="20.4" fill="#505050"/><text x="546.0" y="490.1" font-size="16" fill="#d8d8d8" text-anchor="middle">0.000</text><text x="597.7" y="472.0" font-size="12" fill="#ddd" text-anchor="middle">1.000</text><text x="652.9" y="457.7" font-size="12" fill="#ddd" text-anchor="middle">2.000</text><text x="707.5" y="443.4" font-size="12" fill="#ddd" text-anchor="middle">3.000</text><text x="762.5" y="430.0" font-size="12" fill="#ddd" text-anchor="middle">4.000</text><rect x="798.5" y="404.5" width="48.0" height="20.4" fill="#505050"/><text x="822.5" y="420.4" font-size="16" fill="#d8d8d8" text-anchor="middle">5.000</text><text x="689.6" y="484.5" font-size="16" fill="#d0d0d0" text-anchor="middle">Ordres (-)</text><rect x="807.5" y="294.5" width="30.2" height="20.4" fill="#505050"/><text x="822.6" y="310.4" font-size="16" fill="#d8d8d8" text-anchor="middle">0.1</text><text x="819.5" y="337.5" font-size="12" fill="#ddd" text-anchor="middle">0.1</text><text x="819.5" y="369.3" font-size="12" fill="#ddd" text-anchor="middle">0.0</text><rect x="807.5" y="376.0" width="30.2" height="20.4" fill="#505050"/><text x="822.6" y="391.9" font-size="16" fill="#d8d8d8" text-anchor="middle">0.0</text><polygon points="1107.5,428.75 1153.75,317.5 1564.3,330.3 1517.4,441.2" fill="#0000ff"/><line x1="1153.8" y1="185.0" x2="1564.3" y2="197.8" stroke="#6c6c6c" stroke-width="1"/><line x1="1153.8" y1="317.5" x2="1153.8" y2="185.0" stroke="#6c6c6c" stroke-width="1"/><line x1="1564.3" y1="330.3" x2="1564.3" y2="197.8" stroke="#6c6c6c" stroke-width="1"/><line x1="1235.9" y1="320.1" x2="1235.9" y2="187.6" stroke="#6c6c6c" stroke-width="1"/><line x1="1318.0" y1="322.6" x2="1318.0" y2="190.1" stroke="#6c6c6c" stroke-width="1"/><line x1="1400.1" y1="325.2" x2="1400.1" y2="192.7" stroke="#6c6c6c" stroke-width="1"/><line x1="1482.2" y1="327.7" x2="1482.2" y2="195.2" stroke="#6c6c6c" stroke-width="1"/><line x1="1153.8" y1="291.0" x2="1564.3" y2="303.8" stroke="#6c6c6c" stroke-width="1"/><line x1="1153.8" y1="264.5" x2="1564.3" y2="277.3" stroke="#6c6c6c" stroke-width="1"/><line x1="1153.8" y1="238.0" x2="1564.3" y2="250.8" stroke="#6c6c6c" stroke-width="1"/><line x1="1153.8" y1="211.5" x2="1564.3" y2="224.3" stroke="#6c6c6c" stroke-width="1"/><line x1="1107.5" y1="428.8" x2="1107.5" y2="296.2" stroke="#6c6c6c" stroke-width="1"/><line x1="1107.5" y1="296.2" x2="1153.8" y2="185.0" stroke="#6c6c6c" stroke-width="1"/><line x1="1120.9" y1="396.5" x2="1120.9" y2="264.0" stroke="#6c6c6c" stroke-width="1"/><line x1="1138.3" y1="354.7" x2="1138.3" y2="222.2" stroke="#6c6c6c" stroke-width="1"/><line x1="1107.5" y1="402.2" x2="1153.8" y2="291.0" stroke="#6c6c6c" stroke-width="1"/><line x1="1107.5" y1="375.8" x2="1153.8" y2="264.5" stroke="#6c6c6c" stroke-width="1"/><line x1="1107.5" y1="349.2" x2="1153.8" y2="238.0" stroke="#6c6c6c" stroke-width="1"/><line x1="1107.5" y1="322.8" x2="1153.8" y2="211.5" stroke="#6c6c6c" stroke-width="1"/><line x1="1107.5" y1="428.8" x2="1517.4" y2="441.2" stroke="#6a6a9a" stroke-width="1"/><line x1="1517.4" y1="441.2" x2="1564.3" y2="330.3" stroke="#6a6a9a" stroke-width="1"/><defs><linearGradient id="rg" gradientUnits="userSpaceOnUse" x1="1262" y1="368" x2="1212" y2="244"><stop offset="0" stop-color="#0000ff"/><stop offset="0.1" stop-color="#0000ff"/><stop offset="0.27" stop-color="#00ffff"/><stop offset="0.47" stop-color="#00ff00"/><stop offset="0.72" stop-color="#ffff00"/><stop offset="0.86" stop-color="#ff9900"/><stop offset="1" stop-color="#ff0000"/></linearGradient></defs><polygon points="1176,405 1176,330 1178,315 1180,294 1183,300 1186.0,318.0 1187.0,319.0 1188.0,320.0 1189.0,321.0 1190.0,322.0 1191.0,324.0 1192.0,326.0 1192.2,317.4 1193.0,317.4 1193.2,326.0 1193.0,328.0 1194.0,330.0 1195.0,332.0 1195.2,325.3 1196.0,325.3 1196.2,332.0 1196.0,334.0 1196.2,322.7 1197.0,322.7 1197.2,334.0 1197.0,334.9 1198.0,335.7 1198.2,322.9 1199.0,322.9 1199.2,335.7 1199.0,336.6 1200.0,337.4 1201.0,338.3 1202.0,339.1 1202.2,335.0 1203.0,335.0 1203.2,339.1 1203.0,340.0 1204.0,341.0 1204.2,335.3 1205.0,335.3 1205.2,341.0 1205.0,342.0 1206.0,343.0 1206.2,334.8 1207.0,334.8 1207.2,343.0 1207.0,344.0 1208.0,345.0 1209.0,344.0 1210.0,343.0 1211.0,342.0 1212.0,341.0 1213.0,340.0 1214.0,339.0 1215.0,338.0 1216.0,337.2 1217.0,336.4 1218.0,335.6 1219.0,334.8 1220.0,334.0 1221.0,333.2 1222.0,332.4 1222.2,321.5 1223.0,321.5 1223.2,332.4 1223.0,331.6 1224.0,330.8 1225.0,330.0 1226.0,329.0 1227.0,328.0 1228.0,327.0 1228.2,321.1 1229.0,321.1 1229.2,327.0 1229.0,326.0 1230.0,325.0 1231.0,324.0 1232.0,323.0 1233.0,322.0 1233.2,312.3 1234.0,312.3 1234.2,322.0 1234.0,321.0 1235.0,320.0 1236.0,318.7 1236.2,311.7 1237.0,311.7 1237.2,318.7 1237.0,317.3 1238.0,316.0 1239.0,314.7 1239.2,308.4 1240.0,308.4 1240.2,314.7 1240.0,313.3 1240.2,308.8 1241.0,308.8 1241.2,313.3 1241.0,312.0 1242.0,310.7 1242.2,301.6 1243.0,301.6 1243.2,310.7 1243.0,309.3 1244.0,308.0 1244.2,297.4 1245.0,297.4 1245.2,308.0 1245.0,306.7 1245.2,296.9 1246.0,296.9 1246.2,306.7 1246.0,305.3 1246.2,297.5 1247.0,297.5 1247.2,305.3 1247.0,304.0 1247.2,297.6 1248.0,297.6 1248.2,304.0 1248.0,302.7 1249.0,301.3 1250.0,300.0 1251.0,298.7 1252.0,297.3 1252.2,289.8 1253.0,289.8 1253.2,297.3 1253.0,296.0 1254.0,294.7 1255.0,293.3 1255.2,280.4 1256.0,280.4 1256.2,293.3 1256.0,292.0 1256.2,285.7 1257.0,285.7 1257.2,292.0 1257.0,290.7 1258.0,289.3 1259.0,288.0 1260.0,286.7 1260.2,281.9 1261.0,281.9 1261.2,286.7 1261.0,285.3 1262.0,284.0 1263.0,282.7 1264.0,281.3 1265.0,280.0 1266.0,278.8 1267.0,277.6 1268.0,276.4 1269.0,275.2 1270.0,274.0 1270.2,268.6 1271.0,268.6 1271.2,274.0 1271.0,272.8 1272.0,271.6 1273.0,270.4 1274.0,269.2 1274.2,258.5 1275.0,258.5 1275.2,269.2 1275.0,268.0 1276.0,266.8 1276.2,254.2 1277.0,254.2 1277.2,266.8 1277.0,265.6 1278.0,264.4 1279.0,263.2 1280.0,262.0 1280.2,257.7 1281.0,257.7 1281.2,262.0 1281.0,260.8 1282.0,259.6 1283.0,258.4 1284.0,257.2 1285.0,256.0 1286.0,254.8 1287.0,253.6 1288.0,252.4 1288.2,241.9 1289.0,241.9 1289.2,252.4 1289.0,251.2 1289.2,245.1 1290.0,245.1 1290.2,251.2 1290.0,250.0 1291.0,248.8 1292.0,247.6 1293.0,246.4 1294.0,245.2 1295.0,244.0 1295.2,239.9 1296.0,239.9 1296.2,244.0 1296.0,242.9 1297.0,241.9 1298.0,240.8 1298.2,235.2 1299.0,235.2 1299.2,240.8 1299.0,239.7 1300.0,238.7 1301.0,237.6 1301.2,230.3 1302.0,230.3 1302.2,237.6 1302.0,236.5 1303.0,235.5 1304.0,234.4 1305.0,233.3 1306.0,232.3 1307.0,231.2 1307.2,226.9 1308.0,226.9 1308.2,231.2 1308.0,230.1 1308.2,217.9 1309.0,217.9 1309.2,230.1 1309.0,229.1 1310.0,228.0 1311.0,226.9 1311.2,217.2 1312.0,217.2 1312.2,226.9 1312.0,225.8 1313.0,224.8 1314.0,223.7 1315.0,222.6 1316.0,221.5 1316.2,212.6 1317.0,212.6 1317.2,221.5 1317.0,220.4 1318.0,219.3 1319.0,218.2 1320.0,217.2 1321.0,216.1 1322.0,215.0 1323.0,213.8 1324.0,212.5 1325.0,211.2 1326.0,210.0 1327.0,208.8 1328.0,207.5 1329.0,206.2 1330.0,205.0 1331.0,204.3 1332.0,203.6 1333.0,202.9 1334.0,202.1 1335.0,201.4 1335.2,191.7 1336.0,191.7 1336.2,201.4 1336.0,200.7 1337.0,200.0 1338.0,200.2 1339.0,200.5 1340.0,200.8 1341.0,201.0 1342.0,205.5 1341,201 1343,210 1345,330" fill="url(#rg)"/><polygon points="1150,410 1162,392 1168,398 1176,380 1176,405" fill="#1030ff"/><rect x="1069.2" y="295.3" width="30.2" height="20.4" fill="#505050"/><text x="1084.3" y="311.2" font-size="16" fill="#d8d8d8" text-anchor="middle">0.1</text><text x="1085.7" y="352.6" font-size="12" fill="#ddd" text-anchor="middle">0.1</text><text x="1085.7" y="379.0" font-size="12" fill="#ddd" text-anchor="middle">0.0</text><rect x="1069.2" y="407.3" width="30.2" height="20.4" fill="#505050"/><text x="1084.3" y="423.2" font-size="16" fill="#d8d8d8" text-anchor="middle">0.0</text><rect x="1077.5" y="447.3" width="48.0" height="20.4" fill="#505050"/><text x="1101.5" y="463.2" font-size="16" fill="#d8d8d8" text-anchor="middle">0.000</text><text x="1184.3" y="461.8" font-size="12" fill="#ddd" text-anchor="middle">10.071</text><text x="1265.8" y="464.6" font-size="12" fill="#ddd" text-anchor="middle">20.142</text><text x="1348.3" y="466.7" font-size="12" fill="#ddd" text-anchor="middle">30.212</text><text x="1429.8" y="468.7" font-size="12" fill="#ddd" text-anchor="middle">40.283</text><rect x="1482.9" y="460.3" width="56.9" height="20.4" fill="#505050"/><text x="1511.4" y="476.2" font-size="16" fill="#d8d8d8" text-anchor="middle">50.049</text><text x="1303.0" y="490.6" font-size="16" fill="#d0d0d0" text-anchor="middle">Fréquence (Hz)</text><rect x="1596.9" y="322.2" width="43.6" height="20.4" fill="#505050"/><text x="1618.7" y="338.1" font-size="16" fill="#d8d8d8" text-anchor="middle">1500</text><text x="1594.9" y="376.2" font-size="12" fill="#ddd" text-anchor="middle">1000</text><text x="1609.1" y="425.0" font-size="16" fill="#d0d0d0" text-anchor="middle">Vitesse (rpm)</text><rect x="1546.0" y="433.0" width="34.7" height="20.4" fill="#505050"/><text x="1563.3" y="448.9" font-size="16" fill="#d8d8d8" text-anchor="middle">100</text></svg>
<div class="a" style="left:143px;top:882px;width:42px;height:22px;background:#cdd1d8;overflow:hidden"><div class="t" style="left:33px;top:5px;font-size:11.5px;color:#b4b4b4">Capture Plein écran</div></div>
<div class="a" style="left:185px;top:882px;width:156px;height:22px;background:#0f1316;overflow:hidden"><div class="t" style="left:-9px;top:5px;font-size:11.5px;color:#2c2c2c">Capture Plein écran</div></div>
<svg class="a" style="left:0;top:0" width="1920" height="1080" viewBox="0 0 1920 1080" font-family="Liberation Sans, sans-serif"><line x1="281" y1="635.5" x2="920" y2="635.5" stroke="#c8c8c8" stroke-width="1" stroke-dasharray="3,3"/><line x1="281" y1="673.5" x2="920" y2="673.5" stroke="#c8c8c8" stroke-width="1" stroke-dasharray="3,3"/><line x1="281" y1="712.5" x2="920" y2="712.5" stroke="#c8c8c8" stroke-width="1" stroke-dasharray="3,3"/><line x1="281" y1="750.5" x2="920" y2="750.5" stroke="#c8c8c8" stroke-width="1" stroke-dasharray="3,3"/><line x1="441.5" y1="635" x2="441.5" y2="788" stroke="#c8c8c8" stroke-width="1" stroke-dasharray="3,3"/><line x1="601.5" y1="635" x2="601.5" y2="788" stroke="#c8c8c8" stroke-width="1" stroke-dasharray="3,3"/><line x1="760.5" y1="635" x2="760.5" y2="788" stroke="#c8c8c8" stroke-width="1" stroke-dasharray="3,3"/><path d="M281.5,635 V788.5 H920.5 V635" fill="none" stroke="#a8a8a8" stroke-width="1"/><line x1="281" y1="855.5" x2="920" y2="855.5" stroke="#c8c8c8" stroke-width="1" stroke-dasharray="3,3"/><line x1="281" y1="893.5" x2="920" y2="893.5" stroke="#c8c8c8" stroke-width="1" stroke-dasharray="3,3"/><line x1="281" y1="932.5" x2="920" y2="932.5" stroke="#c8c8c8" stroke-width="1" stroke-dasharray="3,3"/><line x1="281" y1="970.5" x2="920" y2="970.5" stroke="#c8c8c8" stroke-width="1" stroke-dasharray="3,3"/><line x1="441.5" y1="855" x2="441.5" y2="1008" stroke="#c8c8c8" stroke-width="1" stroke-dasharray="3,3"/><line x1="601.5" y1="855" x2="601.5" y2="1008" stroke="#c8c8c8" stroke-width="1" stroke-dasharray="3,3"/><line x1="760.5" y1="855" x2="760.5" y2="1008" stroke="#c8c8c8" stroke-width="1" stroke-dasharray="3,3"/><path d="M281.5,855 V1008.5 H920.5 V855" fill="none" stroke="#a8a8a8" stroke-width="1"/><polyline points="281,788 373,788 377,779 385,781 393,779 397,779 404,772 412,777 418,786 424,780 431.7,760 435,732 438.3,705.6 440.6,687.8 445.4,676.7 450.6,685.6 453.9,697.8 460.6,705.6 467.2,723.3 477.2,733.3 486.1,729.6 496.1,734.4 511.7,738.9 522.8,740.4 538.3,738.4 560.6,737.8 580,732.2 588.9,731.6 602.2,727.8 624.4,724 632.2,722.2 653.3,711.8 682.2,702.2 704.4,695.6 731.1,687.8 757.8,678.9 780,672.2 802.2,664.4 824.4,656.2 837.8,650 864.4,638.4 873.8,635.6 875.6,667.8 876.7,712.2 877.8,745.6 879.6,787.8 920,787.8" fill="none" stroke="#00ff00" stroke-width="1.1"/><polyline points="281.5,932.2 372.4,932.2 377.8,870 381,868.6 386.3,860.5 392.7,856.2 400,855.8 404.4,871 412.9,881.8 417.2,901 421.4,960.6 427.8,961.6 436.3,977.6 443.2,1007.4" fill="none" stroke="#00ff00" stroke-width="1.1"/><polyline points="443.8,855.8 454.4,870 468.3,877 478.9,877.5 485.3,879.6 498.1,885 580,885.4 639.6,885.4 643.9,884.3 648.2,885.6 666.3,885.6 667.3,886.5 695,886.7 696.1,887.5 822.8,887.5 825,888.6 827,887.5 873.9,887.5 875,892.4 879.3,931.8 920.2,931.8" fill="none" stroke="#00ff00" stroke-width="1.1"/><line x1="392" y1="1008" x2="398" y2="1008" stroke="#00ff00" stroke-width="1.2"/><text x="286" y="806" font-size="16" fill="#c0c0c0" text-anchor="start">100.00</text><text x="441.5" y="806" font-size="16" fill="#c0c0c0" text-anchor="middle">450.00</text><text x="601" y="806" font-size="16" fill="#c0c0c0" text-anchor="middle">800.00</text><text x="760" y="806" font-size="16" fill="#c0c0c0" text-anchor="middle">1150.00</text><text x="916" y="806" font-size="16" fill="#c0c0c0" text-anchor="end">1500.00</text><text x="286" y="1026" font-size="16" fill="#c0c0c0" text-anchor="start">100.00</text><text x="441.5" y="1026" font-size="16" fill="#c0c0c0" text-anchor="middle">450.00</text><text x="601" y="1026" font-size="16" fill="#c0c0c0" text-anchor="middle">800.00</text><text x="760" y="1026" font-size="16" fill="#c0c0c0" text-anchor="middle">1150.00</text><text x="916" y="1026" font-size="16" fill="#c0c0c0" text-anchor="end">1500.00</text><text x="600" y="631" font-size="15.5" fill="#c0c0c0" text-anchor="middle">Order view</text><text x="600" y="851" font-size="15.5" fill="#c0c0c0" text-anchor="middle">Order view</text><text transform="translate(254,797) rotate(-90)" font-size="15.7" fill="#00ff00">OT 1/X/Order H1; [g rms]</text><text transform="translate(273,788) rotate(-90)" font-size="15.6" fill="#00ff00">0.0000</text><text transform="translate(273,684) rotate(-90)" font-size="15.6" fill="#00ff00">0.1286</text><text transform="translate(939,788) rotate(-90)" font-size="16" fill="#a4a4a4">Speed (rpm)</text><text transform="translate(254,1026) rotate(-90)" font-size="15.7" fill="#00ff00">OT 1/X/Order H1; [deg rms]</text><text transform="translate(273,1008) rotate(-90)" font-size="15.6" fill="#00ff00">-180.0000</text><text transform="translate(273,921) rotate(-90)" font-size="15.6" fill="#00ff00">180.0000</text><text transform="translate(939,1008) rotate(-90)" font-size="16" fill="#a4a4a4">Speed (rpm)</text><rect x="953" y="601" width="228" height="106" fill="#000" stroke="#d4d4d4" stroke-width="2"/><text x="957" y="618" font-size="15.8" fill="#ffff00">Speed (rpm)</text><text x="1176" y="617" font-size="13.5" fill="#c8c8c8" text-anchor="end">ACT</text><line x1="956" y1="625.5" x2="1178" y2="625.5" stroke="#bdbdbd" stroke-width="1"/><text x="1173" y="683" font-size="58" fill="#00ff00" stroke="#000" stroke-width="1.8" text-anchor="end" font-family="Liberation Mono, monospace">980.4</text><rect x="1080" y="657" width="11" height="12" fill="#000"/><rect x="1112" y="670" width="18" height="16" fill="#000"/><circle cx="1122" cy="678.7" r="4.6" fill="#00ff00"/></svg>
<div class="a" style="left:0px;top:1040px;width:1920px;height:40px;background:linear-gradient(90deg,#213a44 0%,#1f3842 45%,#1e3344 70%,#1b2a46 100%)"></div>
<svg class="a" style="left:15px;top:1051px" width="18" height="18" viewBox="0 0 18 18"><path d="M1,3 L7.6,2 V8.4 H1 Z M8.6,1.8 L17,0.6 V8.4 H8.6 Z M1,9.4 H7.6 V16 L1,15 Z M8.6,9.4 H17 V17.4 L8.6,16.2 Z" fill="#fff"/></svg>
<div class="a" style="left:48px;top:1041px;width:344px;height:39px;background:#f0f0f0;border:1px solid #c9c9c9;border-bottom:none"></div>
<svg class="a" style="left:58px;top:1050px" width="20" height="20" viewBox="0 0 20 20"><circle cx="11.5" cy="7.5" r="5.3" fill="none" stroke="#111" stroke-width="1.3"/><path d="M7.8,11.2 L1.5,17.5" stroke="#111" stroke-width="1.4"/></svg>
<div class="t" style="left:88px;top:1054px;font-size:14.2px;color:#1b1b1b;">Taper ici pour rechercher</div>
<svg class="a" style="left:315px;top:1043px" width="76" height="36" viewBox="0 0 76 36"><path d="M30,11 C28,4 31,1.5 36,1.5 C41,1.5 44,4 42,11" fill="none" stroke="#e5589a" stroke-width="4.5"/><path d="M42,9 L27,33" stroke="#f27db3" stroke-width="5.5" stroke-linecap="butt"/><path d="M30,9 L46,33" stroke="#f590c0" stroke-width="5.5" stroke-linecap="butt"/><circle cx="5" cy="14" r="2" fill="#c77de8"/><circle cx="14" cy="20" r="2.6" fill="none" stroke="#f58bbd" stroke-width="1.3"/><path d="M58,18 L60,21 L63,22 L60,23 L58,26 L57,23 L54,22 L57,21 Z" fill="#c77de8"/><circle cx="69" cy="13" r="2" fill="#f58bbd"/></svg>
<svg class="a" style="left:406px;top:1047px" width="26" height="26" viewBox="0 0 26 26"><defs><radialGradient id="ff" cx="0.5" cy="0.3" r="0.8"><stop offset="0" stop-color="#ffd43b"/><stop offset="0.5" stop-color="#ff7139"/><stop offset="1" stop-color="#e31587"/></radialGradient></defs><circle cx="13" cy="14" r="11" fill="url(#ff)"/><path d="M16,1 C22,5 24,10 23,14 L17,9 Z" fill="#ffbd2e"/><circle cx="13" cy="13.5" r="5.5" fill="#7542e5"/><path d="M3,10 C6,8 10,9 12,11 L7,14 Z" fill="#ff9640"/></svg>
<svg class="a" style="left:456px;top:1050px" width="24" height="21" viewBox="0 0 24 21"><path d="M1,1 H8 L10,3 H23 V19 H1 Z" fill="#f4c64b"/><rect x="1" y="5" width="22" height="14" fill="#ffd86b"/><path d="M7,20 V11 H17 V20 H14 V15 H10 V20 Z" fill="#3a97e6"/></svg>
<div class="a" style="left:497px;top:1078px;width:153px;height:2px;background:#78b7e8"></div>
<svg class="a" style="left:504px;top:1050px" width="24" height="20" viewBox="0 0 24 20"><polygon points="11.5,1 22,18 1,18" fill="#f15a29"/><path d="M11.5,0.5 V12 L0.5,18.5 M11.5,12 L22.5,18.5" stroke="#1f3742" stroke-width="1.3" fill="none"/></svg>
<div class="t" style="left:531px;top:1054px;font-size:12px;color:#fff;">DewesoftX - Fichier...</div>
<svg class="a" style="left:1700px;top:1050px" width="110" height="22" viewBox="0 0 110 22"><path d="M6.5,14 L12,8.5 L17.5,14" fill="none" stroke="#fff" stroke-width="1.3"/><path d="M29,6 C32,5.5 34,4.5 36.5,3 C39,4.5 41,5.5 44,6 V11 C44,16 40,19 36.5,20 C33,19 29,16 29,11 Z" fill="#fff" stroke="#000" stroke-width="1"/><path d="M36.5,3 V20 M29,11.5 H44" stroke="#000" stroke-width="1"/><circle cx="40.5" cy="16" r="4" fill="#16a34a"/><path d="M38.6,16 L40,17.4 L42.5,14.8" fill="none" stroke="#fff" stroke-width="1"/><path d="M53,7 V10 M56,7 V10 M52,10 H57 V12 Q54.5,15 52,12 Z M54.5,14 V17" fill="none" stroke="#fff" stroke-width="1.1"/><rect x="56" y="9" width="11" height="7" fill="none" stroke="#fff" stroke-width="1.1"/><rect x="67.5" y="11" width="1.3" height="3" fill="#fff"/><rect x="57.5" y="10.5" width="6" height="4" fill="#fff"/><rect x="82" y="6" width="14" height="10" fill="none" stroke="#fff" stroke-width="1.1"/><path d="M89,16 V19 M85,19 H93" stroke="#fff" stroke-width="1.1"/><path d="M78,6 V19 H82" fill="none" stroke="#fff" stroke-width="1"/><rect x="77" y="5" width="5" height="4" fill="none" stroke="#fff" stroke-width="1"/></svg>
<div class="t" style="left:1812px;top:1045px;font-size:12px;color:#fff;width:40px;text-align:center">10:24</div>
<div class="t" style="left:1804px;top:1062px;font-size:12px;color:#fff;">19/10/2022</div>
<svg class="a" style="left:1876px;top:1048px" width="28" height="28" viewBox="0 0 28 28"><path d="M3,2.5 H19 V14 H8 L4.5,17.5 V14 H3 Z" fill="#fff"/><path d="M6,6 H16 M6,9 H16" stroke="#1b2a47" stroke-width="1.2"/><circle cx="19" cy="18.5" r="7.5" fill="#333" stroke="#8a8a8a" stroke-width="1"/><text x="19" y="22.5" font-size="11" fill="#fff" text-anchor="middle" font-family="Liberation Sans" font-weight="bold">21</text></svg>
<div class="a" style="left:1915px;top:1040px;width:1px;height:40px;background:#5a6680"></div></body></html>
